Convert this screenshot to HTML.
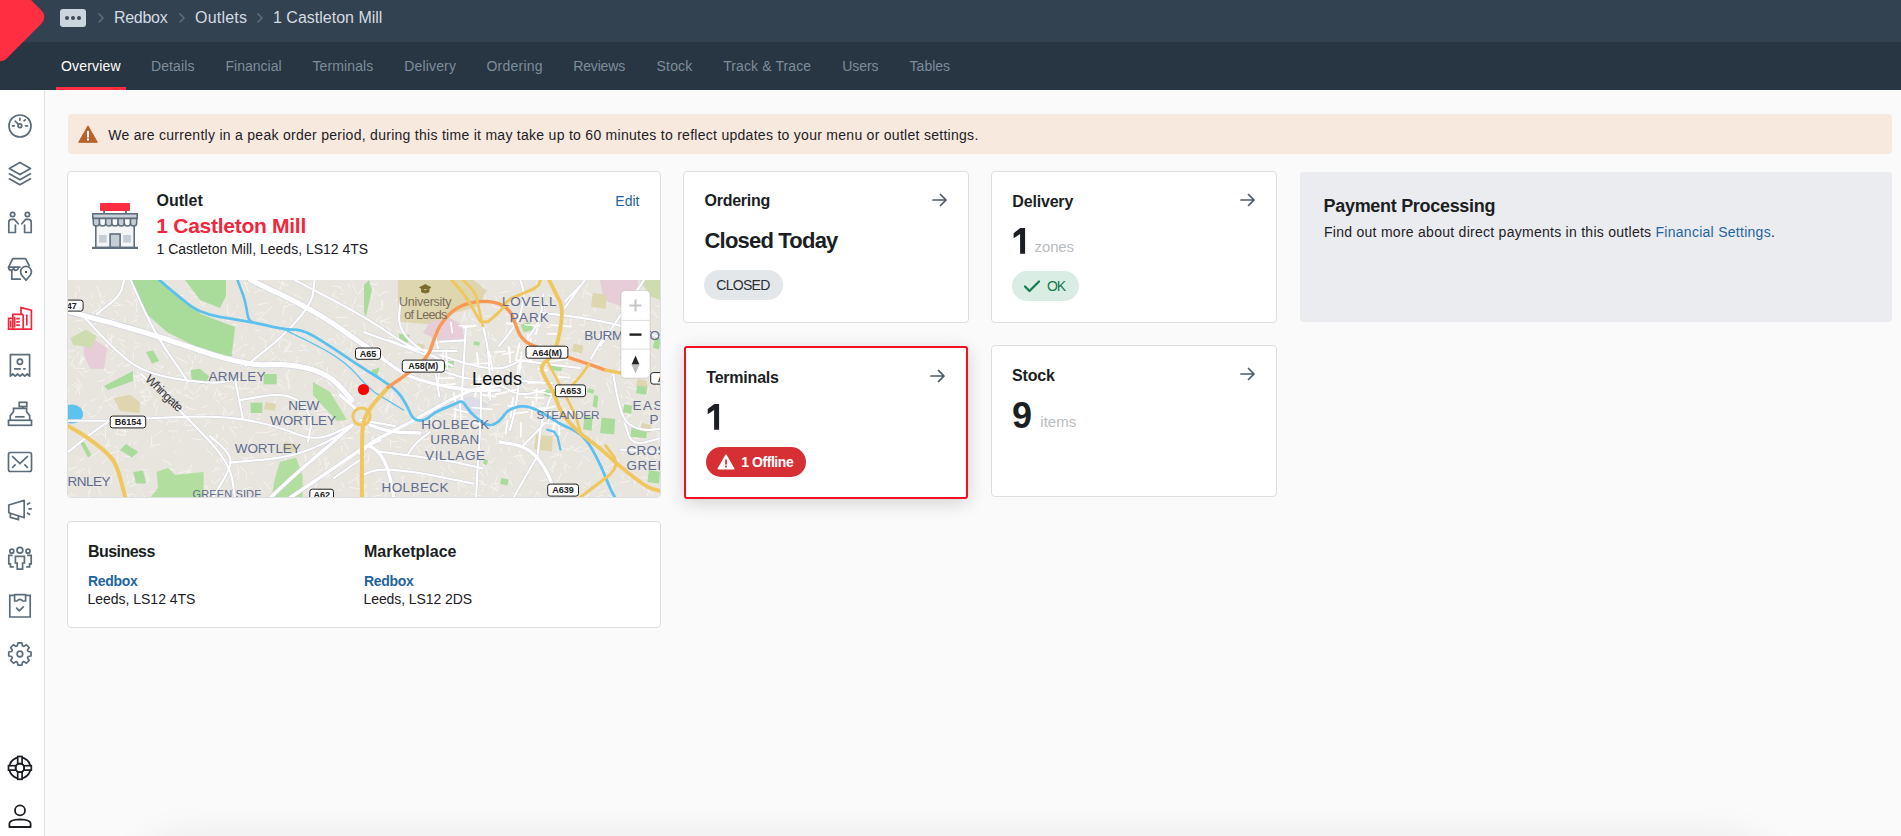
<!DOCTYPE html>
<html><head><meta charset="utf-8">
<style>
*{box-sizing:border-box;margin:0;padding:0}
html,body{width:1901px;height:836px;overflow:hidden;background:#fafafa;font-family:"Liberation Sans",sans-serif;color:#1b1f24}
.abs{position:absolute}
.t{position:absolute;white-space:nowrap}
.card{position:absolute;background:#fff;border:1px solid #dcdee1;border-radius:4px}
</style></head>
<body>
<div class="abs" style="left:0;top:0;width:1901px;height:42px;background:#334250"></div>
<div class="abs" style="left:0;top:42px;width:1901px;height:48px;background:#283542"></div>
<div class="abs" style="left:0;top:0;width:60px;height:90px;overflow:hidden"><div class="abs" style="left:-34px;top:-16.8px;width:68px;height:68px;background:#ff2e40;border-radius:9px;transform:rotate(45deg)"></div></div>

<!-- breadcrumb -->
<div class="abs" style="left:60px;top:9px;width:26px;height:18px;background:#cbd5dd;border-radius:3px"></div>
<div class="abs" style="left:65px;top:16px;width:4px;height:4px;border-radius:2px;background:#3d4a56"></div>
<div class="abs" style="left:71px;top:16px;width:4px;height:4px;border-radius:2px;background:#3d4a56"></div>
<div class="abs" style="left:77px;top:16px;width:4px;height:4px;border-radius:2px;background:#3d4a56"></div>
<svg class="abs" style="left:96px;top:12px" width="10" height="12"><path d="M2.5 1.5 L7 6 L2.5 10.5" stroke="#5d6c7a" stroke-width="1.5" fill="none"/></svg>
<svg class="abs" style="left:177px;top:12px" width="10" height="12"><path d="M2.5 1.5 L7 6 L2.5 10.5" stroke="#5d6c7a" stroke-width="1.5" fill="none"/></svg>
<svg class="abs" style="left:255px;top:12px" width="10" height="12"><path d="M2.5 1.5 L7 6 L2.5 10.5" stroke="#5d6c7a" stroke-width="1.5" fill="none"/></svg>
<div class="abs" style="left:56px;top:87px;width:70px;height:3px;background:#ff2e40"></div>

<!-- sidebar -->
<div class="abs" style="left:0;top:90px;width:45px;height:746px;background:#fff;border-right:1px solid #dfe1e4"></div>
<svg class="abs" style="left:0;top:0" width="45" height="836" viewBox="0 0 45 836">
<g fill="none" stroke="#5b6c7b" stroke-width="1.7" stroke-linecap="round" stroke-linejoin="round">
  <!-- gauge -->
  <circle cx="20" cy="126" r="11"/>
  <circle cx="19.9" cy="125.8" r="1.9"/>
  <path d="M18.6 124.5 L15.2 121.1"/>
  <path d="M19.9 118.3 V120.2 M24 120.8 L25.2 119.8 M12.5 125.8 H14.3 M25.5 125.8 H27.5"/>
  <!-- layers -->
  <path d="M19.9 162.6 L30.5 168.6 L19.9 174.6 L9.3 168.6 Z"/>
  <path d="M9.3 173.8 L19.9 179.8 L30.5 173.8"/>
  <path d="M9.3 178.8 L19.9 184.8 L30.5 178.8"/>
  <!-- people -->
  <circle cx="12.6" cy="214.5" r="2.2"/>
  <circle cx="27.4" cy="214.5" r="2.2"/>
  <path d="M15.4 225 V232.5 H8.8 V222.3 Q8.8 219.4 11.8 219.4 H14.4 L18.2 223.8"/>
  <path d="M24.6 225 V232.5 H31.2 V222.3 Q31.2 219.4 28.2 219.4 H25.6 L21.8 223.8"/>
  <!-- store pin -->
  <path d="M11.8 270.2 V279.2 H20.2"/>
  <path d="M20 267.2 H8.6 L12.8 258.6 H25.6 L29.2 265.5"/>
  <path d="M8.6 267.2 Q8.6 270.3 11.4 270.3 Q13.2 270.3 13.6 268.2 Q14.2 270.3 16 270.3 Q17.8 270.3 18.2 268.2"/>
  <path d="M26 280.3 L21.6 275 Q20.6 273.4 20.6 271.8 A5.4 5.4 0 0 1 31.4 271.8 Q31.4 273.4 30.4 275 Z"/>
</g>
<circle cx="26" cy="272" r="1.1" fill="#1b1f24"/>
<!-- building red -->
<g fill="none" stroke="#f0283c" stroke-width="1.7" stroke-linejoin="miter">
  <path d="M8.6 329.2 V318.4 H12.8 V314.4 H21 V307.6 L31.4 310.2 V329.2 Z"/>
  <path d="M12.8 318.4 V329.2 M23.2 314.4 V329.2 M21 314.4 H23.2"/>
  <path d="M10.6 320.5 V327.5 M14.6 316.8 V327.6 M16.2 318.6 H19.8 M16.2 321.9 H19.8 M16.2 325.1 H19.8 M26.8 314.6 V325.4"/>
</g>
<g fill="none" stroke="#5b6c7b" stroke-width="1.7" stroke-linecap="butt" stroke-linejoin="miter">
  <!-- receipt -->
  <path d="M10.4 376.2 V354.6 H29.6 V376.2 L27.2 374 L24.8 376.2 L22.4 374 L20 376.2 L17.6 374 L15.2 376.2 L12.8 374 Z" stroke-linejoin="round"/>
  <circle cx="19.9" cy="361.8" r="2.6"/>
  <path d="M14.1 368.8 H20.8 M23.2 368.8 H25.6"/>
  <!-- cash register -->
  <rect x="19.2" y="402.3" width="7.6" height="4.2"/>
  <path d="M22.8 406.5 V408.4"/>
  <path d="M10.3 420.3 V415.6 L13.5 411.7 V408.4 H26.6 V411.7 L29.7 415.6 V420.3"/>
  <path d="M15.1 416.8 H24.6"/>
  <rect x="8.5" y="420.3" width="23" height="5"/>
  <!-- mail -->
  <rect x="8.5" y="452.5" width="23" height="19" rx="2"/>
  <path d="M12.2 456.2 L19.9 463.6 L27.8 456.2 M12.2 467.8 L15.6 464.4 M24.4 464.4 L27.8 467.8"/>
  <!-- megaphone -->
  <path d="M8.8 505 L24.2 500.4 V517.7 L8.8 512.7 Z" stroke-linejoin="round"/>
  <path d="M10.4 513.5 V517.3 L18.4 519.6 V515.8"/>
  <path d="M27 504.6 L30.2 502.7 M28.4 508.9 H31.8 M27 512.8 L30.2 514.8"/>
  <!-- group -->
  <circle cx="19.9" cy="550.3" r="2.9"/>
  <circle cx="11.8" cy="551.2" r="2"/>
  <circle cx="28" cy="551.2" r="2"/>
  <path d="M15.4 556.4 H24.4 V563 H22.6 V569.2 H17.2 V563 H15.4 Z"/>
  <path d="M12.6 555.4 H8.8 V563.8 H10.4 V566.8 H13.8"/>
  <path d="M27.2 555.4 H31.2 V563.8 H29.6 V566.8 H26.2"/>
  <!-- clipboard -->
  <path d="M14.6 595.4 H9.8 V617 H30.2 V595.4 H25.6"/>
  <path d="M14.6 594.6 V601 H17 Q19.9 597.6 22.8 601 H25.6 V594.6 Z" stroke-linejoin="round"/>
  <path d="M16.6 608.2 L19.3 610.9 L23.3 606.8" stroke-linecap="round" stroke-linejoin="round"/>
</g>
<!-- gear -->
<g fill="none" stroke="#5b6c7b" stroke-width="1.7" stroke-linejoin="round">
  <path d="M17.36 645.78 L17.92 642.87 L21.88 642.87 L22.44 645.78 L23.91 646.39 L26.37 644.73 L29.17 647.53 L27.51 649.99 L28.12 651.46 L31.03 652.02 L31.03 655.98 L28.12 656.54 L27.51 658.01 L29.17 660.47 L26.37 663.27 L23.91 661.61 L22.44 662.22 L21.88 665.13 L17.92 665.13 L17.36 662.22 L15.89 661.61 L13.43 663.27 L10.63 660.47 L12.29 658.01 L11.68 656.54 L8.77 655.98 L8.77 652.02 L11.68 651.46 L12.29 649.99 L10.63 647.53 L13.43 644.73 L15.89 646.39 Z"/>
  <circle cx="19.9" cy="654" r="2.8"/>
</g>
<!-- lifebuoy -->
<g fill="none" stroke="#1b1f24" stroke-width="1.8">
  <circle cx="19.9" cy="767.9" r="10.6"/>
  <circle cx="19.9" cy="767.9" r="4.3"/>
</g>
<g fill="#fff" stroke="#1b1f24" stroke-width="1.7">
  <rect x="17.7" y="756.5" width="4.4" height="7.2"/>
  <rect x="17.7" y="772.1" width="4.4" height="7.2"/>
  <rect x="8.5" y="765.7" width="7.2" height="4.4"/>
  <rect x="24.1" y="765.7" width="7.2" height="4.4"/>
</g>
<circle cx="19.9" cy="767.9" r="3.4" fill="#fff"/>
<circle cx="19.9" cy="767.9" r="4.3" fill="none" stroke="#1b1f24" stroke-width="1.8"/>
<!-- user -->
<g fill="none" stroke="#1b1f24" stroke-width="1.8" stroke-linejoin="round">
  <circle cx="20" cy="810.4" r="5"/>
  <path d="M9.4 827 V823.6 Q9.4 819.6 20 819.4 Q30.6 819.6 30.6 823.6 V827 Z"/>
</g>
</svg>


<!-- alert -->
<div class="abs" style="left:68px;top:114px;width:1824px;height:40px;background:#f8e9df;border-radius:4px"></div>
<svg class="abs" style="left:78px;top:125px" width="20" height="18"><path d="M10 0.8 L19.3 17.3 L0.7 17.3 Z" fill="#b6622b" stroke="#b6622b" stroke-width="1" stroke-linejoin="round"/><rect x="9" y="6" width="2" height="6.5" fill="#fff"/><rect x="9" y="13.5" width="2" height="2" fill="#fff"/></svg>

<!-- outlet card -->
<div class="card" style="left:67px;top:171px;width:594px;height:327px;overflow:hidden"></div>
<svg class="abs" style="left:90px;top:201px" width="50" height="50" viewBox="90 201 50 50">
  <rect x="100" y="203" width="30" height="8" rx="1" fill="#ff2d40"/>
  <rect x="103.2" y="210.5" width="1.8" height="3.5" fill="#5f6f7d"/>
  <rect x="125" y="210.5" width="1.8" height="3.5" fill="#5f6f7d"/>
  <rect x="95.8" y="224" width="38.4" height="23.5" fill="#f4f5f6" stroke="#5f6f7d" stroke-width="1.6"/>
  <rect x="92.8" y="213.8" width="44.4" height="4.6" fill="#c9d2da" stroke="#5f6f7d" stroke-width="1.6"/>
  <path d="M93.3 218.4 V223 A3.10 3.10 0 0 0 99.5 223 V218.4 Z" fill="#c5ced6" stroke="#5f6f7d" stroke-width="1.5" stroke-linejoin="round"/><path d="M99.5 218.4 V223 A3.10 3.10 0 0 0 105.7 223 V218.4 Z" fill="#f6f7f8" stroke="#5f6f7d" stroke-width="1.5" stroke-linejoin="round"/><path d="M105.7 218.4 V223 A3.10 3.10 0 0 0 111.9 223 V218.4 Z" fill="#c5ced6" stroke="#5f6f7d" stroke-width="1.5" stroke-linejoin="round"/><path d="M111.9 218.4 V223 A3.10 3.10 0 0 0 118.1 223 V218.4 Z" fill="#f6f7f8" stroke="#5f6f7d" stroke-width="1.5" stroke-linejoin="round"/><path d="M118.1 218.4 V223 A3.10 3.10 0 0 0 124.3 223 V218.4 Z" fill="#c5ced6" stroke="#5f6f7d" stroke-width="1.5" stroke-linejoin="round"/><path d="M124.3 218.4 V223 A3.10 3.10 0 0 0 130.5 223 V218.4 Z" fill="#f6f7f8" stroke="#5f6f7d" stroke-width="1.5" stroke-linejoin="round"/><path d="M130.5 218.4 V223 A3.10 3.10 0 0 0 136.7 223 V218.4 Z" fill="#c5ced6" stroke="#5f6f7d" stroke-width="1.5" stroke-linejoin="round"/>
  <rect x="99" y="235" width="7.7" height="7.6" fill="#c5ced6"/>
  <rect x="123.2" y="235" width="7.8" height="7.6" fill="#c5ced6"/>
  <rect x="110.1" y="234" width="10" height="13.5" fill="#c5ced6" stroke="#5f6f7d" stroke-width="1.6"/>
  <rect x="92" y="246.8" width="46" height="2.2" fill="#5f6f7d"/>
</svg>
<div class="abs" style="left:68px;top:280px;width:592px;height:217px;overflow:hidden;background:#e8e4df">
<svg width="592" height="217" viewBox="68 280 592 217" style="position:absolute;left:0;top:0;display:block">
<rect x="68" y="280" width="592" height="217" fill="#e8e4de"/>
<line x1="335.8" y1="401.5" x2="337.0" y2="412.7" stroke="#f7f5f2" stroke-width="0.9"/>
<line x1="368.6" y1="407.5" x2="368.5" y2="412.1" stroke="#f7f5f2" stroke-width="0.9"/>
<line x1="440.9" y1="452.1" x2="443.1" y2="455.2" stroke="#f7f5f2" stroke-width="0.9"/>
<line x1="121.7" y1="455.7" x2="130.8" y2="456.9" stroke="#f7f5f2" stroke-width="0.9"/>
<line x1="649.5" y1="489.4" x2="646.3" y2="497.7" stroke="#f7f5f2" stroke-width="0.9"/>
<line x1="161.2" y1="283.3" x2="168.9" y2="284.7" stroke="#f7f5f2" stroke-width="0.9"/>
<line x1="180.6" y1="332.5" x2="181.0" y2="335.8" stroke="#f7f5f2" stroke-width="0.9"/>
<line x1="328.8" y1="462.8" x2="325.5" y2="469.7" stroke="#f7f5f2" stroke-width="0.9"/>
<line x1="363.9" y1="423.8" x2="368.4" y2="429.2" stroke="#f7f5f2" stroke-width="0.9"/>
<line x1="658.6" y1="496.1" x2="652.2" y2="504.5" stroke="#f7f5f2" stroke-width="0.9"/>
<line x1="254.6" y1="329.8" x2="260.1" y2="331.1" stroke="#f7f5f2" stroke-width="0.9"/>
<line x1="521.6" y1="366.9" x2="525.3" y2="376.8" stroke="#f7f5f2" stroke-width="0.9"/>
<line x1="635.2" y1="463.9" x2="637.5" y2="465.7" stroke="#f7f5f2" stroke-width="0.9"/>
<line x1="606.9" y1="382.0" x2="610.6" y2="393.2" stroke="#f7f5f2" stroke-width="0.9"/>
<line x1="111.2" y1="416.6" x2="117.9" y2="424.1" stroke="#f7f5f2" stroke-width="0.9"/>
<line x1="119.6" y1="352.2" x2="111.1" y2="360.2" stroke="#f7f5f2" stroke-width="0.9"/>
<line x1="137.9" y1="333.5" x2="141.7" y2="334.2" stroke="#f7f5f2" stroke-width="0.9"/>
<line x1="539.8" y1="318.6" x2="541.2" y2="326.5" stroke="#f7f5f2" stroke-width="0.9"/>
<line x1="180.9" y1="438.8" x2="179.1" y2="442.6" stroke="#f7f5f2" stroke-width="0.9"/>
<line x1="137.0" y1="371.3" x2="140.2" y2="375.0" stroke="#f7f5f2" stroke-width="0.9"/>
<line x1="642.8" y1="454.3" x2="637.4" y2="456.4" stroke="#f7f5f2" stroke-width="0.9"/>
<line x1="192.7" y1="365.6" x2="188.1" y2="375.2" stroke="#f7f5f2" stroke-width="0.9"/>
<line x1="127.4" y1="494.7" x2="130.8" y2="498.2" stroke="#f7f5f2" stroke-width="0.9"/>
<line x1="525.4" y1="351.4" x2="530.9" y2="352.7" stroke="#f7f5f2" stroke-width="0.9"/>
<line x1="121.3" y1="406.5" x2="119.7" y2="411.4" stroke="#f7f5f2" stroke-width="0.9"/>
<line x1="288.0" y1="378.3" x2="288.6" y2="390.0" stroke="#f7f5f2" stroke-width="0.9"/>
<line x1="408.1" y1="468.0" x2="412.3" y2="470.2" stroke="#f7f5f2" stroke-width="0.9"/>
<line x1="605.8" y1="457.5" x2="610.1" y2="460.4" stroke="#f7f5f2" stroke-width="0.9"/>
<line x1="505.7" y1="484.1" x2="501.0" y2="484.8" stroke="#f7f5f2" stroke-width="0.9"/>
<line x1="590.3" y1="411.0" x2="596.7" y2="413.1" stroke="#f7f5f2" stroke-width="0.9"/>
<line x1="90.9" y1="488.9" x2="87.8" y2="493.0" stroke="#f7f5f2" stroke-width="0.9"/>
<line x1="220.1" y1="458.7" x2="225.2" y2="465.4" stroke="#f7f5f2" stroke-width="0.9"/>
<line x1="171.9" y1="436.3" x2="174.6" y2="438.7" stroke="#f7f5f2" stroke-width="0.9"/>
<line x1="399.1" y1="465.0" x2="404.6" y2="471.5" stroke="#f7f5f2" stroke-width="0.9"/>
<line x1="611.1" y1="324.3" x2="613.2" y2="326.6" stroke="#f7f5f2" stroke-width="0.9"/>
<line x1="331.9" y1="293.1" x2="333.7" y2="297.3" stroke="#f7f5f2" stroke-width="0.9"/>
<line x1="406.7" y1="308.6" x2="400.8" y2="310.7" stroke="#f7f5f2" stroke-width="0.9"/>
<line x1="648.5" y1="422.6" x2="646.0" y2="431.5" stroke="#f7f5f2" stroke-width="0.9"/>
<line x1="151.1" y1="287.6" x2="148.0" y2="288.5" stroke="#f7f5f2" stroke-width="0.9"/>
<line x1="483.0" y1="488.9" x2="481.7" y2="491.8" stroke="#f7f5f2" stroke-width="0.9"/>
<line x1="353.5" y1="438.5" x2="347.6" y2="438.5" stroke="#f7f5f2" stroke-width="0.9"/>
<line x1="112.6" y1="398.5" x2="103.4" y2="401.5" stroke="#f7f5f2" stroke-width="0.9"/>
<line x1="504.4" y1="432.7" x2="494.6" y2="435.4" stroke="#f7f5f2" stroke-width="0.9"/>
<line x1="276.3" y1="428.7" x2="266.1" y2="433.1" stroke="#f7f5f2" stroke-width="0.9"/>
<line x1="315.0" y1="451.5" x2="312.5" y2="462.0" stroke="#f7f5f2" stroke-width="0.9"/>
<line x1="438.0" y1="363.0" x2="435.2" y2="370.7" stroke="#f7f5f2" stroke-width="0.9"/>
<line x1="115.5" y1="418.8" x2="104.4" y2="423.2" stroke="#f7f5f2" stroke-width="0.9"/>
<line x1="499.1" y1="364.3" x2="496.7" y2="373.6" stroke="#f7f5f2" stroke-width="0.9"/>
<line x1="328.8" y1="461.9" x2="326.1" y2="464.6" stroke="#f7f5f2" stroke-width="0.9"/>
<line x1="85.6" y1="410.5" x2="91.1" y2="415.3" stroke="#f7f5f2" stroke-width="0.9"/>
<line x1="481.4" y1="387.9" x2="473.1" y2="390.0" stroke="#f7f5f2" stroke-width="0.9"/>
<line x1="219.5" y1="282.5" x2="216.4" y2="287.3" stroke="#f7f5f2" stroke-width="0.9"/>
<line x1="187.9" y1="316.8" x2="182.6" y2="326.6" stroke="#f7f5f2" stroke-width="0.9"/>
<line x1="329.6" y1="473.5" x2="326.7" y2="478.7" stroke="#f7f5f2" stroke-width="0.9"/>
<line x1="185.5" y1="373.5" x2="175.6" y2="376.2" stroke="#f7f5f2" stroke-width="0.9"/>
<line x1="589.1" y1="363.4" x2="593.6" y2="370.3" stroke="#f7f5f2" stroke-width="0.9"/>
<line x1="148.6" y1="387.7" x2="139.2" y2="392.6" stroke="#f7f5f2" stroke-width="0.9"/>
<line x1="489.0" y1="486.2" x2="493.8" y2="488.9" stroke="#f7f5f2" stroke-width="0.9"/>
<line x1="334.8" y1="339.7" x2="336.1" y2="344.5" stroke="#f7f5f2" stroke-width="0.9"/>
<line x1="438.4" y1="387.2" x2="433.3" y2="390.0" stroke="#f7f5f2" stroke-width="0.9"/>
<line x1="649.4" y1="378.2" x2="653.0" y2="378.6" stroke="#f7f5f2" stroke-width="0.9"/>
<line x1="584.7" y1="289.0" x2="582.7" y2="298.2" stroke="#f7f5f2" stroke-width="0.9"/>
<line x1="250.9" y1="451.8" x2="253.8" y2="453.1" stroke="#f7f5f2" stroke-width="0.9"/>
<line x1="337.3" y1="285.4" x2="344.9" y2="292.5" stroke="#f7f5f2" stroke-width="0.9"/>
<line x1="151.4" y1="290.2" x2="152.8" y2="298.7" stroke="#f7f5f2" stroke-width="0.9"/>
<line x1="440.9" y1="422.1" x2="430.8" y2="423.5" stroke="#f7f5f2" stroke-width="0.9"/>
<line x1="473.2" y1="323.3" x2="479.4" y2="327.1" stroke="#f7f5f2" stroke-width="0.9"/>
<line x1="74.4" y1="382.5" x2="82.3" y2="387.5" stroke="#f7f5f2" stroke-width="0.9"/>
<line x1="229.2" y1="355.0" x2="228.6" y2="364.3" stroke="#f7f5f2" stroke-width="0.9"/>
<line x1="431.8" y1="444.1" x2="426.6" y2="448.1" stroke="#f7f5f2" stroke-width="0.9"/>
<line x1="604.5" y1="298.9" x2="597.2" y2="307.6" stroke="#f7f5f2" stroke-width="0.9"/>
<line x1="144.9" y1="378.4" x2="136.6" y2="380.8" stroke="#f7f5f2" stroke-width="0.9"/>
<line x1="291.1" y1="403.4" x2="282.3" y2="409.9" stroke="#f7f5f2" stroke-width="0.9"/>
<line x1="627.0" y1="380.6" x2="634.1" y2="385.9" stroke="#f7f5f2" stroke-width="0.9"/>
<line x1="495.4" y1="457.6" x2="489.8" y2="464.4" stroke="#f7f5f2" stroke-width="0.9"/>
<line x1="194.3" y1="475.3" x2="182.5" y2="476.1" stroke="#f7f5f2" stroke-width="0.9"/>
<line x1="385.9" y1="451.6" x2="380.2" y2="453.2" stroke="#f7f5f2" stroke-width="0.9"/>
<line x1="574.6" y1="355.6" x2="575.3" y2="359.3" stroke="#f7f5f2" stroke-width="0.9"/>
<line x1="393.8" y1="446.7" x2="401.1" y2="447.4" stroke="#f7f5f2" stroke-width="0.9"/>
<line x1="547.0" y1="293.9" x2="555.7" y2="299.2" stroke="#f7f5f2" stroke-width="0.9"/>
<line x1="266.3" y1="451.0" x2="270.1" y2="452.9" stroke="#f7f5f2" stroke-width="0.9"/>
<line x1="373.8" y1="437.0" x2="367.9" y2="445.8" stroke="#f7f5f2" stroke-width="0.9"/>
<line x1="627.9" y1="386.9" x2="639.0" y2="390.0" stroke="#f7f5f2" stroke-width="0.9"/>
<line x1="199.1" y1="394.3" x2="195.4" y2="398.5" stroke="#f7f5f2" stroke-width="0.9"/>
<line x1="446.2" y1="393.4" x2="444.2" y2="403.8" stroke="#f7f5f2" stroke-width="0.9"/>
<line x1="252.5" y1="362.7" x2="242.4" y2="366.0" stroke="#f7f5f2" stroke-width="0.9"/>
<line x1="191.3" y1="464.6" x2="190.4" y2="476.3" stroke="#f7f5f2" stroke-width="0.9"/>
<line x1="407.2" y1="323.6" x2="407.1" y2="331.4" stroke="#f7f5f2" stroke-width="0.9"/>
<line x1="426.3" y1="286.0" x2="425.7" y2="297.7" stroke="#f7f5f2" stroke-width="0.9"/>
<line x1="305.1" y1="453.8" x2="305.4" y2="461.9" stroke="#f7f5f2" stroke-width="0.9"/>
<line x1="477.1" y1="294.3" x2="479.2" y2="301.9" stroke="#f7f5f2" stroke-width="0.9"/>
<line x1="634.5" y1="480.4" x2="634.9" y2="485.8" stroke="#f7f5f2" stroke-width="0.9"/>
<line x1="143.2" y1="374.1" x2="133.3" y2="377.3" stroke="#f7f5f2" stroke-width="0.9"/>
<line x1="350.1" y1="348.8" x2="348.4" y2="353.2" stroke="#f7f5f2" stroke-width="0.9"/>
<line x1="615.8" y1="308.1" x2="625.7" y2="308.8" stroke="#f7f5f2" stroke-width="0.9"/>
<line x1="182.9" y1="329.3" x2="187.8" y2="337.1" stroke="#f7f5f2" stroke-width="0.9"/>
<line x1="278.4" y1="414.5" x2="275.7" y2="417.4" stroke="#f7f5f2" stroke-width="0.9"/>
<line x1="140.7" y1="390.8" x2="145.0" y2="393.8" stroke="#f7f5f2" stroke-width="0.9"/>
<line x1="382.0" y1="374.8" x2="383.7" y2="380.9" stroke="#f7f5f2" stroke-width="0.9"/>
<line x1="381.4" y1="314.7" x2="379.4" y2="319.1" stroke="#f7f5f2" stroke-width="0.9"/>
<line x1="446.0" y1="394.9" x2="442.3" y2="404.9" stroke="#f7f5f2" stroke-width="0.9"/>
<line x1="575.2" y1="330.5" x2="567.2" y2="335.9" stroke="#f7f5f2" stroke-width="0.9"/>
<line x1="602.4" y1="348.5" x2="596.7" y2="349.9" stroke="#f7f5f2" stroke-width="0.9"/>
<line x1="197.1" y1="496.6" x2="207.2" y2="501.1" stroke="#f7f5f2" stroke-width="0.9"/>
<line x1="209.7" y1="437.7" x2="214.8" y2="439.3" stroke="#f7f5f2" stroke-width="0.9"/>
<line x1="560.6" y1="371.5" x2="570.0" y2="375.4" stroke="#f7f5f2" stroke-width="0.9"/>
<line x1="306.4" y1="428.7" x2="309.0" y2="430.6" stroke="#f7f5f2" stroke-width="0.9"/>
<line x1="472.0" y1="477.8" x2="482.9" y2="481.9" stroke="#f7f5f2" stroke-width="0.9"/>
<line x1="367.4" y1="444.5" x2="363.2" y2="450.8" stroke="#f7f5f2" stroke-width="0.9"/>
<line x1="179.9" y1="295.3" x2="183.8" y2="295.8" stroke="#f7f5f2" stroke-width="0.9"/>
<line x1="394.6" y1="391.7" x2="401.9" y2="395.3" stroke="#f7f5f2" stroke-width="0.9"/>
<line x1="177.2" y1="324.2" x2="166.7" y2="324.6" stroke="#f7f5f2" stroke-width="0.9"/>
<line x1="616.7" y1="300.7" x2="613.2" y2="301.2" stroke="#f7f5f2" stroke-width="0.9"/>
<line x1="341.5" y1="445.9" x2="342.2" y2="451.9" stroke="#f7f5f2" stroke-width="0.9"/>
<line x1="373.0" y1="373.3" x2="381.5" y2="373.7" stroke="#f7f5f2" stroke-width="0.9"/>
<line x1="483.0" y1="463.2" x2="483.7" y2="467.8" stroke="#f7f5f2" stroke-width="0.9"/>
<line x1="505.7" y1="368.0" x2="509.8" y2="370.3" stroke="#f7f5f2" stroke-width="0.9"/>
<line x1="371.4" y1="283.3" x2="362.5" y2="289.8" stroke="#f7f5f2" stroke-width="0.9"/>
<line x1="485.2" y1="466.8" x2="487.7" y2="475.1" stroke="#f7f5f2" stroke-width="0.9"/>
<line x1="423.0" y1="389.4" x2="413.3" y2="396.2" stroke="#f7f5f2" stroke-width="0.9"/>
<line x1="220.9" y1="477.8" x2="213.5" y2="484.0" stroke="#f7f5f2" stroke-width="0.9"/>
<line x1="550.3" y1="368.0" x2="540.0" y2="372.1" stroke="#f7f5f2" stroke-width="0.9"/>
<line x1="479.3" y1="446.5" x2="482.2" y2="456.0" stroke="#f7f5f2" stroke-width="0.9"/>
<line x1="495.8" y1="295.3" x2="496.4" y2="301.4" stroke="#f7f5f2" stroke-width="0.9"/>
<line x1="74.3" y1="357.2" x2="70.9" y2="365.3" stroke="#f7f5f2" stroke-width="0.9"/>
<line x1="205.4" y1="485.0" x2="209.8" y2="492.8" stroke="#f7f5f2" stroke-width="0.9"/>
<line x1="458.6" y1="403.6" x2="461.2" y2="410.9" stroke="#f7f5f2" stroke-width="0.9"/>
<line x1="659.9" y1="419.4" x2="653.1" y2="425.7" stroke="#f7f5f2" stroke-width="0.9"/>
<line x1="648.2" y1="285.0" x2="642.4" y2="291.2" stroke="#f7f5f2" stroke-width="0.9"/>
<line x1="219.9" y1="367.1" x2="222.8" y2="369.1" stroke="#f7f5f2" stroke-width="0.9"/>
<line x1="290.4" y1="301.4" x2="285.4" y2="302.9" stroke="#f7f5f2" stroke-width="0.9"/>
<line x1="393.6" y1="390.2" x2="391.2" y2="401.6" stroke="#f7f5f2" stroke-width="0.9"/>
<line x1="657.1" y1="418.4" x2="667.1" y2="420.9" stroke="#f7f5f2" stroke-width="0.9"/>
<line x1="421.7" y1="444.8" x2="418.4" y2="445.5" stroke="#f7f5f2" stroke-width="0.9"/>
<line x1="162.7" y1="382.4" x2="162.7" y2="386.9" stroke="#f7f5f2" stroke-width="0.9"/>
<line x1="429.8" y1="292.7" x2="432.7" y2="303.9" stroke="#f7f5f2" stroke-width="0.9"/>
<line x1="379.8" y1="409.7" x2="383.8" y2="414.6" stroke="#f7f5f2" stroke-width="0.9"/>
<line x1="455.8" y1="401.7" x2="452.3" y2="406.0" stroke="#f7f5f2" stroke-width="0.9"/>
<line x1="243.3" y1="283.0" x2="248.4" y2="283.7" stroke="#f7f5f2" stroke-width="0.9"/>
<line x1="160.7" y1="443.8" x2="154.5" y2="445.8" stroke="#f7f5f2" stroke-width="0.9"/>
<line x1="511.0" y1="290.9" x2="499.3" y2="293.0" stroke="#f7f5f2" stroke-width="0.9"/>
<line x1="111.5" y1="476.5" x2="112.0" y2="483.4" stroke="#f7f5f2" stroke-width="0.9"/>
<line x1="644.1" y1="332.9" x2="636.6" y2="334.4" stroke="#f7f5f2" stroke-width="0.9"/>
<line x1="495.9" y1="381.6" x2="486.0" y2="388.1" stroke="#f7f5f2" stroke-width="0.9"/>
<line x1="425.3" y1="305.0" x2="426.5" y2="313.5" stroke="#f7f5f2" stroke-width="0.9"/>
<line x1="188.6" y1="291.3" x2="195.7" y2="294.2" stroke="#f7f5f2" stroke-width="0.9"/>
<line x1="330.2" y1="424.9" x2="335.0" y2="430.1" stroke="#f7f5f2" stroke-width="0.9"/>
<line x1="412.7" y1="371.0" x2="411.7" y2="381.0" stroke="#f7f5f2" stroke-width="0.9"/>
<line x1="658.6" y1="486.7" x2="665.6" y2="493.3" stroke="#f7f5f2" stroke-width="0.9"/>
<line x1="135.4" y1="473.7" x2="131.6" y2="483.0" stroke="#f7f5f2" stroke-width="0.9"/>
<line x1="280.6" y1="338.9" x2="278.8" y2="347.9" stroke="#f7f5f2" stroke-width="0.9"/>
<line x1="418.3" y1="417.4" x2="426.4" y2="422.9" stroke="#f7f5f2" stroke-width="0.9"/>
<line x1="215.4" y1="492.6" x2="204.9" y2="496.8" stroke="#f7f5f2" stroke-width="0.9"/>
<line x1="91.4" y1="293.2" x2="92.7" y2="298.5" stroke="#f7f5f2" stroke-width="0.9"/>
<line x1="437.0" y1="302.2" x2="444.7" y2="304.0" stroke="#f7f5f2" stroke-width="0.9"/>
<line x1="119.2" y1="426.8" x2="116.0" y2="434.0" stroke="#f7f5f2" stroke-width="0.9"/>
<line x1="288.9" y1="383.8" x2="291.2" y2="388.2" stroke="#f7f5f2" stroke-width="0.9"/>
<line x1="508.9" y1="462.0" x2="512.3" y2="463.3" stroke="#f7f5f2" stroke-width="0.9"/>
<line x1="547.0" y1="415.3" x2="554.8" y2="421.5" stroke="#f7f5f2" stroke-width="0.9"/>
<line x1="319.2" y1="336.0" x2="323.3" y2="345.4" stroke="#f7f5f2" stroke-width="0.9"/>
<line x1="455.0" y1="494.7" x2="454.1" y2="500.5" stroke="#f7f5f2" stroke-width="0.9"/>
<line x1="509.7" y1="479.8" x2="512.4" y2="486.1" stroke="#f7f5f2" stroke-width="0.9"/>
<line x1="125.4" y1="469.9" x2="129.0" y2="470.9" stroke="#f7f5f2" stroke-width="0.9"/>
<line x1="402.0" y1="385.2" x2="407.4" y2="392.6" stroke="#f7f5f2" stroke-width="0.9"/>
<line x1="527.1" y1="296.5" x2="524.7" y2="300.8" stroke="#f7f5f2" stroke-width="0.9"/>
<line x1="116.4" y1="345.9" x2="110.9" y2="353.7" stroke="#f7f5f2" stroke-width="0.9"/>
<line x1="235.5" y1="311.0" x2="231.4" y2="315.7" stroke="#f7f5f2" stroke-width="0.9"/>
<line x1="284.9" y1="305.5" x2="282.9" y2="314.6" stroke="#f7f5f2" stroke-width="0.9"/>
<line x1="611.8" y1="484.0" x2="614.0" y2="495.0" stroke="#f7f5f2" stroke-width="0.9"/>
<line x1="543.4" y1="346.1" x2="545.2" y2="351.7" stroke="#f7f5f2" stroke-width="0.9"/>
<line x1="621.3" y1="474.2" x2="623.5" y2="478.9" stroke="#f7f5f2" stroke-width="0.9"/>
<line x1="284.4" y1="358.8" x2="286.7" y2="365.0" stroke="#f7f5f2" stroke-width="0.9"/>
<line x1="183.4" y1="402.3" x2="182.1" y2="412.4" stroke="#f7f5f2" stroke-width="0.9"/>
<line x1="563.1" y1="402.1" x2="559.8" y2="405.3" stroke="#f7f5f2" stroke-width="0.9"/>
<line x1="589.5" y1="341.1" x2="589.3" y2="344.3" stroke="#f7f5f2" stroke-width="0.9"/>
<line x1="390.1" y1="403.1" x2="384.8" y2="413.5" stroke="#f7f5f2" stroke-width="0.9"/>
<line x1="544.2" y1="293.9" x2="537.9" y2="298.8" stroke="#f7f5f2" stroke-width="0.9"/>
<line x1="117.8" y1="297.7" x2="108.6" y2="300.7" stroke="#f7f5f2" stroke-width="0.9"/>
<line x1="118.1" y1="417.6" x2="115.1" y2="420.7" stroke="#f7f5f2" stroke-width="0.9"/>
<line x1="452.2" y1="333.3" x2="448.5" y2="336.6" stroke="#f7f5f2" stroke-width="0.9"/>
<line x1="376.8" y1="445.9" x2="380.0" y2="451.7" stroke="#f7f5f2" stroke-width="0.9"/>
<line x1="641.2" y1="425.9" x2="640.3" y2="433.3" stroke="#f7f5f2" stroke-width="0.9"/>
<line x1="494.8" y1="433.7" x2="497.9" y2="444.5" stroke="#f7f5f2" stroke-width="0.9"/>
<line x1="557.1" y1="424.7" x2="548.4" y2="430.8" stroke="#f7f5f2" stroke-width="0.9"/>
<line x1="561.6" y1="472.8" x2="556.7" y2="483.3" stroke="#f7f5f2" stroke-width="0.9"/>
<line x1="378.1" y1="434.1" x2="380.6" y2="444.0" stroke="#f7f5f2" stroke-width="0.9"/>
<line x1="316.9" y1="311.7" x2="307.2" y2="312.0" stroke="#f7f5f2" stroke-width="0.9"/>
<line x1="290.3" y1="316.4" x2="291.4" y2="321.1" stroke="#f7f5f2" stroke-width="0.9"/>
<line x1="240.9" y1="490.4" x2="242.9" y2="493.4" stroke="#f7f5f2" stroke-width="0.9"/>
<line x1="136.0" y1="420.6" x2="144.4" y2="425.9" stroke="#f7f5f2" stroke-width="0.9"/>
<line x1="104.9" y1="379.6" x2="97.0" y2="381.9" stroke="#f7f5f2" stroke-width="0.9"/>
<line x1="89.5" y1="303.6" x2="93.1" y2="306.5" stroke="#f7f5f2" stroke-width="0.9"/>
<line x1="207.4" y1="435.6" x2="213.7" y2="441.0" stroke="#f7f5f2" stroke-width="0.9"/>
<line x1="177.5" y1="341.0" x2="174.2" y2="344.1" stroke="#f7f5f2" stroke-width="0.9"/>
<line x1="252.5" y1="399.0" x2="253.2" y2="409.3" stroke="#f7f5f2" stroke-width="0.9"/>
<line x1="222.2" y1="472.6" x2="227.5" y2="482.4" stroke="#f7f5f2" stroke-width="0.9"/>
<line x1="392.0" y1="487.7" x2="397.7" y2="492.4" stroke="#f7f5f2" stroke-width="0.9"/>
<line x1="97.4" y1="485.6" x2="101.0" y2="495.2" stroke="#f7f5f2" stroke-width="0.9"/>
<line x1="380.3" y1="391.9" x2="374.9" y2="392.1" stroke="#f7f5f2" stroke-width="0.9"/>
<line x1="457.3" y1="331.6" x2="457.5" y2="334.6" stroke="#f7f5f2" stroke-width="0.9"/>
<line x1="288.0" y1="452.9" x2="284.9" y2="461.8" stroke="#f7f5f2" stroke-width="0.9"/>
<line x1="161.1" y1="314.0" x2="165.2" y2="318.3" stroke="#f7f5f2" stroke-width="0.9"/>
<line x1="582.6" y1="392.0" x2="573.9" y2="392.2" stroke="#f7f5f2" stroke-width="0.9"/>
<line x1="225.8" y1="396.0" x2="222.5" y2="398.9" stroke="#f7f5f2" stroke-width="0.9"/>
<line x1="68.8" y1="458.2" x2="59.8" y2="463.9" stroke="#f7f5f2" stroke-width="0.9"/>
<line x1="116.8" y1="338.6" x2="125.8" y2="341.4" stroke="#f7f5f2" stroke-width="0.9"/>
<line x1="352.2" y1="381.7" x2="349.1" y2="392.9" stroke="#f7f5f2" stroke-width="0.9"/>
<line x1="575.5" y1="345.9" x2="578.2" y2="355.6" stroke="#f7f5f2" stroke-width="0.9"/>
<line x1="610.7" y1="299.7" x2="619.0" y2="306.1" stroke="#f7f5f2" stroke-width="0.9"/>
<line x1="389.7" y1="394.1" x2="385.9" y2="396.3" stroke="#f7f5f2" stroke-width="0.9"/>
<line x1="252.4" y1="347.4" x2="254.5" y2="350.5" stroke="#f7f5f2" stroke-width="0.9"/>
<line x1="344.6" y1="435.2" x2="341.1" y2="440.4" stroke="#f7f5f2" stroke-width="0.9"/>
<line x1="130.6" y1="365.5" x2="123.5" y2="366.3" stroke="#f7f5f2" stroke-width="0.9"/>
<line x1="559.2" y1="421.9" x2="560.4" y2="424.8" stroke="#f7f5f2" stroke-width="0.9"/>
<line x1="488.3" y1="331.5" x2="489.4" y2="339.5" stroke="#f7f5f2" stroke-width="0.9"/>
<line x1="74.2" y1="495.2" x2="82.3" y2="501.3" stroke="#f7f5f2" stroke-width="0.9"/>
<line x1="432.7" y1="343.0" x2="431.9" y2="349.3" stroke="#f7f5f2" stroke-width="0.9"/>
<line x1="244.5" y1="353.2" x2="241.3" y2="358.9" stroke="#f7f5f2" stroke-width="0.9"/>
<line x1="219.8" y1="323.4" x2="224.7" y2="331.6" stroke="#f7f5f2" stroke-width="0.9"/>
<line x1="627.5" y1="402.1" x2="632.3" y2="410.3" stroke="#f7f5f2" stroke-width="0.9"/>
<line x1="557.5" y1="300.0" x2="561.6" y2="301.3" stroke="#f7f5f2" stroke-width="0.9"/>
<line x1="469.2" y1="433.7" x2="470.6" y2="438.1" stroke="#f7f5f2" stroke-width="0.9"/>
<line x1="563.5" y1="408.6" x2="566.3" y2="411.1" stroke="#f7f5f2" stroke-width="0.9"/>
<line x1="161.0" y1="306.9" x2="167.5" y2="308.4" stroke="#f7f5f2" stroke-width="0.9"/>
<line x1="613.0" y1="372.7" x2="609.6" y2="379.5" stroke="#f7f5f2" stroke-width="0.9"/>
<line x1="522.0" y1="458.2" x2="525.3" y2="463.8" stroke="#f7f5f2" stroke-width="0.9"/>
<line x1="312.0" y1="283.3" x2="308.1" y2="288.7" stroke="#f7f5f2" stroke-width="0.9"/>
<line x1="649.3" y1="451.4" x2="646.3" y2="459.8" stroke="#f7f5f2" stroke-width="0.9"/>
<line x1="79.0" y1="351.8" x2="76.2" y2="357.2" stroke="#f7f5f2" stroke-width="0.9"/>
<line x1="130.9" y1="361.9" x2="124.9" y2="366.6" stroke="#f7f5f2" stroke-width="0.9"/>
<line x1="556.5" y1="412.7" x2="553.2" y2="415.6" stroke="#f7f5f2" stroke-width="0.9"/>
<line x1="602.6" y1="399.0" x2="602.6" y2="405.1" stroke="#f7f5f2" stroke-width="0.9"/>
<line x1="151.9" y1="434.8" x2="151.3" y2="446.7" stroke="#f7f5f2" stroke-width="0.9"/>
<line x1="491.5" y1="461.3" x2="486.8" y2="462.1" stroke="#f7f5f2" stroke-width="0.9"/>
<line x1="439.3" y1="322.9" x2="441.9" y2="325.5" stroke="#f7f5f2" stroke-width="0.9"/>
<line x1="409.3" y1="431.3" x2="403.5" y2="432.6" stroke="#f7f5f2" stroke-width="0.9"/>
<line x1="281.8" y1="380.5" x2="277.7" y2="380.8" stroke="#f7f5f2" stroke-width="0.9"/>
<line x1="148.3" y1="476.2" x2="146.8" y2="483.9" stroke="#f7f5f2" stroke-width="0.9"/>
<line x1="399.7" y1="337.4" x2="388.5" y2="337.6" stroke="#f7f5f2" stroke-width="0.9"/>
<line x1="552.0" y1="410.5" x2="548.5" y2="412.7" stroke="#f7f5f2" stroke-width="0.9"/>
<line x1="238.8" y1="474.7" x2="237.7" y2="479.7" stroke="#f7f5f2" stroke-width="0.9"/>
<line x1="559.8" y1="320.3" x2="567.5" y2="322.2" stroke="#f7f5f2" stroke-width="0.9"/>
<line x1="87.0" y1="319.1" x2="75.3" y2="321.3" stroke="#f7f5f2" stroke-width="0.9"/>
<line x1="457.8" y1="346.8" x2="451.6" y2="353.4" stroke="#f7f5f2" stroke-width="0.9"/>
<line x1="293.9" y1="408.4" x2="304.2" y2="409.0" stroke="#f7f5f2" stroke-width="0.9"/>
<line x1="186.1" y1="381.6" x2="187.6" y2="385.6" stroke="#f7f5f2" stroke-width="0.9"/>
<line x1="405.2" y1="317.7" x2="410.3" y2="323.3" stroke="#f7f5f2" stroke-width="0.9"/>
<line x1="404.3" y1="352.1" x2="413.0" y2="353.1" stroke="#f7f5f2" stroke-width="0.9"/>
<line x1="465.2" y1="311.4" x2="461.6" y2="322.5" stroke="#f7f5f2" stroke-width="0.9"/>
<line x1="346.2" y1="369.3" x2="341.4" y2="376.4" stroke="#f7f5f2" stroke-width="0.9"/>
<line x1="516.8" y1="443.1" x2="509.4" y2="443.2" stroke="#f7f5f2" stroke-width="0.9"/>
<line x1="564.2" y1="465.5" x2="565.6" y2="472.1" stroke="#f7f5f2" stroke-width="0.9"/>
<line x1="403.1" y1="476.4" x2="402.4" y2="484.1" stroke="#f7f5f2" stroke-width="0.9"/>
<line x1="323.9" y1="476.2" x2="329.7" y2="477.2" stroke="#f7f5f2" stroke-width="0.9"/>
<line x1="497.5" y1="475.3" x2="494.7" y2="484.5" stroke="#f7f5f2" stroke-width="0.9"/>
<line x1="513.1" y1="346.1" x2="521.3" y2="347.9" stroke="#f7f5f2" stroke-width="0.9"/>
<line x1="141.7" y1="377.0" x2="144.1" y2="384.1" stroke="#f7f5f2" stroke-width="0.9"/>
<line x1="98.8" y1="430.8" x2="104.4" y2="436.1" stroke="#f7f5f2" stroke-width="0.9"/>
<line x1="249.3" y1="365.8" x2="254.3" y2="366.9" stroke="#f7f5f2" stroke-width="0.9"/>
<line x1="607.5" y1="489.7" x2="599.3" y2="493.4" stroke="#f7f5f2" stroke-width="0.9"/>
<line x1="317.5" y1="454.7" x2="314.0" y2="458.3" stroke="#f7f5f2" stroke-width="0.9"/>
<line x1="403.5" y1="476.0" x2="400.5" y2="478.4" stroke="#f7f5f2" stroke-width="0.9"/>
<line x1="141.3" y1="396.7" x2="152.8" y2="396.7" stroke="#f7f5f2" stroke-width="0.9"/>
<line x1="212.4" y1="344.9" x2="218.2" y2="346.1" stroke="#f7f5f2" stroke-width="0.9"/>
<line x1="597.9" y1="457.0" x2="600.8" y2="462.9" stroke="#f7f5f2" stroke-width="0.9"/>
<line x1="414.6" y1="290.0" x2="411.5" y2="291.0" stroke="#f7f5f2" stroke-width="0.9"/>
<line x1="250.2" y1="388.2" x2="238.9" y2="389.0" stroke="#f7f5f2" stroke-width="0.9"/>
<line x1="347.8" y1="324.8" x2="342.3" y2="326.2" stroke="#f7f5f2" stroke-width="0.9"/>
<line x1="598.9" y1="322.4" x2="603.6" y2="331.9" stroke="#f7f5f2" stroke-width="0.9"/>
<line x1="347.7" y1="317.3" x2="336.8" y2="317.5" stroke="#f7f5f2" stroke-width="0.9"/>
<line x1="187.6" y1="417.2" x2="183.2" y2="419.0" stroke="#f7f5f2" stroke-width="0.9"/>
<line x1="97.6" y1="303.0" x2="102.9" y2="311.0" stroke="#f7f5f2" stroke-width="0.9"/>
<line x1="601.0" y1="468.7" x2="609.6" y2="472.6" stroke="#f7f5f2" stroke-width="0.9"/>
<line x1="480.0" y1="483.5" x2="486.8" y2="485.2" stroke="#f7f5f2" stroke-width="0.9"/>
<line x1="200.2" y1="346.7" x2="207.8" y2="352.1" stroke="#f7f5f2" stroke-width="0.9"/>
<line x1="175.2" y1="331.1" x2="168.1" y2="336.6" stroke="#f7f5f2" stroke-width="0.9"/>
<line x1="288.5" y1="423.7" x2="285.5" y2="434.2" stroke="#f7f5f2" stroke-width="0.9"/>
<line x1="203.6" y1="345.3" x2="197.9" y2="355.1" stroke="#f7f5f2" stroke-width="0.9"/>
<line x1="231.9" y1="418.9" x2="228.1" y2="419.1" stroke="#f7f5f2" stroke-width="0.9"/>
<line x1="328.7" y1="394.6" x2="336.4" y2="395.7" stroke="#f7f5f2" stroke-width="0.9"/>
<line x1="423.0" y1="341.7" x2="418.7" y2="344.8" stroke="#f7f5f2" stroke-width="0.9"/>
<line x1="119.6" y1="341.9" x2="126.6" y2="348.7" stroke="#f7f5f2" stroke-width="0.9"/>
<line x1="233.2" y1="398.9" x2="228.8" y2="400.4" stroke="#f7f5f2" stroke-width="0.9"/>
<line x1="652.7" y1="287.3" x2="647.7" y2="292.3" stroke="#f7f5f2" stroke-width="0.9"/>
<line x1="295.7" y1="481.7" x2="302.1" y2="485.7" stroke="#f7f5f2" stroke-width="0.9"/>
<line x1="397.2" y1="420.0" x2="394.2" y2="425.4" stroke="#f7f5f2" stroke-width="0.9"/>
<line x1="531.5" y1="392.1" x2="524.9" y2="395.7" stroke="#f7f5f2" stroke-width="0.9"/>
<line x1="473.1" y1="393.0" x2="483.0" y2="399.0" stroke="#f7f5f2" stroke-width="0.9"/>
<line x1="529.6" y1="315.8" x2="535.8" y2="321.6" stroke="#f7f5f2" stroke-width="0.9"/>
<line x1="328.7" y1="447.7" x2="320.8" y2="453.9" stroke="#f7f5f2" stroke-width="0.9"/>
<line x1="207.7" y1="386.1" x2="206.4" y2="391.0" stroke="#f7f5f2" stroke-width="0.9"/>
<line x1="363.4" y1="287.7" x2="358.2" y2="294.2" stroke="#f7f5f2" stroke-width="0.9"/>
<line x1="407.0" y1="469.4" x2="411.1" y2="471.5" stroke="#f7f5f2" stroke-width="0.9"/>
<line x1="78.5" y1="387.7" x2="79.8" y2="394.5" stroke="#f7f5f2" stroke-width="0.9"/>
<line x1="223.7" y1="453.3" x2="220.2" y2="454.3" stroke="#f7f5f2" stroke-width="0.9"/>
<line x1="404.8" y1="397.9" x2="412.2" y2="404.8" stroke="#f7f5f2" stroke-width="0.9"/>
<line x1="154.6" y1="347.5" x2="156.4" y2="350.3" stroke="#f7f5f2" stroke-width="0.9"/>
<line x1="435.7" y1="394.0" x2="434.3" y2="399.2" stroke="#f7f5f2" stroke-width="0.9"/>
<line x1="120.4" y1="458.1" x2="123.5" y2="461.3" stroke="#f7f5f2" stroke-width="0.9"/>
<line x1="162.6" y1="429.9" x2="154.4" y2="436.4" stroke="#f7f5f2" stroke-width="0.9"/>
<line x1="104.2" y1="369.1" x2="109.1" y2="373.1" stroke="#f7f5f2" stroke-width="0.9"/>
<line x1="642.6" y1="289.1" x2="637.1" y2="294.2" stroke="#f7f5f2" stroke-width="0.9"/>
<line x1="651.8" y1="311.4" x2="646.9" y2="316.5" stroke="#f7f5f2" stroke-width="0.9"/>
<line x1="91.2" y1="332.2" x2="101.2" y2="337.0" stroke="#f7f5f2" stroke-width="0.9"/>
<line x1="300.6" y1="344.7" x2="307.2" y2="346.3" stroke="#f7f5f2" stroke-width="0.9"/>
<line x1="88.3" y1="496.2" x2="81.7" y2="503.5" stroke="#f7f5f2" stroke-width="0.9"/>
<line x1="204.1" y1="334.9" x2="209.9" y2="340.4" stroke="#f7f5f2" stroke-width="0.9"/>
<line x1="341.2" y1="482.3" x2="344.3" y2="487.8" stroke="#f7f5f2" stroke-width="0.9"/>
<line x1="648.9" y1="412.6" x2="649.9" y2="415.8" stroke="#f7f5f2" stroke-width="0.9"/>
<line x1="452.7" y1="292.7" x2="449.2" y2="297.7" stroke="#f7f5f2" stroke-width="0.9"/>
<line x1="579.7" y1="408.2" x2="581.0" y2="419.1" stroke="#f7f5f2" stroke-width="0.9"/>
<line x1="300.6" y1="462.9" x2="295.6" y2="467.0" stroke="#f7f5f2" stroke-width="0.9"/>
<line x1="195.5" y1="355.4" x2="194.8" y2="360.0" stroke="#f7f5f2" stroke-width="0.9"/>
<line x1="165.0" y1="324.2" x2="165.5" y2="329.1" stroke="#f7f5f2" stroke-width="0.9"/>
<line x1="250.7" y1="377.0" x2="244.3" y2="387.1" stroke="#f7f5f2" stroke-width="0.9"/>
<line x1="578.7" y1="324.4" x2="585.0" y2="325.9" stroke="#f7f5f2" stroke-width="0.9"/>
<line x1="477.3" y1="358.7" x2="482.7" y2="359.1" stroke="#f7f5f2" stroke-width="0.9"/>
<line x1="175.8" y1="336.9" x2="169.4" y2="338.5" stroke="#f7f5f2" stroke-width="0.9"/>
<line x1="491.4" y1="338.3" x2="496.9" y2="341.2" stroke="#f7f5f2" stroke-width="0.9"/>
<line x1="622.5" y1="358.1" x2="616.1" y2="365.6" stroke="#f7f5f2" stroke-width="0.9"/>
<line x1="605.0" y1="284.4" x2="607.1" y2="289.9" stroke="#f7f5f2" stroke-width="0.9"/>
<line x1="117.2" y1="471.5" x2="112.8" y2="475.4" stroke="#f7f5f2" stroke-width="0.9"/>
<line x1="375.4" y1="291.9" x2="380.2" y2="296.4" stroke="#f7f5f2" stroke-width="0.9"/>
<line x1="92.2" y1="312.7" x2="100.5" y2="313.6" stroke="#f7f5f2" stroke-width="0.9"/>
<line x1="252.9" y1="372.0" x2="260.1" y2="375.3" stroke="#f7f5f2" stroke-width="0.9"/>
<line x1="486.3" y1="336.5" x2="481.6" y2="344.8" stroke="#f7f5f2" stroke-width="0.9"/>
<line x1="155.1" y1="324.4" x2="151.7" y2="328.8" stroke="#f7f5f2" stroke-width="0.9"/>
<line x1="307.9" y1="363.9" x2="316.1" y2="370.9" stroke="#f7f5f2" stroke-width="0.9"/>
<line x1="240.9" y1="354.9" x2="245.8" y2="355.5" stroke="#f7f5f2" stroke-width="0.9"/>
<line x1="82.5" y1="416.8" x2="75.8" y2="421.4" stroke="#f7f5f2" stroke-width="0.9"/>
<line x1="645.6" y1="344.7" x2="636.8" y2="347.0" stroke="#f7f5f2" stroke-width="0.9"/>
<line x1="196.0" y1="429.6" x2="187.1" y2="430.8" stroke="#f7f5f2" stroke-width="0.9"/>
<line x1="582.1" y1="330.9" x2="590.4" y2="333.3" stroke="#f7f5f2" stroke-width="0.9"/>
<line x1="321.2" y1="365.2" x2="322.5" y2="368.5" stroke="#f7f5f2" stroke-width="0.9"/>
<line x1="262.3" y1="387.9" x2="267.1" y2="390.5" stroke="#f7f5f2" stroke-width="0.9"/>
<line x1="306.3" y1="383.1" x2="304.0" y2="387.0" stroke="#f7f5f2" stroke-width="0.9"/>
<line x1="210.0" y1="300.2" x2="211.4" y2="306.1" stroke="#f7f5f2" stroke-width="0.9"/>
<line x1="157.3" y1="406.4" x2="155.7" y2="415.6" stroke="#f7f5f2" stroke-width="0.9"/>
<line x1="482.5" y1="285.0" x2="485.2" y2="290.9" stroke="#f7f5f2" stroke-width="0.9"/>
<line x1="105.3" y1="367.7" x2="105.3" y2="371.2" stroke="#f7f5f2" stroke-width="0.9"/>
<line x1="414.8" y1="381.8" x2="419.0" y2="386.0" stroke="#f7f5f2" stroke-width="0.9"/>
<line x1="81.9" y1="355.3" x2="79.7" y2="366.1" stroke="#f7f5f2" stroke-width="0.9"/>
<line x1="223.0" y1="425.0" x2="223.5" y2="429.6" stroke="#f7f5f2" stroke-width="0.9"/>
<line x1="432.2" y1="487.2" x2="430.7" y2="493.2" stroke="#f7f5f2" stroke-width="0.9"/>
<line x1="625.9" y1="447.4" x2="622.7" y2="455.4" stroke="#f7f5f2" stroke-width="0.9"/>
<line x1="311.3" y1="370.2" x2="306.6" y2="373.0" stroke="#f7f5f2" stroke-width="0.9"/>
<line x1="588.8" y1="362.9" x2="599.9" y2="364.2" stroke="#f7f5f2" stroke-width="0.9"/>
<line x1="148.4" y1="390.0" x2="150.9" y2="395.3" stroke="#f7f5f2" stroke-width="0.9"/>
<line x1="646.4" y1="312.5" x2="649.9" y2="315.6" stroke="#f7f5f2" stroke-width="0.9"/>
<line x1="470.7" y1="330.9" x2="470.3" y2="333.9" stroke="#f7f5f2" stroke-width="0.9"/>
<line x1="301.2" y1="331.9" x2="297.8" y2="338.6" stroke="#f7f5f2" stroke-width="0.9"/>
<line x1="392.5" y1="415.5" x2="385.6" y2="419.6" stroke="#f7f5f2" stroke-width="0.9"/>
<line x1="641.5" y1="352.4" x2="635.8" y2="354.5" stroke="#f7f5f2" stroke-width="0.9"/>
<line x1="253.5" y1="435.4" x2="248.4" y2="443.1" stroke="#f7f5f2" stroke-width="0.9"/>
<line x1="638.6" y1="458.9" x2="637.0" y2="463.0" stroke="#f7f5f2" stroke-width="0.9"/>
<line x1="358.5" y1="402.3" x2="362.4" y2="407.3" stroke="#f7f5f2" stroke-width="0.9"/>
<line x1="511.4" y1="395.9" x2="515.0" y2="399.5" stroke="#f7f5f2" stroke-width="0.9"/>
<line x1="260.4" y1="318.6" x2="267.4" y2="321.5" stroke="#f7f5f2" stroke-width="0.9"/>
<line x1="105.4" y1="294.9" x2="103.1" y2="298.0" stroke="#f7f5f2" stroke-width="0.9"/>
<line x1="134.8" y1="378.0" x2="135.4" y2="387.9" stroke="#f7f5f2" stroke-width="0.9"/>
<line x1="164.2" y1="468.0" x2="174.9" y2="469.8" stroke="#f7f5f2" stroke-width="0.9"/>
<line x1="218.3" y1="390.1" x2="221.7" y2="399.7" stroke="#f7f5f2" stroke-width="0.9"/>
<line x1="491.8" y1="334.6" x2="496.7" y2="342.7" stroke="#f7f5f2" stroke-width="0.9"/>
<line x1="265.6" y1="444.8" x2="256.5" y2="450.2" stroke="#f7f5f2" stroke-width="0.9"/>
<line x1="403.9" y1="371.3" x2="400.4" y2="379.9" stroke="#f7f5f2" stroke-width="0.9"/>
<line x1="560.0" y1="453.9" x2="561.5" y2="457.7" stroke="#f7f5f2" stroke-width="0.9"/>
<line x1="464.3" y1="330.1" x2="468.9" y2="330.3" stroke="#f7f5f2" stroke-width="0.9"/>
<line x1="414.6" y1="484.2" x2="425.3" y2="489.0" stroke="#f7f5f2" stroke-width="0.9"/>
<line x1="475.1" y1="371.0" x2="477.8" y2="379.2" stroke="#f7f5f2" stroke-width="0.9"/>
<line x1="620.6" y1="494.6" x2="618.4" y2="497.3" stroke="#f7f5f2" stroke-width="0.9"/>
<line x1="138.1" y1="289.2" x2="134.4" y2="293.4" stroke="#f7f5f2" stroke-width="0.9"/>
<line x1="656.2" y1="306.1" x2="662.2" y2="306.6" stroke="#f7f5f2" stroke-width="0.9"/>
<line x1="389.2" y1="384.8" x2="392.8" y2="390.1" stroke="#f7f5f2" stroke-width="0.9"/>
<line x1="541.9" y1="462.0" x2="543.7" y2="467.2" stroke="#f7f5f2" stroke-width="0.9"/>
<line x1="433.7" y1="446.1" x2="437.7" y2="457.2" stroke="#f7f5f2" stroke-width="0.9"/>
<line x1="478.9" y1="398.5" x2="488.0" y2="403.0" stroke="#f7f5f2" stroke-width="0.9"/>
<line x1="171.6" y1="303.2" x2="179.7" y2="311.3" stroke="#f7f5f2" stroke-width="0.9"/>
<line x1="357.1" y1="306.1" x2="363.0" y2="306.5" stroke="#f7f5f2" stroke-width="0.9"/>
<line x1="403.0" y1="311.2" x2="408.6" y2="317.7" stroke="#f7f5f2" stroke-width="0.9"/>
<line x1="202.7" y1="384.6" x2="207.0" y2="389.2" stroke="#f7f5f2" stroke-width="0.9"/>
<line x1="98.3" y1="294.0" x2="104.5" y2="303.1" stroke="#f7f5f2" stroke-width="0.9"/>
<line x1="114.4" y1="319.6" x2="107.1" y2="319.7" stroke="#f7f5f2" stroke-width="0.9"/>
<line x1="187.7" y1="468.2" x2="189.7" y2="475.3" stroke="#f7f5f2" stroke-width="0.9"/>
<line x1="545.7" y1="365.9" x2="545.2" y2="369.4" stroke="#f7f5f2" stroke-width="0.9"/>
<line x1="456.9" y1="415.2" x2="451.5" y2="416.2" stroke="#f7f5f2" stroke-width="0.9"/>
<line x1="579.8" y1="495.8" x2="573.8" y2="499.2" stroke="#f7f5f2" stroke-width="0.9"/>
<line x1="497.2" y1="318.2" x2="500.0" y2="319.8" stroke="#f7f5f2" stroke-width="0.9"/>
<line x1="138.3" y1="296.2" x2="133.9" y2="300.6" stroke="#f7f5f2" stroke-width="0.9"/>
<line x1="251.5" y1="391.6" x2="254.0" y2="393.5" stroke="#f7f5f2" stroke-width="0.9"/>
<line x1="635.9" y1="282.4" x2="629.5" y2="286.7" stroke="#f7f5f2" stroke-width="0.9"/>
<line x1="537.0" y1="439.6" x2="531.7" y2="443.4" stroke="#f7f5f2" stroke-width="0.9"/>
<line x1="558.0" y1="446.6" x2="569.3" y2="450.3" stroke="#f7f5f2" stroke-width="0.9"/>
<line x1="630.6" y1="367.3" x2="637.2" y2="373.9" stroke="#f7f5f2" stroke-width="0.9"/>
<line x1="606.5" y1="285.1" x2="612.7" y2="290.5" stroke="#f7f5f2" stroke-width="0.9"/>
<line x1="297.9" y1="360.1" x2="290.5" y2="365.1" stroke="#f7f5f2" stroke-width="0.9"/>
<line x1="283.9" y1="418.5" x2="287.8" y2="423.2" stroke="#f7f5f2" stroke-width="0.9"/>
<line x1="603.8" y1="349.8" x2="605.8" y2="353.1" stroke="#f7f5f2" stroke-width="0.9"/>
<line x1="507.0" y1="325.9" x2="505.6" y2="335.4" stroke="#f7f5f2" stroke-width="0.9"/>
<line x1="470.7" y1="318.5" x2="474.3" y2="320.2" stroke="#f7f5f2" stroke-width="0.9"/>
<line x1="275.4" y1="373.5" x2="275.4" y2="376.6" stroke="#f7f5f2" stroke-width="0.9"/>
<line x1="306.8" y1="349.8" x2="299.0" y2="350.9" stroke="#f7f5f2" stroke-width="0.9"/>
<line x1="189.2" y1="471.1" x2="185.0" y2="475.2" stroke="#f7f5f2" stroke-width="0.9"/>
<line x1="132.1" y1="494.3" x2="125.3" y2="495.1" stroke="#f7f5f2" stroke-width="0.9"/>
<line x1="198.0" y1="368.6" x2="206.0" y2="373.5" stroke="#f7f5f2" stroke-width="0.9"/>
<line x1="229.8" y1="427.0" x2="235.9" y2="436.7" stroke="#f7f5f2" stroke-width="0.9"/>
<line x1="176.6" y1="357.5" x2="187.2" y2="362.9" stroke="#f7f5f2" stroke-width="0.9"/>
<line x1="443.8" y1="362.1" x2="450.7" y2="367.5" stroke="#f7f5f2" stroke-width="0.9"/>
<line x1="432.8" y1="472.6" x2="428.6" y2="482.5" stroke="#f7f5f2" stroke-width="0.9"/>
<line x1="366.9" y1="403.2" x2="363.4" y2="405.2" stroke="#f7f5f2" stroke-width="0.9"/>
<line x1="476.4" y1="378.3" x2="478.6" y2="387.1" stroke="#f7f5f2" stroke-width="0.9"/>
<line x1="295.7" y1="329.9" x2="293.8" y2="338.1" stroke="#f7f5f2" stroke-width="0.9"/>
<line x1="373.0" y1="287.0" x2="374.5" y2="295.5" stroke="#f7f5f2" stroke-width="0.9"/>
<line x1="419.3" y1="409.0" x2="429.4" y2="414.3" stroke="#f7f5f2" stroke-width="0.9"/>
<line x1="345.5" y1="495.5" x2="350.8" y2="503.5" stroke="#f7f5f2" stroke-width="0.9"/>
<line x1="504.2" y1="494.7" x2="498.1" y2="497.4" stroke="#f7f5f2" stroke-width="0.9"/>
<line x1="143.0" y1="494.8" x2="148.5" y2="499.8" stroke="#f7f5f2" stroke-width="0.9"/>
<line x1="565.4" y1="420.9" x2="555.6" y2="426.7" stroke="#f7f5f2" stroke-width="0.9"/>
<line x1="540.2" y1="391.0" x2="551.9" y2="393.4" stroke="#f7f5f2" stroke-width="0.9"/>
<line x1="583.1" y1="434.4" x2="578.8" y2="437.4" stroke="#f7f5f2" stroke-width="0.9"/>
<line x1="336.8" y1="396.4" x2="345.6" y2="402.6" stroke="#f7f5f2" stroke-width="0.9"/>
<line x1="233.5" y1="419.7" x2="232.9" y2="423.3" stroke="#f7f5f2" stroke-width="0.9"/>
<line x1="534.0" y1="386.5" x2="529.8" y2="389.5" stroke="#f7f5f2" stroke-width="0.9"/>
<line x1="574.2" y1="447.3" x2="566.6" y2="449.6" stroke="#f7f5f2" stroke-width="0.9"/>
<line x1="539.7" y1="312.9" x2="545.7" y2="314.9" stroke="#f7f5f2" stroke-width="0.9"/>
<line x1="89.8" y1="355.0" x2="80.4" y2="360.4" stroke="#f7f5f2" stroke-width="0.9"/>
<line x1="137.5" y1="319.4" x2="131.7" y2="322.4" stroke="#f7f5f2" stroke-width="0.9"/>
<line x1="433.3" y1="475.7" x2="429.7" y2="475.8" stroke="#f7f5f2" stroke-width="0.9"/>
<line x1="190.4" y1="416.5" x2="183.2" y2="424.8" stroke="#f7f5f2" stroke-width="0.9"/>
<line x1="184.7" y1="425.0" x2="191.5" y2="425.4" stroke="#f7f5f2" stroke-width="0.9"/>
<line x1="269.0" y1="348.4" x2="274.6" y2="355.1" stroke="#f7f5f2" stroke-width="0.9"/>
<line x1="425.0" y1="430.8" x2="429.3" y2="432.6" stroke="#f7f5f2" stroke-width="0.9"/>
<line x1="478.7" y1="381.2" x2="482.6" y2="382.7" stroke="#f7f5f2" stroke-width="0.9"/>
<line x1="625.1" y1="412.4" x2="630.2" y2="416.0" stroke="#f7f5f2" stroke-width="0.9"/>
<line x1="656.9" y1="430.1" x2="661.0" y2="438.8" stroke="#f7f5f2" stroke-width="0.9"/>
<line x1="251.7" y1="368.6" x2="249.9" y2="372.5" stroke="#f7f5f2" stroke-width="0.9"/>
<line x1="319.4" y1="458.0" x2="320.3" y2="464.6" stroke="#f7f5f2" stroke-width="0.9"/>
<line x1="367.8" y1="484.3" x2="364.2" y2="489.2" stroke="#f7f5f2" stroke-width="0.9"/>
<line x1="207.2" y1="405.7" x2="202.0" y2="407.9" stroke="#f7f5f2" stroke-width="0.9"/>
<line x1="237.6" y1="465.4" x2="238.9" y2="474.4" stroke="#f7f5f2" stroke-width="0.9"/>
<line x1="620.7" y1="364.1" x2="617.7" y2="373.3" stroke="#f7f5f2" stroke-width="0.9"/>
<line x1="333.5" y1="293.9" x2="337.8" y2="299.2" stroke="#f7f5f2" stroke-width="0.9"/>
<line x1="329.0" y1="487.1" x2="325.8" y2="491.7" stroke="#f7f5f2" stroke-width="0.9"/>
<line x1="465.9" y1="333.1" x2="472.0" y2="335.8" stroke="#f7f5f2" stroke-width="0.9"/>
<line x1="598.1" y1="334.6" x2="601.3" y2="340.6" stroke="#f7f5f2" stroke-width="0.9"/>
<line x1="553.7" y1="464.5" x2="552.6" y2="472.7" stroke="#f7f5f2" stroke-width="0.9"/>
<line x1="126.9" y1="474.5" x2="128.4" y2="478.0" stroke="#f7f5f2" stroke-width="0.9"/>
<line x1="289.7" y1="436.9" x2="293.9" y2="444.9" stroke="#f7f5f2" stroke-width="0.9"/>
<line x1="599.6" y1="486.1" x2="598.3" y2="489.0" stroke="#f7f5f2" stroke-width="0.9"/>
<line x1="345.8" y1="358.5" x2="349.7" y2="364.5" stroke="#f7f5f2" stroke-width="0.9"/>
<line x1="465.2" y1="411.4" x2="453.5" y2="412.3" stroke="#f7f5f2" stroke-width="0.9"/>
<line x1="655.6" y1="365.7" x2="650.9" y2="375.1" stroke="#f7f5f2" stroke-width="0.9"/>
<line x1="483.0" y1="496.5" x2="483.4" y2="500.1" stroke="#f7f5f2" stroke-width="0.9"/>
<line x1="305.6" y1="422.4" x2="300.6" y2="422.5" stroke="#f7f5f2" stroke-width="0.9"/>
<line x1="192.0" y1="360.3" x2="193.4" y2="364.3" stroke="#f7f5f2" stroke-width="0.9"/>
<line x1="507.1" y1="298.1" x2="505.1" y2="302.1" stroke="#f7f5f2" stroke-width="0.9"/>
<line x1="436.8" y1="441.0" x2="432.4" y2="444.0" stroke="#f7f5f2" stroke-width="0.9"/>
<line x1="500.7" y1="448.4" x2="501.1" y2="452.5" stroke="#f7f5f2" stroke-width="0.9"/>
<line x1="77.4" y1="466.6" x2="66.5" y2="470.2" stroke="#f7f5f2" stroke-width="0.9"/>
<line x1="82.3" y1="356.2" x2="81.5" y2="364.0" stroke="#f7f5f2" stroke-width="0.9"/>
<line x1="133.8" y1="451.3" x2="133.7" y2="457.0" stroke="#f7f5f2" stroke-width="0.9"/>
<line x1="141.8" y1="403.2" x2="145.8" y2="404.4" stroke="#f7f5f2" stroke-width="0.9"/>
<line x1="371.2" y1="343.8" x2="378.4" y2="350.8" stroke="#f7f5f2" stroke-width="0.9"/>
<line x1="313.0" y1="291.8" x2="313.8" y2="296.7" stroke="#f7f5f2" stroke-width="0.9"/>
<line x1="398.4" y1="379.7" x2="408.5" y2="383.1" stroke="#f7f5f2" stroke-width="0.9"/>
<line x1="571.3" y1="313.6" x2="570.3" y2="325.3" stroke="#f7f5f2" stroke-width="0.9"/>
<line x1="308.6" y1="412.8" x2="297.9" y2="414.1" stroke="#f7f5f2" stroke-width="0.9"/>
<line x1="312.7" y1="282.3" x2="309.0" y2="284.7" stroke="#f7f5f2" stroke-width="0.9"/>
<line x1="502.8" y1="434.6" x2="502.4" y2="439.0" stroke="#f7f5f2" stroke-width="0.9"/>
<line x1="84.9" y1="303.9" x2="79.2" y2="304.5" stroke="#f7f5f2" stroke-width="0.9"/>
<line x1="448.7" y1="463.9" x2="449.6" y2="467.2" stroke="#f7f5f2" stroke-width="0.9"/>
<line x1="114.4" y1="336.6" x2="110.5" y2="337.6" stroke="#f7f5f2" stroke-width="0.9"/>
<line x1="262.6" y1="386.1" x2="254.3" y2="389.2" stroke="#f7f5f2" stroke-width="0.9"/>
<line x1="628.3" y1="403.2" x2="621.1" y2="405.5" stroke="#f7f5f2" stroke-width="0.9"/>
<line x1="301.5" y1="345.0" x2="308.2" y2="352.0" stroke="#f7f5f2" stroke-width="0.9"/>
<line x1="285.8" y1="373.1" x2="288.9" y2="379.7" stroke="#f7f5f2" stroke-width="0.9"/>
<line x1="322.9" y1="377.8" x2="319.9" y2="379.5" stroke="#f7f5f2" stroke-width="0.9"/>
<line x1="104.5" y1="394.5" x2="107.0" y2="402.1" stroke="#f7f5f2" stroke-width="0.9"/>
<line x1="199.8" y1="301.5" x2="203.3" y2="306.8" stroke="#f7f5f2" stroke-width="0.9"/>
<line x1="354.5" y1="330.0" x2="354.9" y2="339.7" stroke="#f7f5f2" stroke-width="0.9"/>
<line x1="73.3" y1="368.2" x2="85.0" y2="368.5" stroke="#f7f5f2" stroke-width="0.9"/>
<line x1="419.3" y1="488.5" x2="417.4" y2="494.5" stroke="#f7f5f2" stroke-width="0.9"/>
<line x1="286.4" y1="345.4" x2="284.0" y2="353.5" stroke="#f7f5f2" stroke-width="0.9"/>
<line x1="254.6" y1="388.0" x2="249.1" y2="393.3" stroke="#f7f5f2" stroke-width="0.9"/>
<line x1="99.4" y1="300.1" x2="102.9" y2="304.1" stroke="#f7f5f2" stroke-width="0.9"/>
<line x1="539.0" y1="372.3" x2="542.3" y2="382.6" stroke="#f7f5f2" stroke-width="0.9"/>
<line x1="237.2" y1="427.5" x2="233.4" y2="427.7" stroke="#f7f5f2" stroke-width="0.9"/>
<line x1="560.3" y1="351.2" x2="555.3" y2="354.4" stroke="#f7f5f2" stroke-width="0.9"/>
<line x1="534.7" y1="419.4" x2="532.1" y2="421.7" stroke="#f7f5f2" stroke-width="0.9"/>
<line x1="96.4" y1="415.6" x2="88.6" y2="417.4" stroke="#f7f5f2" stroke-width="0.9"/>
<line x1="446.1" y1="284.8" x2="438.0" y2="292.8" stroke="#f7f5f2" stroke-width="0.9"/>
<line x1="411.3" y1="281.2" x2="413.7" y2="290.5" stroke="#f7f5f2" stroke-width="0.9"/>
<line x1="470.3" y1="493.5" x2="481.3" y2="496.1" stroke="#f7f5f2" stroke-width="0.9"/>
<line x1="530.6" y1="375.6" x2="534.2" y2="384.6" stroke="#f7f5f2" stroke-width="0.9"/>
<line x1="333.0" y1="374.8" x2="335.2" y2="378.2" stroke="#f7f5f2" stroke-width="0.9"/>
<line x1="502.9" y1="295.5" x2="499.4" y2="297.5" stroke="#f7f5f2" stroke-width="0.9"/>
<line x1="462.4" y1="398.9" x2="466.2" y2="400.4" stroke="#f7f5f2" stroke-width="0.9"/>
<line x1="251.6" y1="487.0" x2="243.8" y2="488.9" stroke="#f7f5f2" stroke-width="0.9"/>
<line x1="193.0" y1="370.0" x2="186.2" y2="373.8" stroke="#f7f5f2" stroke-width="0.9"/>
<line x1="141.0" y1="469.6" x2="148.2" y2="470.3" stroke="#f7f5f2" stroke-width="0.9"/>
<line x1="323.7" y1="361.9" x2="314.9" y2="364.0" stroke="#f7f5f2" stroke-width="0.9"/>
<line x1="360.2" y1="429.6" x2="355.2" y2="433.8" stroke="#f7f5f2" stroke-width="0.9"/>
<line x1="130.3" y1="441.1" x2="129.1" y2="445.4" stroke="#f7f5f2" stroke-width="0.9"/>
<line x1="187.7" y1="355.1" x2="189.7" y2="359.1" stroke="#f7f5f2" stroke-width="0.9"/>
<line x1="418.1" y1="392.8" x2="416.6" y2="399.2" stroke="#f7f5f2" stroke-width="0.9"/>
<line x1="566.6" y1="357.7" x2="567.1" y2="366.0" stroke="#f7f5f2" stroke-width="0.9"/>
<line x1="648.5" y1="351.2" x2="655.4" y2="357.4" stroke="#f7f5f2" stroke-width="0.9"/>
<line x1="222.7" y1="438.5" x2="228.3" y2="444.4" stroke="#f7f5f2" stroke-width="0.9"/>
<line x1="106.0" y1="459.0" x2="102.0" y2="464.0" stroke="#f7f5f2" stroke-width="0.9"/>
<line x1="324.2" y1="414.0" x2="316.2" y2="414.6" stroke="#f7f5f2" stroke-width="0.9"/>
<line x1="606.5" y1="378.9" x2="612.0" y2="383.8" stroke="#f7f5f2" stroke-width="0.9"/>
<line x1="513.9" y1="302.2" x2="508.7" y2="304.9" stroke="#f7f5f2" stroke-width="0.9"/>
<line x1="88.8" y1="431.6" x2="87.5" y2="439.6" stroke="#f7f5f2" stroke-width="0.9"/>
<line x1="265.2" y1="312.9" x2="256.6" y2="320.7" stroke="#f7f5f2" stroke-width="0.9"/>
<line x1="545.0" y1="301.2" x2="552.8" y2="307.6" stroke="#f7f5f2" stroke-width="0.9"/>
<line x1="186.0" y1="396.1" x2="193.8" y2="399.2" stroke="#f7f5f2" stroke-width="0.9"/>
<line x1="520.8" y1="406.4" x2="510.0" y2="409.0" stroke="#f7f5f2" stroke-width="0.9"/>
<line x1="476.1" y1="359.0" x2="468.7" y2="367.9" stroke="#f7f5f2" stroke-width="0.9"/>
<line x1="240.2" y1="466.1" x2="246.6" y2="473.2" stroke="#f7f5f2" stroke-width="0.9"/>
<line x1="215.5" y1="284.4" x2="221.0" y2="290.0" stroke="#f7f5f2" stroke-width="0.9"/>
<line x1="241.5" y1="334.9" x2="241.7" y2="339.1" stroke="#f7f5f2" stroke-width="0.9"/>
<line x1="229.4" y1="341.9" x2="229.2" y2="347.4" stroke="#f7f5f2" stroke-width="0.9"/>
<line x1="585.3" y1="314.7" x2="575.7" y2="319.5" stroke="#f7f5f2" stroke-width="0.9"/>
<line x1="428.8" y1="398.0" x2="427.7" y2="407.6" stroke="#f7f5f2" stroke-width="0.9"/>
<line x1="458.7" y1="479.5" x2="465.5" y2="486.8" stroke="#f7f5f2" stroke-width="0.9"/>
<line x1="100.2" y1="483.3" x2="95.2" y2="487.1" stroke="#f7f5f2" stroke-width="0.9"/>
<line x1="206.2" y1="378.3" x2="202.0" y2="383.0" stroke="#f7f5f2" stroke-width="0.9"/>
<line x1="626.6" y1="389.7" x2="630.3" y2="396.9" stroke="#f7f5f2" stroke-width="0.9"/>
<line x1="205.5" y1="486.1" x2="201.5" y2="486.9" stroke="#f7f5f2" stroke-width="0.9"/>
<line x1="457.0" y1="295.6" x2="467.6" y2="299.1" stroke="#f7f5f2" stroke-width="0.9"/>
<line x1="402.7" y1="306.0" x2="409.4" y2="315.8" stroke="#f7f5f2" stroke-width="0.9"/>
<line x1="584.3" y1="293.3" x2="593.1" y2="295.2" stroke="#f7f5f2" stroke-width="0.9"/>
<line x1="85.6" y1="403.9" x2="79.1" y2="413.8" stroke="#f7f5f2" stroke-width="0.9"/>
<line x1="574.3" y1="450.3" x2="581.8" y2="452.2" stroke="#f7f5f2" stroke-width="0.9"/>
<line x1="380.0" y1="320.1" x2="383.4" y2="327.0" stroke="#f7f5f2" stroke-width="0.9"/>
<line x1="363.4" y1="322.9" x2="365.8" y2="331.9" stroke="#f7f5f2" stroke-width="0.9"/>
<line x1="355.7" y1="297.1" x2="354.3" y2="304.3" stroke="#f7f5f2" stroke-width="0.9"/>
<line x1="643.7" y1="401.8" x2="646.2" y2="405.2" stroke="#f7f5f2" stroke-width="0.9"/>
<line x1="266.7" y1="432.4" x2="255.3" y2="433.2" stroke="#f7f5f2" stroke-width="0.9"/>
<line x1="630.4" y1="480.8" x2="619.9" y2="483.0" stroke="#f7f5f2" stroke-width="0.9"/>
<line x1="79.9" y1="386.3" x2="75.4" y2="393.2" stroke="#f7f5f2" stroke-width="0.9"/>
<line x1="430.7" y1="413.1" x2="441.7" y2="416.1" stroke="#f7f5f2" stroke-width="0.9"/>
<line x1="375.4" y1="488.2" x2="378.5" y2="489.3" stroke="#f7f5f2" stroke-width="0.9"/>
<line x1="582.5" y1="487.7" x2="585.7" y2="488.0" stroke="#f7f5f2" stroke-width="0.9"/>
<line x1="559.2" y1="429.4" x2="557.3" y2="436.8" stroke="#f7f5f2" stroke-width="0.9"/>
<line x1="516.4" y1="455.3" x2="519.3" y2="455.9" stroke="#f7f5f2" stroke-width="0.9"/>
<line x1="538.1" y1="491.7" x2="541.2" y2="501.7" stroke="#f7f5f2" stroke-width="0.9"/>
<line x1="266.6" y1="355.2" x2="264.3" y2="357.3" stroke="#f7f5f2" stroke-width="0.9"/>
<line x1="223.3" y1="407.1" x2="227.1" y2="413.8" stroke="#f7f5f2" stroke-width="0.9"/>
<line x1="467.5" y1="378.7" x2="462.8" y2="380.6" stroke="#f7f5f2" stroke-width="0.9"/>
<line x1="172.0" y1="312.5" x2="172.4" y2="317.8" stroke="#f7f5f2" stroke-width="0.9"/>
<line x1="531.9" y1="352.2" x2="529.5" y2="356.8" stroke="#f7f5f2" stroke-width="0.9"/>
<line x1="222.1" y1="393.4" x2="217.2" y2="395.4" stroke="#f7f5f2" stroke-width="0.9"/>
<line x1="177.2" y1="330.4" x2="180.2" y2="335.3" stroke="#f7f5f2" stroke-width="0.9"/>
<line x1="498.1" y1="426.3" x2="496.8" y2="436.3" stroke="#f7f5f2" stroke-width="0.9"/>
<line x1="114.5" y1="445.7" x2="118.5" y2="449.0" stroke="#f7f5f2" stroke-width="0.9"/>
<line x1="313.3" y1="494.8" x2="316.1" y2="500.5" stroke="#f7f5f2" stroke-width="0.9"/>
<line x1="607.3" y1="494.9" x2="613.2" y2="497.6" stroke="#f7f5f2" stroke-width="0.9"/>
<line x1="535.5" y1="449.8" x2="530.7" y2="453.5" stroke="#f7f5f2" stroke-width="0.9"/>
<line x1="292.6" y1="342.3" x2="286.9" y2="348.3" stroke="#f7f5f2" stroke-width="0.9"/>
<line x1="349.7" y1="457.6" x2="349.7" y2="460.7" stroke="#f7f5f2" stroke-width="0.9"/>
<line x1="293.2" y1="294.1" x2="303.3" y2="299.0" stroke="#f7f5f2" stroke-width="0.9"/>
<line x1="189.7" y1="470.6" x2="178.3" y2="473.0" stroke="#f7f5f2" stroke-width="0.9"/>
<line x1="270.4" y1="482.0" x2="267.7" y2="485.3" stroke="#f7f5f2" stroke-width="0.9"/>
<line x1="627.8" y1="321.8" x2="625.6" y2="325.4" stroke="#f7f5f2" stroke-width="0.9"/>
<line x1="590.5" y1="437.6" x2="592.1" y2="449.1" stroke="#f7f5f2" stroke-width="0.9"/>
<line x1="288.4" y1="306.1" x2="283.1" y2="307.1" stroke="#f7f5f2" stroke-width="0.9"/>
<line x1="110.4" y1="320.1" x2="116.5" y2="321.1" stroke="#f7f5f2" stroke-width="0.9"/>
<line x1="249.7" y1="319.7" x2="249.4" y2="323.8" stroke="#f7f5f2" stroke-width="0.9"/>
<line x1="387.9" y1="403.2" x2="387.0" y2="413.0" stroke="#f7f5f2" stroke-width="0.9"/>
<line x1="628.7" y1="297.7" x2="633.6" y2="298.9" stroke="#f7f5f2" stroke-width="0.9"/>
<line x1="251.2" y1="445.1" x2="251.0" y2="456.4" stroke="#f7f5f2" stroke-width="0.9"/>
<line x1="162.9" y1="351.7" x2="167.8" y2="358.2" stroke="#f7f5f2" stroke-width="0.9"/>
<line x1="537.3" y1="491.0" x2="535.1" y2="497.8" stroke="#f7f5f2" stroke-width="0.9"/>
<line x1="568.8" y1="380.9" x2="564.2" y2="381.7" stroke="#f7f5f2" stroke-width="0.9"/>
<line x1="646.9" y1="285.3" x2="650.0" y2="294.7" stroke="#f7f5f2" stroke-width="0.9"/>
<line x1="98.7" y1="315.3" x2="95.6" y2="318.7" stroke="#f7f5f2" stroke-width="0.9"/>
<line x1="193.3" y1="284.3" x2="189.2" y2="287.2" stroke="#f7f5f2" stroke-width="0.9"/>
<line x1="363.5" y1="421.7" x2="369.5" y2="425.6" stroke="#f7f5f2" stroke-width="0.9"/>
<line x1="77.0" y1="346.0" x2="79.3" y2="348.5" stroke="#f7f5f2" stroke-width="0.9"/>
<line x1="434.3" y1="360.2" x2="431.6" y2="366.9" stroke="#f7f5f2" stroke-width="0.9"/>
<line x1="255.7" y1="357.4" x2="253.0" y2="368.0" stroke="#f7f5f2" stroke-width="0.9"/>
<line x1="314.8" y1="397.2" x2="318.4" y2="403.4" stroke="#f7f5f2" stroke-width="0.9"/>
<line x1="608.9" y1="330.6" x2="598.7" y2="335.7" stroke="#f7f5f2" stroke-width="0.9"/>
<line x1="590.1" y1="315.3" x2="582.6" y2="315.7" stroke="#f7f5f2" stroke-width="0.9"/>
<line x1="238.9" y1="317.1" x2="245.9" y2="323.5" stroke="#f7f5f2" stroke-width="0.9"/>
<line x1="413.5" y1="314.2" x2="420.7" y2="323.2" stroke="#f7f5f2" stroke-width="0.9"/>
<line x1="125.4" y1="429.1" x2="124.3" y2="435.2" stroke="#f7f5f2" stroke-width="0.9"/>
<line x1="362.4" y1="480.2" x2="365.2" y2="487.3" stroke="#f7f5f2" stroke-width="0.9"/>
<line x1="69.0" y1="387.7" x2="67.7" y2="393.0" stroke="#f7f5f2" stroke-width="0.9"/>
<line x1="442.1" y1="380.3" x2="442.1" y2="384.1" stroke="#f7f5f2" stroke-width="0.9"/>
<line x1="353.2" y1="419.2" x2="360.7" y2="428.2" stroke="#f7f5f2" stroke-width="0.9"/>
<line x1="330.1" y1="298.4" x2="337.7" y2="305.2" stroke="#f7f5f2" stroke-width="0.9"/>
<line x1="558.8" y1="453.2" x2="553.8" y2="454.7" stroke="#f7f5f2" stroke-width="0.9"/>
<line x1="366.3" y1="372.5" x2="358.5" y2="373.8" stroke="#f7f5f2" stroke-width="0.9"/>
<line x1="358.0" y1="384.6" x2="353.1" y2="387.3" stroke="#f7f5f2" stroke-width="0.9"/>
<line x1="365.8" y1="354.3" x2="369.5" y2="357.3" stroke="#f7f5f2" stroke-width="0.9"/>
<line x1="561.8" y1="454.4" x2="550.4" y2="457.4" stroke="#f7f5f2" stroke-width="0.9"/>
<line x1="473.6" y1="453.0" x2="465.8" y2="458.3" stroke="#f7f5f2" stroke-width="0.9"/>
<line x1="542.4" y1="318.2" x2="548.3" y2="326.7" stroke="#f7f5f2" stroke-width="0.9"/>
<line x1="212.5" y1="479.5" x2="212.4" y2="482.7" stroke="#f7f5f2" stroke-width="0.9"/>
<line x1="271.1" y1="451.8" x2="263.0" y2="454.2" stroke="#f7f5f2" stroke-width="0.9"/>
<line x1="620.0" y1="419.8" x2="618.2" y2="422.9" stroke="#f7f5f2" stroke-width="0.9"/>
<line x1="132.8" y1="493.1" x2="138.8" y2="502.1" stroke="#f7f5f2" stroke-width="0.9"/>
<line x1="178.1" y1="430.7" x2="168.3" y2="431.1" stroke="#f7f5f2" stroke-width="0.9"/>
<line x1="436.7" y1="307.2" x2="446.1" y2="308.9" stroke="#f7f5f2" stroke-width="0.9"/>
<line x1="581.7" y1="446.8" x2="572.4" y2="450.7" stroke="#f7f5f2" stroke-width="0.9"/>
<line x1="404.9" y1="484.7" x2="405.2" y2="493.5" stroke="#f7f5f2" stroke-width="0.9"/>
<line x1="295.6" y1="356.7" x2="298.4" y2="358.2" stroke="#f7f5f2" stroke-width="0.9"/>
<line x1="539.0" y1="329.6" x2="532.3" y2="335.4" stroke="#f7f5f2" stroke-width="0.9"/>
<line x1="479.1" y1="391.9" x2="482.9" y2="396.4" stroke="#f7f5f2" stroke-width="0.9"/>
<line x1="178.9" y1="420.6" x2="169.9" y2="422.2" stroke="#f7f5f2" stroke-width="0.9"/>
<line x1="263.7" y1="481.2" x2="270.6" y2="490.0" stroke="#f7f5f2" stroke-width="0.9"/>
<line x1="631.6" y1="414.4" x2="622.8" y2="422.0" stroke="#f7f5f2" stroke-width="0.9"/>
<line x1="265.3" y1="340.6" x2="265.6" y2="348.3" stroke="#f7f5f2" stroke-width="0.9"/>
<line x1="89.0" y1="467.2" x2="89.6" y2="475.0" stroke="#f7f5f2" stroke-width="0.9"/>
<line x1="508.8" y1="334.2" x2="507.6" y2="338.8" stroke="#f7f5f2" stroke-width="0.9"/>
<line x1="210.9" y1="351.1" x2="214.4" y2="351.7" stroke="#f7f5f2" stroke-width="0.9"/>
<line x1="278.3" y1="394.3" x2="273.4" y2="404.8" stroke="#f7f5f2" stroke-width="0.9"/>
<line x1="313.3" y1="368.3" x2="313.7" y2="373.4" stroke="#f7f5f2" stroke-width="0.9"/>
<line x1="635.8" y1="306.5" x2="632.0" y2="312.2" stroke="#f7f5f2" stroke-width="0.9"/>
<line x1="519.4" y1="400.5" x2="510.7" y2="402.1" stroke="#f7f5f2" stroke-width="0.9"/>
<line x1="602.3" y1="334.5" x2="594.4" y2="334.6" stroke="#f7f5f2" stroke-width="0.9"/>
<line x1="380.4" y1="321.1" x2="390.1" y2="322.9" stroke="#f7f5f2" stroke-width="0.9"/>
<line x1="157.0" y1="399.6" x2="153.5" y2="403.8" stroke="#f7f5f2" stroke-width="0.9"/>
<line x1="498.3" y1="349.3" x2="493.8" y2="358.1" stroke="#f7f5f2" stroke-width="0.9"/>
<line x1="485.9" y1="379.1" x2="492.4" y2="381.4" stroke="#f7f5f2" stroke-width="0.9"/>
<line x1="349.1" y1="487.2" x2="359.9" y2="489.1" stroke="#f7f5f2" stroke-width="0.9"/>
<line x1="110.1" y1="338.5" x2="111.9" y2="347.5" stroke="#f7f5f2" stroke-width="0.9"/>
<line x1="143.7" y1="372.4" x2="138.0" y2="378.2" stroke="#f7f5f2" stroke-width="0.9"/>
<line x1="306.6" y1="421.0" x2="303.3" y2="429.5" stroke="#f7f5f2" stroke-width="0.9"/>
<line x1="95.5" y1="434.2" x2="99.6" y2="434.9" stroke="#f7f5f2" stroke-width="0.9"/>
<line x1="348.4" y1="283.7" x2="349.6" y2="287.1" stroke="#f7f5f2" stroke-width="0.9"/>
<line x1="345.4" y1="302.9" x2="335.0" y2="308.1" stroke="#f7f5f2" stroke-width="0.9"/>
<line x1="356.1" y1="407.5" x2="350.3" y2="407.8" stroke="#f7f5f2" stroke-width="0.9"/>
<line x1="139.0" y1="346.0" x2="134.4" y2="348.0" stroke="#f7f5f2" stroke-width="0.9"/>
<line x1="369.2" y1="369.1" x2="363.0" y2="371.4" stroke="#f7f5f2" stroke-width="0.9"/>
<line x1="220.4" y1="451.7" x2="221.9" y2="461.0" stroke="#f7f5f2" stroke-width="0.9"/>
<line x1="284.5" y1="374.8" x2="288.4" y2="380.7" stroke="#f7f5f2" stroke-width="0.9"/>
<line x1="437.3" y1="369.2" x2="433.0" y2="373.0" stroke="#f7f5f2" stroke-width="0.9"/>
<line x1="337.4" y1="382.8" x2="339.0" y2="393.6" stroke="#f7f5f2" stroke-width="0.9"/>
<line x1="290.6" y1="474.9" x2="281.4" y2="482.2" stroke="#f7f5f2" stroke-width="0.9"/>
<line x1="305.7" y1="425.6" x2="311.4" y2="433.4" stroke="#f7f5f2" stroke-width="0.9"/>
<line x1="496.6" y1="486.1" x2="492.1" y2="493.8" stroke="#f7f5f2" stroke-width="0.9"/>
<line x1="325.6" y1="421.8" x2="321.8" y2="425.1" stroke="#f7f5f2" stroke-width="0.9"/>
<line x1="387.2" y1="492.7" x2="383.4" y2="497.4" stroke="#f7f5f2" stroke-width="0.9"/>
<line x1="77.9" y1="370.3" x2="84.7" y2="377.5" stroke="#f7f5f2" stroke-width="0.9"/>
<line x1="431.2" y1="327.9" x2="424.6" y2="328.1" stroke="#f7f5f2" stroke-width="0.9"/>
<line x1="184.4" y1="478.1" x2="183.5" y2="481.5" stroke="#f7f5f2" stroke-width="0.9"/>
<line x1="554.2" y1="461.7" x2="552.4" y2="468.0" stroke="#f7f5f2" stroke-width="0.9"/>
<line x1="489.6" y1="445.3" x2="487.2" y2="454.7" stroke="#f7f5f2" stroke-width="0.9"/>
<line x1="216.9" y1="433.0" x2="215.8" y2="441.0" stroke="#f7f5f2" stroke-width="0.9"/>
<line x1="652.3" y1="309.6" x2="657.6" y2="318.2" stroke="#f7f5f2" stroke-width="0.9"/>
<line x1="498.1" y1="486.2" x2="497.0" y2="491.6" stroke="#f7f5f2" stroke-width="0.9"/>
<line x1="380.8" y1="387.5" x2="379.0" y2="391.6" stroke="#f7f5f2" stroke-width="0.9"/>
<line x1="596.9" y1="423.9" x2="592.3" y2="427.1" stroke="#f7f5f2" stroke-width="0.9"/>
<line x1="316.7" y1="311.5" x2="317.7" y2="319.9" stroke="#f7f5f2" stroke-width="0.9"/>
<line x1="381.7" y1="495.1" x2="373.6" y2="496.3" stroke="#f7f5f2" stroke-width="0.9"/>
<line x1="276.8" y1="444.7" x2="278.9" y2="447.7" stroke="#f7f5f2" stroke-width="0.9"/>
<line x1="477.6" y1="429.8" x2="481.5" y2="439.5" stroke="#f7f5f2" stroke-width="0.9"/>
<line x1="230.0" y1="357.8" x2="237.8" y2="358.4" stroke="#f7f5f2" stroke-width="0.9"/>
<line x1="289.7" y1="422.6" x2="292.1" y2="426.2" stroke="#f7f5f2" stroke-width="0.9"/>
<line x1="584.6" y1="482.6" x2="589.0" y2="485.4" stroke="#f7f5f2" stroke-width="0.9"/>
<line x1="137.7" y1="298.6" x2="130.8" y2="306.0" stroke="#f7f5f2" stroke-width="0.9"/>
<line x1="224.5" y1="386.1" x2="233.7" y2="387.0" stroke="#f7f5f2" stroke-width="0.9"/>
<line x1="552.8" y1="466.5" x2="549.9" y2="470.5" stroke="#f7f5f2" stroke-width="0.9"/>
<line x1="482.0" y1="353.1" x2="490.4" y2="360.1" stroke="#f7f5f2" stroke-width="0.9"/>
<line x1="348.6" y1="348.1" x2="342.8" y2="352.0" stroke="#f7f5f2" stroke-width="0.9"/>
<line x1="405.4" y1="412.2" x2="414.5" y2="419.9" stroke="#f7f5f2" stroke-width="0.9"/>
<line x1="199.9" y1="414.5" x2="195.5" y2="415.0" stroke="#f7f5f2" stroke-width="0.9"/>
<line x1="270.0" y1="375.5" x2="264.1" y2="379.0" stroke="#f7f5f2" stroke-width="0.9"/>
<line x1="609.9" y1="426.9" x2="611.9" y2="431.0" stroke="#f7f5f2" stroke-width="0.9"/>
<line x1="486.2" y1="326.9" x2="476.1" y2="331.2" stroke="#f7f5f2" stroke-width="0.9"/>
<line x1="202.1" y1="359.0" x2="198.9" y2="363.0" stroke="#f7f5f2" stroke-width="0.9"/>
<line x1="95.9" y1="431.0" x2="92.8" y2="432.7" stroke="#f7f5f2" stroke-width="0.9"/>
<line x1="389.6" y1="406.5" x2="393.4" y2="407.1" stroke="#f7f5f2" stroke-width="0.9"/>
<line x1="277.0" y1="493.7" x2="269.4" y2="497.2" stroke="#f7f5f2" stroke-width="0.9"/>
<line x1="105.1" y1="302.1" x2="103.2" y2="304.7" stroke="#f7f5f2" stroke-width="0.9"/>
<line x1="172.4" y1="339.2" x2="167.2" y2="346.5" stroke="#f7f5f2" stroke-width="0.9"/>
<line x1="258.9" y1="381.4" x2="257.8" y2="386.9" stroke="#f7f5f2" stroke-width="0.9"/>
<line x1="278.7" y1="358.1" x2="281.9" y2="362.3" stroke="#f7f5f2" stroke-width="0.9"/>
<line x1="222.5" y1="283.5" x2="220.8" y2="289.1" stroke="#f7f5f2" stroke-width="0.9"/>
<line x1="227.1" y1="304.5" x2="228.1" y2="315.1" stroke="#f7f5f2" stroke-width="0.9"/>
<line x1="371.0" y1="347.7" x2="363.1" y2="355.3" stroke="#f7f5f2" stroke-width="0.9"/>
<line x1="436.6" y1="423.1" x2="436.6" y2="432.3" stroke="#f7f5f2" stroke-width="0.9"/>
<line x1="312.6" y1="364.6" x2="313.3" y2="372.1" stroke="#f7f5f2" stroke-width="0.9"/>
<line x1="381.1" y1="395.7" x2="371.6" y2="399.0" stroke="#f7f5f2" stroke-width="0.9"/>
<line x1="200.6" y1="284.8" x2="206.3" y2="285.4" stroke="#f7f5f2" stroke-width="0.9"/>
<line x1="539.5" y1="414.6" x2="544.0" y2="417.8" stroke="#f7f5f2" stroke-width="0.9"/>
<line x1="582.2" y1="461.4" x2="577.0" y2="469.0" stroke="#f7f5f2" stroke-width="0.9"/>
<line x1="508.8" y1="378.7" x2="507.7" y2="385.1" stroke="#f7f5f2" stroke-width="0.9"/>
<line x1="589.2" y1="495.1" x2="579.4" y2="500.7" stroke="#f7f5f2" stroke-width="0.9"/>
<line x1="112.0" y1="333.6" x2="110.4" y2="345.2" stroke="#f7f5f2" stroke-width="0.9"/>
<line x1="372.8" y1="347.2" x2="372.2" y2="358.0" stroke="#f7f5f2" stroke-width="0.9"/>
<line x1="654.3" y1="296.4" x2="666.2" y2="296.9" stroke="#f7f5f2" stroke-width="0.9"/>
<line x1="155.8" y1="364.5" x2="164.0" y2="367.5" stroke="#f7f5f2" stroke-width="0.9"/>
<line x1="400.9" y1="483.8" x2="395.9" y2="488.5" stroke="#f7f5f2" stroke-width="0.9"/>
<line x1="418.4" y1="406.4" x2="418.9" y2="410.9" stroke="#f7f5f2" stroke-width="0.9"/>
<line x1="601.0" y1="426.3" x2="601.8" y2="431.2" stroke="#f7f5f2" stroke-width="0.9"/>
<line x1="389.8" y1="353.1" x2="386.5" y2="360.6" stroke="#f7f5f2" stroke-width="0.9"/>
<line x1="78.6" y1="327.7" x2="85.5" y2="333.3" stroke="#f7f5f2" stroke-width="0.9"/>
<line x1="111.1" y1="445.3" x2="105.1" y2="446.1" stroke="#f7f5f2" stroke-width="0.9"/>
<line x1="398.8" y1="302.0" x2="404.7" y2="308.4" stroke="#f7f5f2" stroke-width="0.9"/>
<line x1="550.1" y1="437.1" x2="559.8" y2="438.9" stroke="#f7f5f2" stroke-width="0.9"/>
<line x1="88.3" y1="453.1" x2="91.7" y2="455.7" stroke="#f7f5f2" stroke-width="0.9"/>
<line x1="85.7" y1="315.5" x2="78.5" y2="316.4" stroke="#f7f5f2" stroke-width="0.9"/>
<line x1="258.2" y1="336.3" x2="267.0" y2="342.0" stroke="#f7f5f2" stroke-width="0.9"/>
<line x1="444.0" y1="413.5" x2="455.3" y2="415.1" stroke="#f7f5f2" stroke-width="0.9"/>
<line x1="401.4" y1="363.1" x2="408.7" y2="370.5" stroke="#f7f5f2" stroke-width="0.9"/>
<line x1="491.3" y1="320.2" x2="483.8" y2="320.9" stroke="#f7f5f2" stroke-width="0.9"/>
<line x1="210.0" y1="340.5" x2="204.2" y2="350.1" stroke="#f7f5f2" stroke-width="0.9"/>
<line x1="107.0" y1="320.5" x2="110.2" y2="324.5" stroke="#f7f5f2" stroke-width="0.9"/>
<line x1="568.0" y1="432.0" x2="562.0" y2="442.2" stroke="#f7f5f2" stroke-width="0.9"/>
<line x1="439.7" y1="363.1" x2="439.9" y2="372.6" stroke="#f7f5f2" stroke-width="0.9"/>
<line x1="102.9" y1="386.8" x2="102.2" y2="393.2" stroke="#f7f5f2" stroke-width="0.9"/>
<line x1="96.9" y1="286.1" x2="101.5" y2="296.9" stroke="#f7f5f2" stroke-width="0.9"/>
<line x1="263.4" y1="312.2" x2="255.3" y2="314.4" stroke="#f7f5f2" stroke-width="0.9"/>
<line x1="174.8" y1="388.6" x2="169.2" y2="393.6" stroke="#f7f5f2" stroke-width="0.9"/>
<line x1="402.5" y1="331.8" x2="399.5" y2="335.4" stroke="#f7f5f2" stroke-width="0.9"/>
<line x1="114.2" y1="467.6" x2="117.0" y2="469.5" stroke="#f7f5f2" stroke-width="0.9"/>
<line x1="344.9" y1="463.1" x2="338.9" y2="469.3" stroke="#f7f5f2" stroke-width="0.9"/>
<line x1="518.5" y1="436.8" x2="515.6" y2="438.6" stroke="#f7f5f2" stroke-width="0.9"/>
<line x1="155.5" y1="315.2" x2="158.8" y2="315.5" stroke="#f7f5f2" stroke-width="0.9"/>
<line x1="587.2" y1="362.7" x2="590.9" y2="363.2" stroke="#f7f5f2" stroke-width="0.9"/>
<line x1="569.1" y1="410.5" x2="580.2" y2="411.9" stroke="#f7f5f2" stroke-width="0.9"/>
<line x1="134.6" y1="342.2" x2="139.1" y2="343.8" stroke="#f7f5f2" stroke-width="0.9"/>
<line x1="186.7" y1="419.0" x2="190.6" y2="421.2" stroke="#f7f5f2" stroke-width="0.9"/>
<line x1="385.0" y1="361.5" x2="384.1" y2="365.7" stroke="#f7f5f2" stroke-width="0.9"/>
<line x1="368.7" y1="364.2" x2="375.9" y2="365.1" stroke="#f7f5f2" stroke-width="0.9"/>
<line x1="432.1" y1="322.0" x2="438.1" y2="322.1" stroke="#f7f5f2" stroke-width="0.9"/>
<line x1="593.5" y1="407.5" x2="592.7" y2="414.0" stroke="#f7f5f2" stroke-width="0.9"/>
<line x1="624.4" y1="308.7" x2="620.5" y2="313.8" stroke="#f7f5f2" stroke-width="0.9"/>
<line x1="288.3" y1="433.4" x2="299.4" y2="434.8" stroke="#f7f5f2" stroke-width="0.9"/>
<line x1="236.4" y1="343.5" x2="228.8" y2="349.7" stroke="#f7f5f2" stroke-width="0.9"/>
<line x1="482.1" y1="480.7" x2="483.6" y2="485.1" stroke="#f7f5f2" stroke-width="0.9"/>
<line x1="572.9" y1="446.1" x2="568.9" y2="446.4" stroke="#f7f5f2" stroke-width="0.9"/>
<line x1="506.4" y1="467.9" x2="504.3" y2="473.8" stroke="#f7f5f2" stroke-width="0.9"/>
<line x1="635.6" y1="474.9" x2="627.9" y2="477.6" stroke="#f7f5f2" stroke-width="0.9"/>
<line x1="659.4" y1="462.1" x2="650.6" y2="463.2" stroke="#f7f5f2" stroke-width="0.9"/>
<line x1="153.1" y1="367.6" x2="160.5" y2="370.8" stroke="#f7f5f2" stroke-width="0.9"/>
<line x1="530.2" y1="293.5" x2="535.7" y2="300.2" stroke="#f7f5f2" stroke-width="0.9"/>
<line x1="259.1" y1="411.7" x2="259.9" y2="416.3" stroke="#f7f5f2" stroke-width="0.9"/>
<line x1="575.5" y1="494.1" x2="577.7" y2="499.0" stroke="#f7f5f2" stroke-width="0.9"/>
<line x1="478.7" y1="321.2" x2="487.3" y2="327.4" stroke="#f7f5f2" stroke-width="0.9"/>
<line x1="397.6" y1="353.7" x2="400.6" y2="353.7" stroke="#f7f5f2" stroke-width="0.9"/>
<line x1="69.2" y1="351.2" x2="63.7" y2="351.4" stroke="#f7f5f2" stroke-width="0.9"/>
<line x1="445.5" y1="294.2" x2="452.5" y2="300.5" stroke="#f7f5f2" stroke-width="0.9"/>
<line x1="353.1" y1="436.8" x2="342.6" y2="439.0" stroke="#f7f5f2" stroke-width="0.9"/>
<line x1="317.2" y1="348.9" x2="320.8" y2="354.4" stroke="#f7f5f2" stroke-width="0.9"/>
<line x1="507.1" y1="380.5" x2="515.2" y2="384.7" stroke="#f7f5f2" stroke-width="0.9"/>
<line x1="531.4" y1="489.8" x2="529.7" y2="494.3" stroke="#f7f5f2" stroke-width="0.9"/>
<line x1="164.0" y1="287.7" x2="169.6" y2="291.3" stroke="#f7f5f2" stroke-width="0.9"/>
<line x1="500.6" y1="404.2" x2="491.6" y2="405.1" stroke="#f7f5f2" stroke-width="0.9"/>
<line x1="102.5" y1="301.3" x2="102.9" y2="304.6" stroke="#f7f5f2" stroke-width="0.9"/>
<line x1="556.1" y1="428.4" x2="549.0" y2="431.8" stroke="#f7f5f2" stroke-width="0.9"/>
<line x1="288.3" y1="304.5" x2="297.1" y2="305.2" stroke="#f7f5f2" stroke-width="0.9"/>
<line x1="203.8" y1="286.5" x2="208.1" y2="287.4" stroke="#f7f5f2" stroke-width="0.9"/>
<line x1="382.7" y1="307.8" x2="375.5" y2="312.2" stroke="#f7f5f2" stroke-width="0.9"/>
<line x1="271.9" y1="306.1" x2="265.9" y2="312.9" stroke="#f7f5f2" stroke-width="0.9"/>
<line x1="591.3" y1="400.2" x2="583.8" y2="403.7" stroke="#f7f5f2" stroke-width="0.9"/>
<line x1="468.9" y1="491.5" x2="464.7" y2="495.2" stroke="#f7f5f2" stroke-width="0.9"/>
<line x1="442.6" y1="381.6" x2="442.9" y2="384.7" stroke="#f7f5f2" stroke-width="0.9"/>
<line x1="223.9" y1="410.5" x2="223.7" y2="418.1" stroke="#f7f5f2" stroke-width="0.9"/>
<line x1="102.8" y1="308.5" x2="98.2" y2="315.7" stroke="#f7f5f2" stroke-width="0.9"/>
<line x1="654.4" y1="452.0" x2="655.2" y2="457.6" stroke="#f7f5f2" stroke-width="0.9"/>
<line x1="367.4" y1="454.5" x2="361.0" y2="456.1" stroke="#f7f5f2" stroke-width="0.9"/>
<line x1="354.5" y1="366.4" x2="357.7" y2="373.0" stroke="#f7f5f2" stroke-width="0.9"/>
<line x1="659.8" y1="290.1" x2="666.2" y2="291.7" stroke="#f7f5f2" stroke-width="0.9"/>
<line x1="469.3" y1="312.7" x2="470.4" y2="316.9" stroke="#f7f5f2" stroke-width="0.9"/>
<line x1="424.4" y1="445.7" x2="428.6" y2="451.3" stroke="#f7f5f2" stroke-width="0.9"/>
<line x1="285.8" y1="472.8" x2="290.7" y2="472.9" stroke="#f7f5f2" stroke-width="0.9"/>
<line x1="592.4" y1="384.8" x2="596.2" y2="386.5" stroke="#f7f5f2" stroke-width="0.9"/>
<line x1="595.1" y1="442.6" x2="593.2" y2="445.6" stroke="#f7f5f2" stroke-width="0.9"/>
<line x1="194.6" y1="376.8" x2="202.9" y2="378.1" stroke="#f7f5f2" stroke-width="0.9"/>
<line x1="621.8" y1="352.7" x2="618.5" y2="355.5" stroke="#f7f5f2" stroke-width="0.9"/>
<line x1="132.6" y1="288.1" x2="133.4" y2="296.9" stroke="#f7f5f2" stroke-width="0.9"/>
<line x1="601.1" y1="451.6" x2="606.0" y2="452.3" stroke="#f7f5f2" stroke-width="0.9"/>
<line x1="425.2" y1="382.1" x2="419.7" y2="383.6" stroke="#f7f5f2" stroke-width="0.9"/>
<line x1="191.4" y1="419.6" x2="187.9" y2="420.5" stroke="#f7f5f2" stroke-width="0.9"/>
<line x1="629.7" y1="414.1" x2="625.9" y2="418.6" stroke="#f7f5f2" stroke-width="0.9"/>
<line x1="602.9" y1="452.5" x2="602.8" y2="455.9" stroke="#f7f5f2" stroke-width="0.9"/>
<line x1="150.8" y1="398.6" x2="140.3" y2="403.3" stroke="#f7f5f2" stroke-width="0.9"/>
<line x1="215.3" y1="399.8" x2="220.3" y2="402.7" stroke="#f7f5f2" stroke-width="0.9"/>
<line x1="508.3" y1="444.8" x2="509.8" y2="450.6" stroke="#f7f5f2" stroke-width="0.9"/>
<line x1="480.3" y1="437.9" x2="487.0" y2="440.5" stroke="#f7f5f2" stroke-width="0.9"/>
<line x1="124.6" y1="316.8" x2="124.7" y2="327.2" stroke="#f7f5f2" stroke-width="0.9"/>
<line x1="449.5" y1="359.1" x2="454.9" y2="362.4" stroke="#f7f5f2" stroke-width="0.9"/>
<line x1="645.0" y1="411.4" x2="642.5" y2="414.7" stroke="#f7f5f2" stroke-width="0.9"/>
<line x1="422.0" y1="413.1" x2="418.7" y2="422.4" stroke="#f7f5f2" stroke-width="0.9"/>
<line x1="586.9" y1="490.4" x2="583.9" y2="496.4" stroke="#f7f5f2" stroke-width="0.9"/>
<line x1="289.6" y1="369.1" x2="286.8" y2="374.7" stroke="#f7f5f2" stroke-width="0.9"/>
<line x1="276.7" y1="356.4" x2="268.1" y2="362.6" stroke="#f7f5f2" stroke-width="0.9"/>
<line x1="468.3" y1="463.1" x2="465.5" y2="468.9" stroke="#f7f5f2" stroke-width="0.9"/>
<line x1="216.7" y1="348.4" x2="213.6" y2="350.7" stroke="#f7f5f2" stroke-width="0.9"/>
<line x1="613.4" y1="345.7" x2="619.4" y2="348.0" stroke="#f7f5f2" stroke-width="0.9"/>
<line x1="152.2" y1="418.5" x2="162.8" y2="421.4" stroke="#f7f5f2" stroke-width="0.9"/>
<line x1="218.7" y1="444.7" x2="214.1" y2="446.6" stroke="#f7f5f2" stroke-width="0.9"/>
<line x1="276.9" y1="382.7" x2="279.8" y2="386.5" stroke="#f7f5f2" stroke-width="0.9"/>
<line x1="319.3" y1="340.4" x2="328.8" y2="341.3" stroke="#f7f5f2" stroke-width="0.9"/>
<line x1="446.2" y1="454.2" x2="451.1" y2="457.5" stroke="#f7f5f2" stroke-width="0.9"/>
<line x1="139.0" y1="296.8" x2="135.8" y2="306.4" stroke="#f7f5f2" stroke-width="0.9"/>
<line x1="77.0" y1="378.4" x2="81.5" y2="385.4" stroke="#f7f5f2" stroke-width="0.9"/>
<line x1="88.6" y1="371.4" x2="82.5" y2="371.9" stroke="#f7f5f2" stroke-width="0.9"/>
<line x1="281.0" y1="480.2" x2="278.5" y2="490.7" stroke="#f7f5f2" stroke-width="0.9"/>
<line x1="142.6" y1="455.3" x2="141.9" y2="459.0" stroke="#f7f5f2" stroke-width="0.9"/>
<line x1="125.6" y1="300.1" x2="131.5" y2="303.2" stroke="#f7f5f2" stroke-width="0.9"/>
<line x1="655.2" y1="405.4" x2="644.3" y2="406.9" stroke="#f7f5f2" stroke-width="0.9"/>
<line x1="516.7" y1="420.1" x2="511.1" y2="424.8" stroke="#f7f5f2" stroke-width="0.9"/>
<line x1="464.3" y1="314.3" x2="466.4" y2="321.8" stroke="#f7f5f2" stroke-width="0.9"/>
<line x1="373.2" y1="434.8" x2="371.2" y2="443.7" stroke="#f7f5f2" stroke-width="0.9"/>
<line x1="535.0" y1="459.1" x2="538.4" y2="460.8" stroke="#f7f5f2" stroke-width="0.9"/>
<line x1="95.9" y1="314.8" x2="102.5" y2="324.4" stroke="#f7f5f2" stroke-width="0.9"/>
<line x1="327.9" y1="381.0" x2="333.0" y2="387.2" stroke="#f7f5f2" stroke-width="0.9"/>
<line x1="529.0" y1="352.0" x2="520.3" y2="358.1" stroke="#f7f5f2" stroke-width="0.9"/>
<line x1="68.7" y1="398.9" x2="65.1" y2="400.2" stroke="#f7f5f2" stroke-width="0.9"/>
<line x1="109.1" y1="338.0" x2="106.3" y2="347.5" stroke="#f7f5f2" stroke-width="0.9"/>
<line x1="462.8" y1="369.6" x2="469.0" y2="374.2" stroke="#f7f5f2" stroke-width="0.9"/>
<line x1="341.7" y1="335.8" x2="350.3" y2="338.8" stroke="#f7f5f2" stroke-width="0.9"/>
<line x1="149.4" y1="322.9" x2="147.4" y2="330.4" stroke="#f7f5f2" stroke-width="0.9"/>
<line x1="69.8" y1="494.2" x2="73.6" y2="504.0" stroke="#f7f5f2" stroke-width="0.9"/>
<line x1="162.0" y1="459.2" x2="172.0" y2="465.5" stroke="#f7f5f2" stroke-width="0.9"/>
<line x1="515.6" y1="457.5" x2="524.6" y2="464.5" stroke="#f7f5f2" stroke-width="0.9"/>
<line x1="139.3" y1="315.7" x2="134.5" y2="317.3" stroke="#f7f5f2" stroke-width="0.9"/>
<line x1="606.7" y1="382.8" x2="608.5" y2="386.5" stroke="#f7f5f2" stroke-width="0.9"/>
<line x1="210.8" y1="420.7" x2="203.5" y2="426.8" stroke="#f7f5f2" stroke-width="0.9"/>
<line x1="326.7" y1="379.1" x2="329.6" y2="385.8" stroke="#f7f5f2" stroke-width="0.9"/>
<line x1="337.4" y1="428.7" x2="342.3" y2="436.7" stroke="#f7f5f2" stroke-width="0.9"/>
<line x1="403.6" y1="311.5" x2="404.8" y2="314.7" stroke="#f7f5f2" stroke-width="0.9"/>
<line x1="280.7" y1="287.1" x2="281.5" y2="290.7" stroke="#f7f5f2" stroke-width="0.9"/>
<line x1="625.8" y1="461.7" x2="627.6" y2="464.5" stroke="#f7f5f2" stroke-width="0.9"/>
<line x1="286.3" y1="347.5" x2="285.1" y2="351.6" stroke="#f7f5f2" stroke-width="0.9"/>
<line x1="564.7" y1="362.8" x2="569.1" y2="364.3" stroke="#f7f5f2" stroke-width="0.9"/>
<line x1="77.0" y1="446.1" x2="73.7" y2="449.9" stroke="#f7f5f2" stroke-width="0.9"/>
<line x1="536.1" y1="298.1" x2="538.7" y2="302.0" stroke="#f7f5f2" stroke-width="0.9"/>
<line x1="523.2" y1="439.9" x2="524.0" y2="445.6" stroke="#f7f5f2" stroke-width="0.9"/>
<line x1="278.2" y1="382.4" x2="285.1" y2="389.8" stroke="#f7f5f2" stroke-width="0.9"/>
<line x1="547.8" y1="479.6" x2="539.5" y2="480.7" stroke="#f7f5f2" stroke-width="0.9"/>
<line x1="623.3" y1="317.1" x2="632.9" y2="324.2" stroke="#f7f5f2" stroke-width="0.9"/>
<line x1="544.4" y1="306.3" x2="545.4" y2="311.9" stroke="#f7f5f2" stroke-width="0.9"/>
<line x1="564.8" y1="427.7" x2="560.2" y2="429.2" stroke="#f7f5f2" stroke-width="0.9"/>
<line x1="580.3" y1="390.6" x2="582.5" y2="393.3" stroke="#f7f5f2" stroke-width="0.9"/>
<line x1="241.1" y1="370.9" x2="237.8" y2="381.9" stroke="#f7f5f2" stroke-width="0.9"/>
<line x1="553.2" y1="295.5" x2="549.7" y2="299.4" stroke="#f7f5f2" stroke-width="0.9"/>
<line x1="269.5" y1="329.4" x2="273.1" y2="329.9" stroke="#f7f5f2" stroke-width="0.9"/>
<line x1="312.1" y1="398.5" x2="310.8" y2="405.0" stroke="#f7f5f2" stroke-width="0.9"/>
<line x1="240.2" y1="283.7" x2="244.7" y2="291.5" stroke="#f7f5f2" stroke-width="0.9"/>
<line x1="358.9" y1="362.0" x2="364.3" y2="362.8" stroke="#f7f5f2" stroke-width="0.9"/>
<line x1="243.6" y1="344.7" x2="247.6" y2="345.0" stroke="#f7f5f2" stroke-width="0.9"/>
<line x1="352.6" y1="284.2" x2="357.2" y2="294.1" stroke="#f7f5f2" stroke-width="0.9"/>
<line x1="330.7" y1="394.1" x2="333.8" y2="395.1" stroke="#f7f5f2" stroke-width="0.9"/>
<line x1="532.9" y1="400.8" x2="536.4" y2="407.3" stroke="#f7f5f2" stroke-width="0.9"/>
<line x1="512.7" y1="389.2" x2="503.9" y2="394.2" stroke="#f7f5f2" stroke-width="0.9"/>
<line x1="597.2" y1="437.5" x2="598.3" y2="446.5" stroke="#f7f5f2" stroke-width="0.9"/>
<line x1="383.8" y1="405.7" x2="377.3" y2="409.8" stroke="#f7f5f2" stroke-width="0.9"/>
<line x1="576.0" y1="291.3" x2="572.5" y2="300.4" stroke="#f7f5f2" stroke-width="0.9"/>
<line x1="422.2" y1="477.1" x2="422.5" y2="480.5" stroke="#f7f5f2" stroke-width="0.9"/>
<line x1="290.2" y1="485.8" x2="289.3" y2="490.2" stroke="#f7f5f2" stroke-width="0.9"/>
<line x1="153.4" y1="443.6" x2="148.5" y2="449.1" stroke="#f7f5f2" stroke-width="0.9"/>
<line x1="249.8" y1="471.7" x2="252.1" y2="473.7" stroke="#f7f5f2" stroke-width="0.9"/>
<line x1="502.2" y1="470.7" x2="508.7" y2="478.3" stroke="#f7f5f2" stroke-width="0.9"/>
<line x1="115.9" y1="433.9" x2="125.3" y2="435.7" stroke="#f7f5f2" stroke-width="0.9"/>
<line x1="621.4" y1="394.5" x2="621.6" y2="397.8" stroke="#f7f5f2" stroke-width="0.9"/>
<line x1="268.2" y1="302.6" x2="257.5" y2="304.9" stroke="#f7f5f2" stroke-width="0.9"/>
<line x1="141.5" y1="376.7" x2="138.6" y2="381.4" stroke="#f7f5f2" stroke-width="0.9"/>
<line x1="133.0" y1="352.4" x2="133.6" y2="359.0" stroke="#f7f5f2" stroke-width="0.9"/>
<line x1="325.6" y1="409.3" x2="314.4" y2="411.8" stroke="#f7f5f2" stroke-width="0.9"/>
<line x1="605.2" y1="459.9" x2="608.8" y2="463.4" stroke="#f7f5f2" stroke-width="0.9"/>
<line x1="340.2" y1="419.6" x2="344.0" y2="427.1" stroke="#f7f5f2" stroke-width="0.9"/>
<line x1="655.1" y1="347.8" x2="658.2" y2="348.7" stroke="#f7f5f2" stroke-width="0.9"/>
<line x1="192.0" y1="438.6" x2="202.5" y2="440.0" stroke="#f7f5f2" stroke-width="0.9"/>
<line x1="208.3" y1="332.6" x2="198.7" y2="335.8" stroke="#f7f5f2" stroke-width="0.9"/>
<line x1="223.9" y1="302.2" x2="212.2" y2="303.3" stroke="#f7f5f2" stroke-width="0.9"/>
<line x1="492.2" y1="382.6" x2="485.0" y2="389.1" stroke="#f7f5f2" stroke-width="0.9"/>
<line x1="369.5" y1="338.9" x2="365.8" y2="345.6" stroke="#f7f5f2" stroke-width="0.9"/>
<line x1="260.0" y1="418.7" x2="255.7" y2="419.1" stroke="#f7f5f2" stroke-width="0.9"/>
<line x1="193.1" y1="329.1" x2="181.6" y2="330.9" stroke="#f7f5f2" stroke-width="0.9"/>
<line x1="615.7" y1="462.5" x2="606.7" y2="468.2" stroke="#f7f5f2" stroke-width="0.9"/>
<line x1="403.5" y1="296.1" x2="395.1" y2="300.8" stroke="#f7f5f2" stroke-width="0.9"/>
<line x1="564.0" y1="289.4" x2="561.6" y2="292.1" stroke="#f7f5f2" stroke-width="0.9"/>
<line x1="356.9" y1="473.9" x2="358.8" y2="485.7" stroke="#f7f5f2" stroke-width="0.9"/>
<line x1="467.9" y1="424.3" x2="471.6" y2="432.8" stroke="#f7f5f2" stroke-width="0.9"/>
<line x1="446.6" y1="294.7" x2="439.4" y2="303.2" stroke="#f7f5f2" stroke-width="0.9"/>
<line x1="543.1" y1="380.3" x2="543.9" y2="385.1" stroke="#f7f5f2" stroke-width="0.9"/>
<line x1="470.9" y1="399.0" x2="474.9" y2="399.0" stroke="#f7f5f2" stroke-width="0.9"/>
<line x1="303.5" y1="333.1" x2="307.4" y2="336.4" stroke="#f7f5f2" stroke-width="0.9"/>
<line x1="314.1" y1="430.9" x2="308.2" y2="440.4" stroke="#f7f5f2" stroke-width="0.9"/>
<line x1="80.3" y1="468.3" x2="74.6" y2="474.6" stroke="#f7f5f2" stroke-width="0.9"/>
<line x1="431.3" y1="356.9" x2="437.2" y2="358.2" stroke="#f7f5f2" stroke-width="0.9"/>
<line x1="461.1" y1="291.7" x2="452.3" y2="294.2" stroke="#f7f5f2" stroke-width="0.9"/>
<line x1="463.4" y1="411.5" x2="453.2" y2="412.8" stroke="#f7f5f2" stroke-width="0.9"/>
<line x1="549.1" y1="494.8" x2="556.2" y2="495.2" stroke="#f7f5f2" stroke-width="0.9"/>
<line x1="431.7" y1="418.5" x2="428.0" y2="428.7" stroke="#f7f5f2" stroke-width="0.9"/>
<line x1="283.1" y1="281.0" x2="279.1" y2="290.7" stroke="#f7f5f2" stroke-width="0.9"/>
<line x1="651.3" y1="408.8" x2="643.3" y2="415.8" stroke="#f7f5f2" stroke-width="0.9"/>
<line x1="654.6" y1="380.3" x2="658.1" y2="390.8" stroke="#f7f5f2" stroke-width="0.9"/>
<line x1="74.6" y1="350.7" x2="68.5" y2="350.9" stroke="#f7f5f2" stroke-width="0.9"/>
<line x1="301.8" y1="339.6" x2="310.6" y2="342.4" stroke="#f7f5f2" stroke-width="0.9"/>
<line x1="248.9" y1="365.7" x2="247.6" y2="369.6" stroke="#f7f5f2" stroke-width="0.9"/>
<line x1="318.4" y1="454.0" x2="312.4" y2="454.5" stroke="#f7f5f2" stroke-width="0.9"/>
<line x1="183.8" y1="395.2" x2="188.8" y2="395.4" stroke="#f7f5f2" stroke-width="0.9"/>
<line x1="246.6" y1="474.3" x2="246.8" y2="479.9" stroke="#f7f5f2" stroke-width="0.9"/>
<line x1="378.2" y1="337.7" x2="385.8" y2="339.3" stroke="#f7f5f2" stroke-width="0.9"/>
<line x1="274.8" y1="341.8" x2="267.1" y2="348.6" stroke="#f7f5f2" stroke-width="0.9"/>
<line x1="482.9" y1="409.1" x2="475.5" y2="416.9" stroke="#f7f5f2" stroke-width="0.9"/>
<line x1="100.7" y1="308.3" x2="92.2" y2="313.0" stroke="#f7f5f2" stroke-width="0.9"/>
<line x1="653.7" y1="448.2" x2="652.8" y2="452.5" stroke="#f7f5f2" stroke-width="0.9"/>
<line x1="437.6" y1="411.2" x2="433.4" y2="411.6" stroke="#f7f5f2" stroke-width="0.9"/>
<line x1="370.1" y1="338.3" x2="374.3" y2="349.4" stroke="#f7f5f2" stroke-width="0.9"/>
<line x1="109.4" y1="425.2" x2="113.6" y2="428.6" stroke="#f7f5f2" stroke-width="0.9"/>
<line x1="247.1" y1="411.7" x2="244.2" y2="416.9" stroke="#f7f5f2" stroke-width="0.9"/>
<line x1="603.9" y1="495.0" x2="593.3" y2="497.7" stroke="#f7f5f2" stroke-width="0.9"/>
<line x1="217.9" y1="458.8" x2="216.9" y2="462.5" stroke="#f7f5f2" stroke-width="0.9"/>
<line x1="112.7" y1="301.5" x2="123.4" y2="306.0" stroke="#f7f5f2" stroke-width="0.9"/>
<line x1="492.6" y1="394.4" x2="490.2" y2="396.2" stroke="#f7f5f2" stroke-width="0.9"/>
<line x1="104.0" y1="472.4" x2="104.1" y2="482.8" stroke="#f7f5f2" stroke-width="0.9"/>
<line x1="332.2" y1="286.0" x2="341.4" y2="287.2" stroke="#f7f5f2" stroke-width="0.9"/>
<line x1="379.4" y1="480.8" x2="387.9" y2="484.1" stroke="#f7f5f2" stroke-width="0.9"/>
<line x1="494.9" y1="432.3" x2="490.4" y2="436.2" stroke="#f7f5f2" stroke-width="0.9"/>
<line x1="410.6" y1="369.7" x2="415.6" y2="375.6" stroke="#f7f5f2" stroke-width="0.9"/>
<line x1="238.0" y1="472.9" x2="233.4" y2="476.9" stroke="#f7f5f2" stroke-width="0.9"/>
<line x1="285.2" y1="321.3" x2="282.2" y2="321.6" stroke="#f7f5f2" stroke-width="0.9"/>
<line x1="513.0" y1="493.1" x2="521.1" y2="494.7" stroke="#f7f5f2" stroke-width="0.9"/>
<line x1="164.7" y1="290.7" x2="161.5" y2="298.6" stroke="#f7f5f2" stroke-width="0.9"/>
<line x1="633.7" y1="344.2" x2="637.6" y2="347.5" stroke="#f7f5f2" stroke-width="0.9"/>
<line x1="155.1" y1="286.2" x2="157.0" y2="293.4" stroke="#f7f5f2" stroke-width="0.9"/>
<line x1="285.9" y1="486.4" x2="280.9" y2="489.4" stroke="#f7f5f2" stroke-width="0.9"/>
<line x1="383.2" y1="302.3" x2="382.1" y2="305.4" stroke="#f7f5f2" stroke-width="0.9"/>
<line x1="585.6" y1="290.9" x2="592.5" y2="297.1" stroke="#f7f5f2" stroke-width="0.9"/>
<line x1="474.8" y1="460.8" x2="481.6" y2="467.4" stroke="#f7f5f2" stroke-width="0.9"/>
<line x1="160.4" y1="489.9" x2="149.5" y2="492.6" stroke="#f7f5f2" stroke-width="0.9"/>
<line x1="388.3" y1="291.1" x2="382.3" y2="292.9" stroke="#f7f5f2" stroke-width="0.9"/>
<line x1="107.7" y1="344.1" x2="104.5" y2="345.3" stroke="#f7f5f2" stroke-width="0.9"/>
<line x1="277.4" y1="297.9" x2="282.3" y2="301.6" stroke="#f7f5f2" stroke-width="0.9"/>
<line x1="324.5" y1="413.7" x2="333.1" y2="416.4" stroke="#f7f5f2" stroke-width="0.9"/>
<line x1="384.4" y1="292.2" x2="378.6" y2="296.1" stroke="#f7f5f2" stroke-width="0.9"/>
<line x1="223.4" y1="458.5" x2="225.1" y2="463.4" stroke="#f7f5f2" stroke-width="0.9"/>
<line x1="537.1" y1="280.8" x2="536.2" y2="288.7" stroke="#f7f5f2" stroke-width="0.9"/>
<line x1="491.2" y1="485.7" x2="498.2" y2="491.7" stroke="#f7f5f2" stroke-width="0.9"/>
<line x1="185.8" y1="384.5" x2="184.9" y2="390.0" stroke="#f7f5f2" stroke-width="0.9"/>
<line x1="121.1" y1="430.6" x2="127.7" y2="431.6" stroke="#f7f5f2" stroke-width="0.9"/>
<line x1="139.4" y1="482.9" x2="129.5" y2="486.8" stroke="#f7f5f2" stroke-width="0.9"/>
<line x1="298.7" y1="493.6" x2="295.8" y2="497.0" stroke="#f7f5f2" stroke-width="0.9"/>
<line x1="625.6" y1="325.3" x2="628.4" y2="326.4" stroke="#f7f5f2" stroke-width="0.9"/>
<line x1="117.5" y1="454.4" x2="118.1" y2="462.8" stroke="#f7f5f2" stroke-width="0.9"/>
<line x1="135.8" y1="419.4" x2="139.7" y2="421.1" stroke="#f7f5f2" stroke-width="0.9"/>
<line x1="419.5" y1="419.6" x2="410.8" y2="424.9" stroke="#f7f5f2" stroke-width="0.9"/>
<line x1="149.2" y1="346.0" x2="149.3" y2="350.3" stroke="#f7f5f2" stroke-width="0.9"/>
<line x1="84.8" y1="468.3" x2="77.3" y2="473.4" stroke="#f7f5f2" stroke-width="0.9"/>
<line x1="357.1" y1="477.9" x2="348.1" y2="483.3" stroke="#f7f5f2" stroke-width="0.9"/>
<line x1="545.1" y1="326.9" x2="551.1" y2="327.9" stroke="#f7f5f2" stroke-width="0.9"/>
<line x1="520.5" y1="382.7" x2="527.8" y2="392.1" stroke="#f7f5f2" stroke-width="0.9"/>
<line x1="323.2" y1="468.0" x2="314.8" y2="476.1" stroke="#f7f5f2" stroke-width="0.9"/>
<line x1="590.5" y1="480.4" x2="588.5" y2="485.5" stroke="#f7f5f2" stroke-width="0.9"/>
<line x1="105.6" y1="426.8" x2="105.4" y2="438.4" stroke="#f7f5f2" stroke-width="0.9"/>
<line x1="154.3" y1="403.5" x2="154.7" y2="407.1" stroke="#f7f5f2" stroke-width="0.9"/>
<line x1="115.4" y1="370.6" x2="108.4" y2="378.1" stroke="#f7f5f2" stroke-width="0.9"/>
<line x1="573.3" y1="379.3" x2="580.1" y2="380.5" stroke="#f7f5f2" stroke-width="0.9"/>
<line x1="535.1" y1="403.6" x2="541.1" y2="406.6" stroke="#f7f5f2" stroke-width="0.9"/>
<line x1="339.5" y1="293.6" x2="343.4" y2="294.7" stroke="#f7f5f2" stroke-width="0.9"/>
<line x1="319.6" y1="309.8" x2="316.0" y2="319.6" stroke="#f7f5f2" stroke-width="0.9"/>
<line x1="581.2" y1="400.1" x2="584.1" y2="403.5" stroke="#f7f5f2" stroke-width="0.9"/>
<line x1="565.0" y1="406.9" x2="561.5" y2="415.0" stroke="#f7f5f2" stroke-width="0.9"/>
<line x1="96.5" y1="323.3" x2="90.4" y2="326.6" stroke="#f7f5f2" stroke-width="0.9"/>
<line x1="626.5" y1="408.3" x2="631.8" y2="409.1" stroke="#f7f5f2" stroke-width="0.9"/>
<line x1="398.8" y1="368.8" x2="407.9" y2="375.7" stroke="#f7f5f2" stroke-width="0.9"/>
<line x1="189.2" y1="283.4" x2="186.6" y2="285.3" stroke="#f7f5f2" stroke-width="0.9"/>
<line x1="583.8" y1="313.4" x2="583.0" y2="316.4" stroke="#f7f5f2" stroke-width="0.9"/>
<line x1="213.9" y1="413.4" x2="206.1" y2="421.3" stroke="#f7f5f2" stroke-width="0.9"/>
<line x1="233.7" y1="411.6" x2="229.7" y2="415.5" stroke="#f7f5f2" stroke-width="0.9"/>
<line x1="220.8" y1="468.7" x2="212.2" y2="471.7" stroke="#f7f5f2" stroke-width="0.9"/>
<line x1="272.7" y1="487.1" x2="278.3" y2="493.0" stroke="#f7f5f2" stroke-width="0.9"/>
<line x1="450.9" y1="347.4" x2="454.9" y2="347.9" stroke="#f7f5f2" stroke-width="0.9"/>
<line x1="429.4" y1="332.5" x2="426.4" y2="335.0" stroke="#f7f5f2" stroke-width="0.9"/>
<line x1="152.1" y1="443.8" x2="154.3" y2="448.8" stroke="#f7f5f2" stroke-width="0.9"/>
<line x1="620.1" y1="459.8" x2="609.6" y2="460.5" stroke="#f7f5f2" stroke-width="0.9"/>
<line x1="425.4" y1="482.9" x2="423.2" y2="491.3" stroke="#f7f5f2" stroke-width="0.9"/>
<line x1="259.7" y1="362.3" x2="265.5" y2="368.0" stroke="#f7f5f2" stroke-width="0.9"/>
<line x1="448.1" y1="467.5" x2="455.3" y2="473.7" stroke="#f7f5f2" stroke-width="0.9"/>
<line x1="84.4" y1="359.6" x2="78.3" y2="362.8" stroke="#f7f5f2" stroke-width="0.9"/>
<line x1="391.8" y1="392.4" x2="390.4" y2="400.7" stroke="#f7f5f2" stroke-width="0.9"/>
<line x1="469.5" y1="401.0" x2="475.3" y2="406.4" stroke="#f7f5f2" stroke-width="0.9"/>
<line x1="141.1" y1="375.4" x2="130.3" y2="377.2" stroke="#f7f5f2" stroke-width="0.9"/>
<line x1="241.6" y1="404.7" x2="242.7" y2="412.3" stroke="#f7f5f2" stroke-width="0.9"/>
<line x1="173.5" y1="451.3" x2="176.4" y2="453.7" stroke="#f7f5f2" stroke-width="0.9"/>
<line x1="233.0" y1="324.1" x2="237.6" y2="325.2" stroke="#f7f5f2" stroke-width="0.9"/>
<line x1="377.9" y1="317.3" x2="375.2" y2="325.7" stroke="#f7f5f2" stroke-width="0.9"/>
<line x1="437.8" y1="384.3" x2="442.9" y2="391.1" stroke="#f7f5f2" stroke-width="0.9"/>
<line x1="342.7" y1="429.4" x2="339.4" y2="433.1" stroke="#f7f5f2" stroke-width="0.9"/>
<line x1="414.6" y1="491.5" x2="413.3" y2="500.0" stroke="#f7f5f2" stroke-width="0.9"/>
<line x1="522.8" y1="342.6" x2="524.1" y2="348.8" stroke="#f7f5f2" stroke-width="0.9"/>
<line x1="502.9" y1="436.1" x2="498.2" y2="436.7" stroke="#f7f5f2" stroke-width="0.9"/>
<line x1="649.4" y1="387.5" x2="644.9" y2="398.6" stroke="#f7f5f2" stroke-width="0.9"/>
<line x1="295.7" y1="298.9" x2="294.8" y2="301.9" stroke="#f7f5f2" stroke-width="0.9"/>
<line x1="493.4" y1="413.6" x2="495.4" y2="423.5" stroke="#f7f5f2" stroke-width="0.9"/>
<line x1="507.3" y1="411.1" x2="506.0" y2="419.7" stroke="#f7f5f2" stroke-width="0.9"/>
<line x1="462.9" y1="401.5" x2="460.9" y2="404.8" stroke="#f7f5f2" stroke-width="0.9"/>
<line x1="484.6" y1="372.9" x2="485.3" y2="384.6" stroke="#f7f5f2" stroke-width="0.9"/>
<line x1="166.5" y1="391.0" x2="171.9" y2="394.1" stroke="#f7f5f2" stroke-width="0.9"/>
<line x1="594.0" y1="318.5" x2="602.1" y2="323.2" stroke="#f7f5f2" stroke-width="0.9"/>
<line x1="374.1" y1="496.3" x2="370.7" y2="497.9" stroke="#f7f5f2" stroke-width="0.9"/>
<line x1="71.5" y1="492.1" x2="73.3" y2="503.1" stroke="#f7f5f2" stroke-width="0.9"/>
<line x1="445.5" y1="379.8" x2="447.5" y2="383.8" stroke="#f7f5f2" stroke-width="0.9"/>
<line x1="329.1" y1="468.7" x2="328.6" y2="472.7" stroke="#f7f5f2" stroke-width="0.9"/>
<line x1="347.1" y1="400.0" x2="344.0" y2="409.6" stroke="#f7f5f2" stroke-width="0.9"/>
<line x1="259.4" y1="487.2" x2="265.0" y2="493.5" stroke="#f7f5f2" stroke-width="0.9"/>
<line x1="392.1" y1="468.2" x2="390.6" y2="471.3" stroke="#f7f5f2" stroke-width="0.9"/>
<line x1="356.6" y1="342.5" x2="360.0" y2="345.4" stroke="#f7f5f2" stroke-width="0.9"/>
<line x1="327.0" y1="371.6" x2="332.6" y2="377.9" stroke="#f7f5f2" stroke-width="0.9"/>
<line x1="435.0" y1="382.7" x2="426.7" y2="388.6" stroke="#f7f5f2" stroke-width="0.9"/>
<line x1="208.4" y1="492.0" x2="212.3" y2="498.9" stroke="#f7f5f2" stroke-width="0.9"/>
<line x1="218.7" y1="434.7" x2="214.9" y2="440.5" stroke="#f7f5f2" stroke-width="0.9"/>
<line x1="219.5" y1="466.7" x2="214.6" y2="468.8" stroke="#f7f5f2" stroke-width="0.9"/>
<line x1="327.6" y1="367.0" x2="327.0" y2="375.2" stroke="#f7f5f2" stroke-width="0.9"/>
<line x1="392.4" y1="401.6" x2="384.4" y2="410.0" stroke="#f7f5f2" stroke-width="0.9"/>
<line x1="122.7" y1="494.4" x2="125.8" y2="494.9" stroke="#f7f5f2" stroke-width="0.9"/>
<line x1="552.5" y1="339.8" x2="555.3" y2="341.5" stroke="#f7f5f2" stroke-width="0.9"/>
<line x1="361.2" y1="463.1" x2="363.9" y2="464.7" stroke="#f7f5f2" stroke-width="0.9"/>
<line x1="75.5" y1="291.6" x2="75.7" y2="297.4" stroke="#f7f5f2" stroke-width="0.9"/>
<line x1="641.4" y1="420.7" x2="638.4" y2="430.9" stroke="#f7f5f2" stroke-width="0.9"/>
<line x1="606.9" y1="426.1" x2="609.0" y2="430.8" stroke="#f7f5f2" stroke-width="0.9"/>
<line x1="352.0" y1="303.8" x2="352.6" y2="315.1" stroke="#f7f5f2" stroke-width="0.9"/>
<line x1="186.5" y1="386.7" x2="193.2" y2="394.4" stroke="#f7f5f2" stroke-width="0.9"/>
<line x1="415.8" y1="299.9" x2="420.1" y2="302.7" stroke="#f7f5f2" stroke-width="0.9"/>
<line x1="367.2" y1="429.2" x2="364.4" y2="433.4" stroke="#f7f5f2" stroke-width="0.9"/>
<line x1="414.9" y1="442.9" x2="420.9" y2="453.3" stroke="#f7f5f2" stroke-width="0.9"/>
<line x1="657.9" y1="378.8" x2="664.3" y2="382.8" stroke="#f7f5f2" stroke-width="0.9"/>
<line x1="118.3" y1="420.1" x2="122.2" y2="420.5" stroke="#f7f5f2" stroke-width="0.9"/>
<line x1="117.8" y1="397.7" x2="121.1" y2="401.2" stroke="#f7f5f2" stroke-width="0.9"/>
<line x1="522.1" y1="376.9" x2="519.8" y2="380.5" stroke="#f7f5f2" stroke-width="0.9"/>
<line x1="656.9" y1="415.0" x2="656.1" y2="421.9" stroke="#f7f5f2" stroke-width="0.9"/>
<line x1="484.0" y1="461.9" x2="491.2" y2="469.0" stroke="#f7f5f2" stroke-width="0.9"/>
<line x1="529.8" y1="302.5" x2="529.7" y2="306.7" stroke="#f7f5f2" stroke-width="0.9"/>
<line x1="177.3" y1="401.8" x2="171.8" y2="402.8" stroke="#f7f5f2" stroke-width="0.9"/>
<line x1="324.5" y1="457.0" x2="326.2" y2="468.4" stroke="#f7f5f2" stroke-width="0.9"/>
<line x1="523.0" y1="386.8" x2="529.1" y2="389.3" stroke="#f7f5f2" stroke-width="0.9"/>
<line x1="457.9" y1="480.0" x2="462.9" y2="487.7" stroke="#f7f5f2" stroke-width="0.9"/>
<line x1="378.9" y1="357.4" x2="373.9" y2="361.6" stroke="#f7f5f2" stroke-width="0.9"/>
<line x1="72.0" y1="384.5" x2="78.8" y2="387.9" stroke="#f7f5f2" stroke-width="0.9"/>
<line x1="501.4" y1="335.0" x2="506.2" y2="339.7" stroke="#f7f5f2" stroke-width="0.9"/>
<line x1="421.7" y1="373.5" x2="423.8" y2="382.4" stroke="#f7f5f2" stroke-width="0.9"/>
<line x1="531.9" y1="399.6" x2="532.0" y2="403.5" stroke="#f7f5f2" stroke-width="0.9"/>
<line x1="217.8" y1="344.7" x2="218.5" y2="356.2" stroke="#f7f5f2" stroke-width="0.9"/>
<line x1="505.4" y1="313.8" x2="513.5" y2="317.0" stroke="#f7f5f2" stroke-width="0.9"/>
<line x1="199.2" y1="307.7" x2="196.1" y2="308.6" stroke="#f7f5f2" stroke-width="0.9"/>
<line x1="639.0" y1="359.8" x2="636.9" y2="362.1" stroke="#f7f5f2" stroke-width="0.9"/>
<line x1="460.4" y1="289.9" x2="470.1" y2="292.0" stroke="#f7f5f2" stroke-width="0.9"/>
<line x1="206.0" y1="449.0" x2="213.3" y2="455.6" stroke="#f7f5f2" stroke-width="0.9"/>
<line x1="368.9" y1="453.7" x2="368.2" y2="462.1" stroke="#f7f5f2" stroke-width="0.9"/>
<line x1="177.5" y1="294.8" x2="177.1" y2="299.4" stroke="#f7f5f2" stroke-width="0.9"/>
<line x1="420.8" y1="379.9" x2="419.1" y2="388.4" stroke="#f7f5f2" stroke-width="0.9"/>
<line x1="450.2" y1="369.2" x2="449.1" y2="379.7" stroke="#f7f5f2" stroke-width="0.9"/>
<line x1="589.2" y1="493.9" x2="581.3" y2="500.8" stroke="#f7f5f2" stroke-width="0.9"/>
<line x1="476.5" y1="399.8" x2="481.4" y2="401.5" stroke="#f7f5f2" stroke-width="0.9"/>
<line x1="459.3" y1="333.9" x2="458.0" y2="342.3" stroke="#f7f5f2" stroke-width="0.9"/>
<line x1="427.5" y1="373.2" x2="430.4" y2="377.4" stroke="#f7f5f2" stroke-width="0.9"/>
<line x1="480.5" y1="472.2" x2="483.8" y2="477.1" stroke="#f7f5f2" stroke-width="0.9"/>
<line x1="333.1" y1="373.1" x2="326.8" y2="379.2" stroke="#f7f5f2" stroke-width="0.9"/>
<line x1="522.5" y1="455.6" x2="513.0" y2="456.4" stroke="#f7f5f2" stroke-width="0.9"/>
<line x1="333.6" y1="376.9" x2="338.5" y2="384.3" stroke="#f7f5f2" stroke-width="0.9"/>
<line x1="559.0" y1="370.7" x2="558.5" y2="378.7" stroke="#f7f5f2" stroke-width="0.9"/>
<line x1="283.6" y1="282.3" x2="284.0" y2="287.8" stroke="#f7f5f2" stroke-width="0.9"/>
<line x1="631.1" y1="309.7" x2="620.0" y2="310.7" stroke="#f7f5f2" stroke-width="0.9"/>
<line x1="536.4" y1="340.6" x2="533.4" y2="341.8" stroke="#f7f5f2" stroke-width="0.9"/>
<line x1="108.5" y1="344.7" x2="102.6" y2="354.5" stroke="#f7f5f2" stroke-width="0.9"/>
<line x1="555.7" y1="460.9" x2="555.6" y2="465.5" stroke="#f7f5f2" stroke-width="0.9"/>
<line x1="123.9" y1="362.2" x2="117.7" y2="366.3" stroke="#f7f5f2" stroke-width="0.9"/>
<line x1="239.2" y1="424.6" x2="242.2" y2="427.7" stroke="#f7f5f2" stroke-width="0.9"/>
<line x1="102.7" y1="406.0" x2="97.6" y2="412.5" stroke="#f7f5f2" stroke-width="0.9"/>
<line x1="316.5" y1="483.3" x2="314.5" y2="492.6" stroke="#f7f5f2" stroke-width="0.9"/>
<line x1="585.1" y1="319.0" x2="584.2" y2="324.6" stroke="#f7f5f2" stroke-width="0.9"/>
<line x1="422.8" y1="487.3" x2="431.8" y2="488.6" stroke="#f7f5f2" stroke-width="0.9"/>
<line x1="627.0" y1="381.4" x2="623.5" y2="384.7" stroke="#f7f5f2" stroke-width="0.9"/>
<line x1="439.9" y1="465.5" x2="445.4" y2="471.2" stroke="#f7f5f2" stroke-width="0.9"/>
<line x1="346.5" y1="381.2" x2="345.0" y2="387.1" stroke="#f7f5f2" stroke-width="0.9"/>
<line x1="156.3" y1="334.9" x2="160.4" y2="335.3" stroke="#f7f5f2" stroke-width="0.9"/>
<line x1="379.0" y1="440.0" x2="372.7" y2="442.1" stroke="#f7f5f2" stroke-width="0.9"/>
<line x1="428.2" y1="422.9" x2="422.9" y2="424.6" stroke="#f7f5f2" stroke-width="0.9"/>
<line x1="274.0" y1="463.4" x2="268.8" y2="464.2" stroke="#f7f5f2" stroke-width="0.9"/>
<line x1="472.4" y1="318.7" x2="480.8" y2="323.2" stroke="#f7f5f2" stroke-width="0.9"/>
<line x1="296.2" y1="362.1" x2="298.7" y2="367.6" stroke="#f7f5f2" stroke-width="0.9"/>
<line x1="163.1" y1="366.8" x2="160.0" y2="369.1" stroke="#f7f5f2" stroke-width="0.9"/>
<line x1="277.5" y1="434.5" x2="270.6" y2="435.1" stroke="#f7f5f2" stroke-width="0.9"/>
<line x1="588.7" y1="433.1" x2="578.5" y2="435.9" stroke="#f7f5f2" stroke-width="0.9"/>
<line x1="618.8" y1="369.6" x2="626.9" y2="371.4" stroke="#f7f5f2" stroke-width="0.9"/>
<line x1="283.7" y1="351.2" x2="292.3" y2="351.4" stroke="#f7f5f2" stroke-width="0.9"/>
<line x1="514.5" y1="296.1" x2="514.8" y2="302.9" stroke="#f7f5f2" stroke-width="0.9"/>
<line x1="566.4" y1="417.2" x2="564.3" y2="421.0" stroke="#f7f5f2" stroke-width="0.9"/>
<line x1="207.2" y1="413.9" x2="200.5" y2="414.8" stroke="#f7f5f2" stroke-width="0.9"/>
<line x1="333.8" y1="339.0" x2="328.1" y2="339.7" stroke="#f7f5f2" stroke-width="0.9"/>
<line x1="274.3" y1="332.7" x2="270.3" y2="339.4" stroke="#f7f5f2" stroke-width="0.9"/>
<line x1="624.8" y1="297.3" x2="621.0" y2="301.9" stroke="#f7f5f2" stroke-width="0.9"/>
<line x1="361.2" y1="430.0" x2="369.9" y2="432.6" stroke="#f7f5f2" stroke-width="0.9"/>
<line x1="97.8" y1="318.5" x2="102.6" y2="321.6" stroke="#f7f5f2" stroke-width="0.9"/>
<line x1="237.8" y1="304.8" x2="237.6" y2="308.0" stroke="#f7f5f2" stroke-width="0.9"/>
<line x1="516.7" y1="314.6" x2="514.1" y2="317.5" stroke="#f7f5f2" stroke-width="0.9"/>
<line x1="115.0" y1="310.4" x2="119.4" y2="316.4" stroke="#f7f5f2" stroke-width="0.9"/>
<line x1="532.7" y1="389.9" x2="535.7" y2="397.0" stroke="#f7f5f2" stroke-width="0.9"/>
<line x1="84.4" y1="458.1" x2="78.8" y2="461.5" stroke="#f7f5f2" stroke-width="0.9"/>
<line x1="130.7" y1="373.8" x2="137.7" y2="377.4" stroke="#f7f5f2" stroke-width="0.9"/>
<line x1="112.0" y1="483.0" x2="100.5" y2="483.0" stroke="#f7f5f2" stroke-width="0.9"/>
<line x1="390.3" y1="439.0" x2="390.9" y2="447.4" stroke="#f7f5f2" stroke-width="0.9"/>
<line x1="169.7" y1="419.3" x2="166.0" y2="425.2" stroke="#f7f5f2" stroke-width="0.9"/>
<line x1="92.9" y1="343.8" x2="89.9" y2="346.5" stroke="#f7f5f2" stroke-width="0.9"/>
<line x1="351.6" y1="342.1" x2="351.0" y2="352.1" stroke="#f7f5f2" stroke-width="0.9"/>
<line x1="239.9" y1="365.2" x2="242.9" y2="365.7" stroke="#f7f5f2" stroke-width="0.9"/>
<line x1="89.8" y1="488.7" x2="88.3" y2="499.5" stroke="#f7f5f2" stroke-width="0.9"/>
<line x1="625.1" y1="397.1" x2="633.7" y2="400.0" stroke="#f7f5f2" stroke-width="0.9"/>
<line x1="326.3" y1="412.6" x2="323.2" y2="418.5" stroke="#f7f5f2" stroke-width="0.9"/>
<line x1="271.2" y1="422.1" x2="271.4" y2="427.0" stroke="#f7f5f2" stroke-width="0.9"/>
<line x1="321.4" y1="394.2" x2="323.9" y2="396.6" stroke="#f7f5f2" stroke-width="0.9"/>
<line x1="491.6" y1="316.0" x2="484.3" y2="316.2" stroke="#f7f5f2" stroke-width="0.9"/>
<line x1="429.0" y1="439.3" x2="419.1" y2="440.3" stroke="#f7f5f2" stroke-width="0.9"/>
<line x1="297.5" y1="365.9" x2="307.2" y2="366.6" stroke="#f7f5f2" stroke-width="0.9"/>
<line x1="345.5" y1="338.9" x2="340.2" y2="344.9" stroke="#f7f5f2" stroke-width="0.9"/>
<line x1="577.8" y1="390.0" x2="586.7" y2="392.3" stroke="#f7f5f2" stroke-width="0.9"/>
<line x1="458.5" y1="481.7" x2="458.8" y2="490.3" stroke="#f7f5f2" stroke-width="0.9"/>
<line x1="370.5" y1="369.4" x2="374.2" y2="372.0" stroke="#f7f5f2" stroke-width="0.9"/>
<line x1="538.4" y1="391.9" x2="537.2" y2="395.0" stroke="#f7f5f2" stroke-width="0.9"/>
<line x1="559.7" y1="421.3" x2="555.2" y2="422.0" stroke="#f7f5f2" stroke-width="0.9"/>
<line x1="175.7" y1="390.3" x2="181.9" y2="393.9" stroke="#f7f5f2" stroke-width="0.9"/>
<line x1="226.0" y1="320.4" x2="230.5" y2="321.0" stroke="#f7f5f2" stroke-width="0.9"/>
<line x1="450.2" y1="424.6" x2="445.0" y2="425.4" stroke="#f7f5f2" stroke-width="0.9"/>
<line x1="318.6" y1="379.0" x2="313.5" y2="389.2" stroke="#f7f5f2" stroke-width="0.9"/>
<line x1="343.8" y1="442.1" x2="349.2" y2="450.1" stroke="#f7f5f2" stroke-width="0.9"/>
<line x1="109.3" y1="438.9" x2="106.3" y2="448.1" stroke="#f7f5f2" stroke-width="0.9"/>
<line x1="137.3" y1="441.5" x2="133.6" y2="444.2" stroke="#f7f5f2" stroke-width="0.9"/>
<line x1="436.1" y1="418.1" x2="437.6" y2="421.5" stroke="#f7f5f2" stroke-width="0.9"/>
<line x1="501.9" y1="304.1" x2="502.8" y2="307.4" stroke="#f7f5f2" stroke-width="0.9"/>
<line x1="572.8" y1="416.7" x2="577.7" y2="417.9" stroke="#f7f5f2" stroke-width="0.9"/>
<line x1="563.4" y1="462.8" x2="570.9" y2="468.5" stroke="#f7f5f2" stroke-width="0.9"/>
<line x1="512.5" y1="282.1" x2="514.9" y2="286.0" stroke="#f7f5f2" stroke-width="0.9"/>
<line x1="634.5" y1="287.7" x2="631.5" y2="291.0" stroke="#f7f5f2" stroke-width="0.9"/>
<line x1="519.3" y1="338.2" x2="516.0" y2="339.8" stroke="#f7f5f2" stroke-width="0.9"/>
<line x1="642.5" y1="477.2" x2="650.3" y2="479.3" stroke="#f7f5f2" stroke-width="0.9"/>
<line x1="506.2" y1="420.9" x2="498.5" y2="428.1" stroke="#f7f5f2" stroke-width="0.9"/>
<line x1="365.6" y1="491.9" x2="366.8" y2="499.0" stroke="#f7f5f2" stroke-width="0.9"/>
<line x1="445.2" y1="451.0" x2="437.1" y2="452.6" stroke="#f7f5f2" stroke-width="0.9"/>
<line x1="228.8" y1="474.5" x2="233.8" y2="484.2" stroke="#f7f5f2" stroke-width="0.9"/>
<line x1="84.9" y1="410.5" x2="76.4" y2="411.6" stroke="#f7f5f2" stroke-width="0.9"/>
<line x1="398.4" y1="437.1" x2="406.9" y2="442.1" stroke="#f7f5f2" stroke-width="0.9"/>
<line x1="462.8" y1="375.1" x2="466.0" y2="378.9" stroke="#f7f5f2" stroke-width="0.9"/>
<line x1="282.7" y1="439.4" x2="287.0" y2="446.2" stroke="#f7f5f2" stroke-width="0.9"/>
<line x1="100.7" y1="450.9" x2="92.2" y2="455.7" stroke="#f7f5f2" stroke-width="0.9"/>
<line x1="533.5" y1="293.7" x2="534.1" y2="299.2" stroke="#f7f5f2" stroke-width="0.9"/>
<line x1="243.8" y1="458.8" x2="248.7" y2="459.0" stroke="#f7f5f2" stroke-width="0.9"/>
<line x1="335.1" y1="291.0" x2="334.0" y2="294.0" stroke="#f7f5f2" stroke-width="0.9"/>
<line x1="425.8" y1="397.7" x2="425.1" y2="401.2" stroke="#f7f5f2" stroke-width="0.9"/>
<line x1="377.5" y1="346.1" x2="382.0" y2="348.4" stroke="#f7f5f2" stroke-width="0.9"/>
<line x1="354.0" y1="359.6" x2="349.7" y2="366.7" stroke="#f7f5f2" stroke-width="0.9"/>
<line x1="231.5" y1="411.8" x2="227.8" y2="415.6" stroke="#f7f5f2" stroke-width="0.9"/>
<line x1="188.8" y1="409.0" x2="181.0" y2="414.7" stroke="#f7f5f2" stroke-width="0.9"/>
<line x1="382.2" y1="477.9" x2="372.8" y2="485.1" stroke="#f7f5f2" stroke-width="0.9"/>
<line x1="280.4" y1="337.8" x2="288.3" y2="341.2" stroke="#f7f5f2" stroke-width="0.9"/>
<line x1="172.7" y1="300.5" x2="175.8" y2="308.8" stroke="#f7f5f2" stroke-width="0.9"/>
<line x1="613.5" y1="455.0" x2="617.3" y2="461.8" stroke="#f7f5f2" stroke-width="0.9"/>
<line x1="257.7" y1="291.4" x2="254.0" y2="292.9" stroke="#f7f5f2" stroke-width="0.9"/>
<line x1="244.5" y1="281.8" x2="248.8" y2="292.8" stroke="#f7f5f2" stroke-width="0.9"/>
<line x1="526.6" y1="378.3" x2="538.0" y2="381.3" stroke="#f7f5f2" stroke-width="0.9"/>
<line x1="348.2" y1="420.5" x2="345.1" y2="421.3" stroke="#f7f5f2" stroke-width="0.9"/>
<line x1="268.3" y1="427.1" x2="271.9" y2="428.0" stroke="#f7f5f2" stroke-width="0.9"/>
<line x1="119.2" y1="451.2" x2="108.1" y2="454.1" stroke="#f7f5f2" stroke-width="0.9"/>
<line x1="382.2" y1="299.8" x2="381.9" y2="309.8" stroke="#f7f5f2" stroke-width="0.9"/>
<line x1="531.2" y1="417.6" x2="538.2" y2="421.8" stroke="#f7f5f2" stroke-width="0.9"/>
<line x1="152.6" y1="297.7" x2="156.8" y2="303.1" stroke="#f7f5f2" stroke-width="0.9"/>
<line x1="632.9" y1="290.6" x2="642.0" y2="294.2" stroke="#f7f5f2" stroke-width="0.9"/>
<line x1="129.1" y1="480.3" x2="127.6" y2="485.0" stroke="#f7f5f2" stroke-width="0.9"/>
<line x1="414.2" y1="366.6" x2="419.8" y2="369.3" stroke="#f7f5f2" stroke-width="0.9"/>
<line x1="479.8" y1="360.7" x2="472.8" y2="365.2" stroke="#f7f5f2" stroke-width="0.9"/>
<line x1="112.9" y1="371.9" x2="106.9" y2="373.2" stroke="#f7f5f2" stroke-width="0.9"/>
<line x1="435.6" y1="322.7" x2="442.8" y2="323.1" stroke="#f7f5f2" stroke-width="0.9"/>
<line x1="372.4" y1="295.1" x2="372.3" y2="299.4" stroke="#f7f5f2" stroke-width="0.9"/>
<line x1="386.5" y1="326.2" x2="391.1" y2="333.0" stroke="#f7f5f2" stroke-width="0.9"/>
<line x1="484.0" y1="291.4" x2="485.7" y2="301.8" stroke="#f7f5f2" stroke-width="0.9"/>
<line x1="170.3" y1="343.1" x2="178.6" y2="345.7" stroke="#f7f5f2" stroke-width="0.9"/>
<line x1="608.1" y1="328.0" x2="614.6" y2="329.5" stroke="#f7f5f2" stroke-width="0.9"/>
<line x1="338.1" y1="488.7" x2="342.1" y2="491.1" stroke="#f7f5f2" stroke-width="0.9"/>
<line x1="391.7" y1="418.9" x2="395.0" y2="421.6" stroke="#f7f5f2" stroke-width="0.9"/>
<line x1="425.7" y1="332.0" x2="423.8" y2="334.6" stroke="#f7f5f2" stroke-width="0.9"/>
<line x1="582.1" y1="454.9" x2="590.5" y2="461.6" stroke="#f7f5f2" stroke-width="0.9"/>
<line x1="251.5" y1="410.2" x2="248.2" y2="418.1" stroke="#f7f5f2" stroke-width="0.9"/>
<line x1="395.4" y1="330.7" x2="400.4" y2="332.1" stroke="#f7f5f2" stroke-width="0.9"/>
<line x1="102.0" y1="406.1" x2="98.5" y2="407.5" stroke="#f7f5f2" stroke-width="0.9"/>
<line x1="635.7" y1="311.8" x2="631.3" y2="322.6" stroke="#f7f5f2" stroke-width="0.9"/>
<line x1="71.4" y1="363.2" x2="74.9" y2="368.3" stroke="#f7f5f2" stroke-width="0.9"/>
<line x1="107.8" y1="332.8" x2="108.3" y2="335.9" stroke="#f7f5f2" stroke-width="0.9"/>
<line x1="353.1" y1="330.3" x2="342.6" y2="334.2" stroke="#f7f5f2" stroke-width="0.9"/>
<line x1="363.8" y1="454.0" x2="359.3" y2="458.3" stroke="#f7f5f2" stroke-width="0.9"/>
<line x1="528.5" y1="356.4" x2="532.8" y2="365.0" stroke="#f7f5f2" stroke-width="0.9"/>
<line x1="170.5" y1="370.9" x2="168.0" y2="374.1" stroke="#f7f5f2" stroke-width="0.9"/>
<line x1="217.0" y1="388.0" x2="213.9" y2="397.8" stroke="#f7f5f2" stroke-width="0.9"/>
<line x1="606.0" y1="437.5" x2="599.7" y2="444.2" stroke="#f7f5f2" stroke-width="0.9"/>
<line x1="476.8" y1="479.4" x2="472.8" y2="486.7" stroke="#f7f5f2" stroke-width="0.9"/>
<line x1="393.6" y1="395.9" x2="400.3" y2="405.2" stroke="#f7f5f2" stroke-width="0.9"/>
<line x1="180.5" y1="388.7" x2="176.9" y2="393.3" stroke="#f7f5f2" stroke-width="0.9"/>
<line x1="444.5" y1="280.4" x2="442.8" y2="285.0" stroke="#f7f5f2" stroke-width="0.9"/>
<line x1="302.6" y1="427.6" x2="309.3" y2="430.0" stroke="#f7f5f2" stroke-width="0.9"/>
<line x1="476.2" y1="491.3" x2="474.9" y2="494.8" stroke="#f7f5f2" stroke-width="0.9"/>
<line x1="431.2" y1="412.9" x2="431.0" y2="420.5" stroke="#f7f5f2" stroke-width="0.9"/>
<line x1="653.7" y1="469.2" x2="647.9" y2="473.1" stroke="#f7f5f2" stroke-width="0.9"/>
<line x1="463.2" y1="454.7" x2="474.8" y2="457.4" stroke="#f7f5f2" stroke-width="0.9"/>
<line x1="193.6" y1="330.4" x2="183.5" y2="332.8" stroke="#f7f5f2" stroke-width="0.9"/>
<line x1="202.0" y1="385.3" x2="194.9" y2="393.8" stroke="#f7f5f2" stroke-width="0.9"/>
<line x1="415.4" y1="473.9" x2="426.3" y2="477.0" stroke="#f7f5f2" stroke-width="0.9"/>
<line x1="639.8" y1="343.2" x2="633.7" y2="349.2" stroke="#f7f5f2" stroke-width="0.9"/>
<line x1="241.9" y1="346.5" x2="233.1" y2="353.3" stroke="#f7f5f2" stroke-width="0.9"/>
<line x1="646.1" y1="300.3" x2="640.2" y2="306.6" stroke="#f7f5f2" stroke-width="0.9"/>
<line x1="634.2" y1="437.4" x2="639.4" y2="439.2" stroke="#f7f5f2" stroke-width="0.9"/>
<line x1="170.5" y1="336.2" x2="174.8" y2="343.1" stroke="#f7f5f2" stroke-width="0.9"/>
<line x1="156.0" y1="298.8" x2="148.3" y2="303.9" stroke="#f7f5f2" stroke-width="0.9"/>
<line x1="141.1" y1="391.5" x2="146.1" y2="402.2" stroke="#f7f5f2" stroke-width="0.9"/>
<line x1="384.5" y1="455.9" x2="381.5" y2="457.2" stroke="#f7f5f2" stroke-width="0.9"/>
<line x1="526.4" y1="439.8" x2="526.6" y2="445.9" stroke="#f7f5f2" stroke-width="0.9"/>
<line x1="624.8" y1="293.3" x2="623.2" y2="296.7" stroke="#f7f5f2" stroke-width="0.9"/>
<line x1="631.9" y1="312.3" x2="632.5" y2="317.0" stroke="#f7f5f2" stroke-width="0.9"/>
<line x1="535.1" y1="402.4" x2="543.9" y2="403.8" stroke="#f7f5f2" stroke-width="0.9"/>
<line x1="186.0" y1="407.1" x2="195.1" y2="409.8" stroke="#f7f5f2" stroke-width="0.9"/>
<line x1="121.6" y1="348.2" x2="125.0" y2="354.1" stroke="#f7f5f2" stroke-width="0.9"/>
<line x1="168.8" y1="296.1" x2="160.0" y2="297.4" stroke="#f7f5f2" stroke-width="0.9"/>
<line x1="443.4" y1="479.5" x2="441.9" y2="483.3" stroke="#f7f5f2" stroke-width="0.9"/>
<line x1="284.0" y1="463.8" x2="281.1" y2="471.7" stroke="#f7f5f2" stroke-width="0.9"/>
<line x1="609.4" y1="487.4" x2="610.2" y2="491.5" stroke="#f7f5f2" stroke-width="0.9"/>
<line x1="118.5" y1="401.6" x2="115.6" y2="405.7" stroke="#f7f5f2" stroke-width="0.9"/>
<line x1="278.5" y1="281.7" x2="288.6" y2="285.9" stroke="#f7f5f2" stroke-width="0.9"/>
<line x1="227.0" y1="392.9" x2="224.3" y2="395.2" stroke="#f7f5f2" stroke-width="0.9"/>
<line x1="492.0" y1="305.5" x2="499.9" y2="308.9" stroke="#f7f5f2" stroke-width="0.9"/>
<line x1="382.0" y1="300.3" x2="382.9" y2="305.7" stroke="#f7f5f2" stroke-width="0.9"/>
<line x1="390.3" y1="421.9" x2="395.9" y2="431.8" stroke="#f7f5f2" stroke-width="0.9"/>
<line x1="275.2" y1="325.4" x2="279.1" y2="334.2" stroke="#f7f5f2" stroke-width="0.9"/>
<line x1="193.4" y1="321.7" x2="187.5" y2="325.0" stroke="#f7f5f2" stroke-width="0.9"/>
<line x1="327.3" y1="456.6" x2="325.5" y2="463.6" stroke="#f7f5f2" stroke-width="0.9"/>
<line x1="219.2" y1="368.8" x2="228.4" y2="371.3" stroke="#f7f5f2" stroke-width="0.9"/>
<line x1="336.8" y1="334.9" x2="339.5" y2="339.8" stroke="#f7f5f2" stroke-width="0.9"/>
<line x1="185.3" y1="405.1" x2="187.7" y2="407.4" stroke="#f7f5f2" stroke-width="0.9"/>
<line x1="224.1" y1="319.3" x2="218.3" y2="328.0" stroke="#f7f5f2" stroke-width="0.9"/>
<line x1="593.6" y1="308.8" x2="596.1" y2="312.7" stroke="#f7f5f2" stroke-width="0.9"/>
<line x1="369.0" y1="461.0" x2="359.5" y2="465.5" stroke="#f7f5f2" stroke-width="0.9"/>
<line x1="78.3" y1="285.9" x2="79.6" y2="291.8" stroke="#f7f5f2" stroke-width="0.9"/>
<line x1="71.7" y1="356.0" x2="67.9" y2="357.6" stroke="#f7f5f2" stroke-width="0.9"/>
<line x1="192.5" y1="349.1" x2="188.5" y2="351.2" stroke="#f7f5f2" stroke-width="0.9"/>
<line x1="134.6" y1="375.4" x2="138.2" y2="378.9" stroke="#f7f5f2" stroke-width="0.9"/>
<line x1="656.8" y1="435.0" x2="661.0" y2="443.6" stroke="#f7f5f2" stroke-width="0.9"/>
<line x1="646.7" y1="489.5" x2="653.2" y2="495.2" stroke="#f7f5f2" stroke-width="0.9"/>
<line x1="96.8" y1="398.2" x2="90.1" y2="401.3" stroke="#f7f5f2" stroke-width="0.9"/>
<line x1="659.0" y1="457.3" x2="653.9" y2="457.5" stroke="#f7f5f2" stroke-width="0.9"/>
<line x1="430.7" y1="288.3" x2="425.8" y2="288.9" stroke="#f7f5f2" stroke-width="0.9"/>
<line x1="539.0" y1="440.7" x2="548.0" y2="441.3" stroke="#f7f5f2" stroke-width="0.9"/>
<line x1="622.6" y1="344.6" x2="621.3" y2="354.5" stroke="#f7f5f2" stroke-width="0.9"/>
<line x1="357.0" y1="394.2" x2="347.2" y2="399.8" stroke="#f7f5f2" stroke-width="0.9"/>
<line x1="301.5" y1="465.0" x2="303.6" y2="469.1" stroke="#f7f5f2" stroke-width="0.9"/>
<line x1="257.9" y1="290.2" x2="264.5" y2="290.3" stroke="#f7f5f2" stroke-width="0.9"/>
<line x1="641.5" y1="457.4" x2="648.6" y2="458.8" stroke="#f7f5f2" stroke-width="0.9"/>
<line x1="223.7" y1="447.7" x2="229.1" y2="449.3" stroke="#f7f5f2" stroke-width="0.9"/>
<line x1="320.9" y1="405.5" x2="322.4" y2="409.3" stroke="#f7f5f2" stroke-width="0.9"/>
<line x1="397.5" y1="441.6" x2="390.9" y2="441.8" stroke="#f7f5f2" stroke-width="0.9"/>
<line x1="219.4" y1="442.8" x2="215.8" y2="443.8" stroke="#f7f5f2" stroke-width="0.9"/>
<line x1="390.6" y1="317.6" x2="380.9" y2="321.3" stroke="#f7f5f2" stroke-width="0.9"/>
<line x1="144.9" y1="471.5" x2="150.0" y2="481.9" stroke="#f7f5f2" stroke-width="0.9"/>
<line x1="536.0" y1="436.3" x2="538.8" y2="443.9" stroke="#f7f5f2" stroke-width="0.9"/>
<line x1="253.3" y1="457.1" x2="243.4" y2="458.8" stroke="#f7f5f2" stroke-width="0.9"/>
<line x1="108.4" y1="403.7" x2="115.6" y2="409.6" stroke="#f7f5f2" stroke-width="0.9"/>
<line x1="80.4" y1="473.9" x2="74.2" y2="481.8" stroke="#f7f5f2" stroke-width="0.9"/>
<line x1="264.9" y1="375.1" x2="274.8" y2="378.1" stroke="#f7f5f2" stroke-width="0.9"/>
<line x1="495.9" y1="433.5" x2="488.8" y2="434.5" stroke="#f7f5f2" stroke-width="0.9"/>
<line x1="441.9" y1="471.8" x2="443.2" y2="476.3" stroke="#f7f5f2" stroke-width="0.9"/>
<line x1="241.0" y1="388.2" x2="231.2" y2="388.4" stroke="#f7f5f2" stroke-width="0.9"/>
<line x1="606.9" y1="465.1" x2="599.0" y2="473.8" stroke="#f7f5f2" stroke-width="0.9"/>
<line x1="504.4" y1="299.7" x2="504.6" y2="306.4" stroke="#f7f5f2" stroke-width="0.9"/>
<line x1="130.3" y1="475.6" x2="134.9" y2="480.0" stroke="#f7f5f2" stroke-width="0.9"/>
<line x1="116.4" y1="396.5" x2="110.5" y2="397.5" stroke="#f7f5f2" stroke-width="0.9"/>
<line x1="443.5" y1="373.3" x2="447.9" y2="374.0" stroke="#f7f5f2" stroke-width="0.9"/>
<line x1="475.4" y1="412.8" x2="475.2" y2="420.3" stroke="#f7f5f2" stroke-width="0.9"/>
<line x1="311.1" y1="476.7" x2="313.7" y2="479.0" stroke="#f7f5f2" stroke-width="0.9"/>
<line x1="538.1" y1="348.4" x2="539.3" y2="354.3" stroke="#f7f5f2" stroke-width="0.9"/>
<line x1="243.2" y1="444.8" x2="242.6" y2="448.6" stroke="#f7f5f2" stroke-width="0.9"/>
<line x1="490.9" y1="354.5" x2="495.1" y2="363.1" stroke="#f7f5f2" stroke-width="0.9"/>
<line x1="436.6" y1="302.2" x2="435.5" y2="308.0" stroke="#f7f5f2" stroke-width="0.9"/>
<line x1="430.0" y1="380.6" x2="429.6" y2="384.0" stroke="#f7f5f2" stroke-width="0.9"/>
<line x1="580.3" y1="339.0" x2="578.5" y2="343.5" stroke="#f7f5f2" stroke-width="0.9"/>
<line x1="205.4" y1="302.1" x2="204.0" y2="305.5" stroke="#f7f5f2" stroke-width="0.9"/>
<line x1="590.1" y1="447.4" x2="582.4" y2="450.6" stroke="#f7f5f2" stroke-width="0.9"/>
<line x1="570.2" y1="338.3" x2="563.8" y2="338.8" stroke="#f7f5f2" stroke-width="0.9"/>
<line x1="626.0" y1="419.1" x2="630.1" y2="426.7" stroke="#f7f5f2" stroke-width="0.9"/>
<line x1="121.7" y1="351.5" x2="119.7" y2="356.1" stroke="#f7f5f2" stroke-width="0.9"/>
<line x1="456.0" y1="416.7" x2="467.2" y2="416.7" stroke="#f7f5f2" stroke-width="0.9"/>
<line x1="189.9" y1="301.7" x2="183.8" y2="303.4" stroke="#f7f5f2" stroke-width="0.9"/>
<line x1="344.9" y1="453.4" x2="347.0" y2="457.6" stroke="#f7f5f2" stroke-width="0.9"/>
<line x1="540.9" y1="343.6" x2="537.9" y2="352.7" stroke="#f7f5f2" stroke-width="0.9"/>
<line x1="456.1" y1="286.3" x2="449.8" y2="286.6" stroke="#f7f5f2" stroke-width="0.9"/>
<line x1="290.2" y1="340.4" x2="286.9" y2="352.0" stroke="#f7f5f2" stroke-width="0.9"/>
<line x1="480.2" y1="385.0" x2="483.1" y2="393.1" stroke="#f7f5f2" stroke-width="0.9"/>
<line x1="230.7" y1="343.2" x2="227.8" y2="347.3" stroke="#f7f5f2" stroke-width="0.9"/>
<line x1="119.9" y1="305.4" x2="112.4" y2="305.7" stroke="#f7f5f2" stroke-width="0.9"/>
<line x1="530.6" y1="425.1" x2="538.3" y2="431.0" stroke="#f7f5f2" stroke-width="0.9"/>
<line x1="370.2" y1="283.8" x2="377.8" y2="284.6" stroke="#f7f5f2" stroke-width="0.9"/>
<line x1="136.4" y1="306.2" x2="136.9" y2="312.3" stroke="#f7f5f2" stroke-width="0.9"/>
<line x1="197.2" y1="296.8" x2="193.2" y2="297.5" stroke="#f7f5f2" stroke-width="0.9"/>
<line x1="651.1" y1="478.3" x2="654.5" y2="480.8" stroke="#f7f5f2" stroke-width="0.9"/>
<line x1="588.3" y1="283.4" x2="586.4" y2="287.2" stroke="#f7f5f2" stroke-width="0.9"/>
<line x1="638.9" y1="480.8" x2="644.6" y2="489.7" stroke="#f7f5f2" stroke-width="0.9"/>
<line x1="502.3" y1="483.3" x2="491.2" y2="484.3" stroke="#f7f5f2" stroke-width="0.9"/>
<line x1="519.2" y1="450.7" x2="521.4" y2="459.8" stroke="#f7f5f2" stroke-width="0.9"/>
<polygon points="131.9,280.0 159.3,280.0 180.0,296.0 201.0,314.0 235.0,327.0 232.3,350.4 214.0,355.6 193.2,345.2 167.1,332.2 143.6,311.3" fill="#a9dc9b"/>
<polygon points="185.0,280.0 226.0,280.0 226.0,296.0 220.0,308.0 200.0,300.0" fill="#a9dc9b"/>
<polygon points="210.0,323.0 228.0,326.0 232.4,356.3 214.0,356.0 210.0,340.0" fill="#a9dc9b"/>
<polygon points="146.0,352.0 153.0,350.4 159.3,361.0 152.0,363.5" fill="#a9dc9b"/>
<polygon points="190.6,370.0 200.0,368.7 208.8,376.0 206.0,384.3 192.0,382.0" fill="#a9dc9b"/>
<polygon points="133.0,371.0 104.0,386.0 108.0,390.0 133.0,381.0" fill="#a9dc9b"/>
<polygon points="263.6,374.0 276.7,374.0 276.7,384.3 263.6,384.3" fill="#a9dc9b"/>
<polygon points="313.0,382.0 330.0,392.0 347.0,420.0 337.0,421.0 322.0,405.0 313.0,395.0" fill="#b2df9f"/>
<polygon points="250.6,402.6 262.3,402.6 262.3,413.0 250.6,413.0" fill="#a9dc9b"/>
<polygon points="120.0,450.0 126.0,444.0 138.4,452.0 132.0,457.4" fill="#a9dc9b"/>
<polygon points="79.7,441.7 84.0,441.7 91.5,455.0 88.0,457.4" fill="#a9dc9b"/>
<polygon points="133.2,472.0 143.0,470.4 146.2,483.4 136.0,483.4" fill="#a9dc9b"/>
<polygon points="156.7,472.0 168.0,467.8 175.0,475.0 203.6,472.0 203.6,498.0 150.0,498.0 158.0,488.0" fill="#b2df9f"/>
<polygon points="280.0,462.0 296.0,457.4 302.7,476.0 302.7,498.0 271.4,498.0 275.0,478.0" fill="#b2df9f"/>
<polygon points="364.0,285.0 369.0,280.0 371.8,290.0 366.0,316.5 364.0,312.0" fill="#a9dc9b"/>
<polygon points="399.0,333.5 409.6,335.0 408.0,342.6 399.0,342.0" fill="#a9dc9b"/>
<polygon points="444.9,361.0 454.0,360.9 454.0,367.4 445.0,367.4" fill="#a9dc9b"/>
<polygon points="371.8,370.0 379.6,367.4 377.0,376.5 372.0,376.0" fill="#a9dc9b"/>
<polygon points="520.5,325.0 530.0,321.7 533.5,330.0 524.0,332.2" fill="#a9dc9b"/>
<polygon points="550.6,364.6 562.3,366.1 561.3,371.2 549.1,369.7" fill="#a9dc9b"/>
<polygon points="544.9,389.0 551.0,390.5 550.0,396.7 543.4,395.2" fill="#a9dc9b"/>
<polygon points="588.4,388.2 594.4,389.7 593.4,393.8 586.9,392.3" fill="#a9dc9b"/>
<polygon points="594.1,394.8 598.2,396.3 597.2,408.0 592.6,406.5" fill="#a9dc9b"/>
<polygon points="584.6,415.6 592.6,417.1 591.6,430.7 583.1,429.2" fill="#a9dc9b"/>
<polygon points="601.6,417.4 615.2,418.9 614.2,434.4 600.1,432.9" fill="#a9dc9b"/>
<polygon points="624.3,404.2 632.2,405.7 631.2,413.7 622.8,412.2" fill="#a9dc9b"/>
<polygon points="631.8,426.9 647.3,428.4 646.3,438.2 630.3,436.7" fill="#a9dc9b"/>
<polygon points="637.5,383.4 647.3,384.9 646.3,394.8 636.0,393.3" fill="#a9dc9b"/>
<polygon points="648.8,470.3 660.0,471.8 659.0,483.6 647.3,482.1" fill="#a9dc9b"/>
<polygon points="654.5,340.0 660.0,341.5 659.0,349.4 653.0,347.9" fill="#a9dc9b"/>
<polygon points="501.5,477.9 508.5,479.4 507.5,485.4 500.0,483.9" fill="#a9dc9b"/>
<polygon points="655.0,337.4 660.0,338.9 659.0,347.8 653.5,346.3" fill="#a9dc9b"/>
<polygon points="474.5,341.0 480.0,342.5 479.0,346.0 473.0,344.5" fill="#a9dc9b"/>
<polygon points="484.5,459.0 488.0,460.5 487.0,465.0 483.0,463.5" fill="#a9dc9b"/>
<polygon points="83.6,345.0 95.0,340.0 107.1,348.0 104.0,368.7 90.0,368.7 84.0,355.0" fill="#e6cdd8"/>
<polygon points="70.6,338.0 86.0,329.6 96.7,336.0 92.0,347.8 73.0,345.0" fill="#cfdcb0"/>
<polygon points="113.6,398.0 130.0,394.8 139.7,402.0 139.7,413.0 120.0,411.0" fill="#ddd6ae"/>
<polygon points="397.9,280.0 473.5,280.0 486.6,290.4 478.8,306.0 450.0,313.9 447.5,324.3 429.2,324.3 400.5,321.7 397.9,300.9" fill="#ddd6ae"/>
<polygon points="430.0,322.0 450.0,318.0 462.0,325.0 464.4,341.3 440.0,341.0 423.0,333.0" fill="#e6cdd8"/>
<polygon points="600.0,280.0 637.9,280.0 637.9,295.0 620.0,306.0 604.0,300.0" fill="#e6cdd8"/>
<polygon points="640.0,280.0 660.0,280.0 660.0,300.0 650.0,296.0" fill="#cfdcb0"/>
<polygon points="592.9,293.0 606.6,295.0 605.6,308.7 590.9,306.7" fill="#ddd6ae"/>
<polygon points="573.8,343.8 583.1,345.8 582.1,353.2 571.8,351.2" fill="#ddd6ae"/>
<polygon points="536.0,434.4 552.9,436.4 551.9,451.5 534.0,449.5" fill="#ddd6ae"/>
<polygon points="641.8,423.1 651.1,425.1 650.1,432.6 639.8,430.6" fill="#ddd6ae"/>
<polygon points="266.0,402.0 276.0,404.0 275.0,411.0 264.0,409.0" fill="#ddd6ae"/>
<polygon points="284.0,442.0 296.0,444.0 295.0,452.0 282.0,450.0" fill="#ddd6ae"/>
<polygon points="418.0,343.0 425.0,345.0 424.0,350.0 416.0,348.0" fill="#ddd6ae"/>
<polygon points="638.0,379.0 647.0,381.0 646.0,387.0 636.0,385.0" fill="#ddd6ae"/>
<polygon points="450.0,402.0 470.0,396.0 489.0,404.0 480.0,415.0 455.0,413.0" fill="#dcdde6"/>
<ellipse cx="72" cy="414" rx="11" ry="9.5" fill="#5cc2ee"/>
<path d="M124.0 280.0 L123.9 280.2 L123.8 280.7 L123.6 281.5 L123.4 282.4 L123.1 283.7 L122.8 285.1 L122.3 286.8 L121.9 288.8 L121.1 290.8 L120.0 292.8 L118.6 294.9 L116.9 297.0 L114.9 299.2 L112.5 301.4 L109.9 303.6 L107.0 306.0 L104.4 308.0 L102.2 309.7 L100.4 311.1 L98.9 312.3 L97.8 313.1 L97.1 313.7 L96.7 314.0" fill="none" stroke="#cdd0de" stroke-width="3.0" stroke-linecap="round" stroke-linejoin="round" />
<path d="M130.6 280.0 L131.0 280.8 L131.7 282.4 L132.8 284.9 L134.3 288.2 L136.1 292.2 L138.3 297.1 L140.8 302.8 L143.8 309.4 L146.9 315.8 L150.1 322.3 L153.5 328.7 L157.1 335.0 L160.9 341.4 L164.8 347.6 L168.9 353.9 L173.1 360.0 L176.8 365.5 L180.0 370.1 L182.7 374.0 L184.8 377.1 L186.4 379.4 L187.5 380.9 L188.0 381.7" fill="none" stroke="#cdd0de" stroke-width="3.0" stroke-linecap="round" stroke-linejoin="round" />
<path d="M83.6 316.5 L84.1 317.0 L85.1 318.1 L86.5 319.7 L88.5 321.8 L91.0 324.4 L93.9 327.6 L97.3 331.3 L101.3 335.6 L105.2 339.6 L109.1 343.6 L113.0 347.3 L116.9 350.9 L120.8 354.3 L124.7 357.6 L128.6 360.7 L132.5 363.7 L137.0 366.4 L141.9 369.0 L147.4 371.3 L153.5 373.4 L160.0 375.3 L167.1 377.0 L174.8 378.5 L182.9 379.8 L190.5 380.8 L197.5 381.6 L204.0 382.2 L209.8 382.5 L215.1 382.6 L219.8 382.4 L224.0 382.0 L227.5 381.3 L230.6 380.7 L233.3 380.2 L235.5 379.8 L237.3 379.5 L238.7 379.2 L239.6 379.1 L240.0 379.0" fill="none" stroke="#cdd0de" stroke-width="3.0" stroke-linecap="round" stroke-linejoin="round" />
<path d="M141.0 374.0 L141.7 374.6 L143.1 376.0 L145.2 377.9 L147.9 380.5 L151.4 383.7 L155.6 387.6 L160.4 392.2 L166.0 397.4 L171.5 402.7 L177.1 408.1 L182.6 413.5 L188.2 419.0 L193.7 424.7 L199.2 430.4 L204.8 436.2 L210.3 442.0 L215.2 447.7 L219.6 453.2 L223.3 458.6 L226.4 463.7 L228.9 468.7 L230.7 473.5 L232.0 478.1 L232.7 482.5 L233.3 486.4 L233.8 489.7 L234.2 492.5 L234.5 494.7 L234.8 496.3 L234.9 497.4 L235.0 498.0" fill="none" stroke="#cdd0de" stroke-width="3.0" stroke-linecap="round" stroke-linejoin="round" />
<path d="M235.0 379.0 L235.1 379.6 L235.4 380.8 L235.7 382.7 L236.2 385.1 L236.8 388.2 L237.6 391.9 L238.4 396.2 L239.4 401.0 L240.2 405.3 L241.0 409.0 L241.6 412.1 L242.1 414.5 L242.4 416.4 L242.7 417.6 L242.8 418.2" fill="none" stroke="#cdd0de" stroke-width="3.0" stroke-linecap="round" stroke-linejoin="round" />
<path d="M68.0 420.8 L68.7 420.8 L70.0 420.8 L71.9 420.8 L74.5 420.8 L77.8 420.8 L81.7 420.8 L86.2 420.8 L91.5 420.8 L96.6 420.8 L101.6 420.7 L106.6 420.6 L111.5 420.4 L116.3 420.2 L121.0 419.9 L125.7 419.7 L130.2 419.3 L135.4 419.0 L141.3 418.7 L147.8 418.4 L155.0 418.0 L162.8 417.7 L171.3 417.4 L180.5 417.1 L190.2 416.7 L199.6 416.6 L208.6 416.7 L217.2 417.0 L225.3 417.5 L233.1 418.2 L240.4 419.1 L247.3 420.1 L253.9 421.4 L260.2 422.8 L266.3 424.3 L272.2 425.8 L277.9 427.5 L283.4 429.2 L288.7 431.0 L293.8 432.9 L298.7 434.8 L303.5 436.3 L308.2 437.3 L312.9 437.8 L317.4 437.8 L321.9 437.3 L326.3 436.3 L330.6 434.8 L334.9 432.9 L338.6 431.2 L341.8 429.7 L344.4 428.5 L346.5 427.5 L348.1 426.7 L349.2 426.2 L349.7 426.0" fill="none" stroke="#cdd0de" stroke-width="3.0" stroke-linecap="round" stroke-linejoin="round" />
<path d="M229.7 462.6 L230.6 462.5 L232.5 462.4 L235.3 462.1 L239.1 461.8 L243.8 461.4 L249.4 460.9 L255.9 460.3 L263.4 459.7 L270.6 458.9 L277.5 457.9 L284.0 456.7 L290.2 455.4 L296.1 454.0 L301.6 452.3 L306.8 450.5 L311.7 448.6 L316.3 446.6 L320.7 444.6 L324.9 442.7 L328.8 440.7 L332.4 438.8 L335.8 436.8 L338.9 434.8 L341.8 432.9 L344.4 431.2 L346.6 429.7 L348.4 428.5 L349.8 427.5 L350.9 426.7 L351.6 426.2 L352.0 426.0" fill="none" stroke="#cdd0de" stroke-width="3.0" stroke-linecap="round" stroke-linejoin="round" />
<path d="M240.0 400.0 L240.8 399.9 L242.3 399.6 L244.7 399.2 L247.8 398.8 L251.6 398.1 L256.3 397.4 L261.7 396.5 L268.0 395.5 L273.8 395.0 L279.1 395.0 L284.1 395.5 L288.7 396.4 L292.8 397.9 L296.6 399.9 L299.9 402.3 L302.8 405.3 L305.3 408.3 L307.3 411.3 L308.9 414.4 L310.0 417.5 L310.7 420.6 L311.0 423.8 L310.8 427.0 L310.2 430.3 L309.6 433.1 L309.2 435.6 L308.8 437.6 L308.5 439.3 L308.2 440.5 L308.1 441.3 L308.0 441.7" fill="none" stroke="#cdd0de" stroke-width="3.0" stroke-linecap="round" stroke-linejoin="round" />
<path d="M68.0 452.0 L68.4 451.7 L69.2 451.0 L70.4 450.1 L72.1 448.8 L74.1 447.1 L76.5 445.2 L79.4 442.9 L82.6 440.4 L85.7 437.9 L88.6 435.7 L91.4 433.6 L94.0 431.6 L96.5 429.8 L98.7 428.2 L100.9 426.7 L102.8 425.4 L104.5 424.2 L106.0 423.3 L107.2 422.4 L108.2 421.8 L109.0 421.3 L109.5 421.0 L109.7 420.8" fill="none" stroke="#cdd0de" stroke-width="3.0" stroke-linecap="round" stroke-linejoin="round" />
<path d="M334.0 478.0 L334.5 477.7 L335.4 477.0 L336.8 476.0 L338.7 474.7 L341.0 473.1 L343.8 471.1 L347.1 468.8 L350.9 466.2 L354.2 463.9 L357.0 461.9 L359.3 460.3 L361.2 459.0 L362.6 458.0 L363.5 457.3 L364.0 457.0" fill="none" stroke="#cdd0de" stroke-width="3.0" stroke-linecap="round" stroke-linejoin="round" />
<path d="M294.9 280.0 L296.0 280.6 L298.1 281.7 L301.4 283.4 L305.7 285.7 L311.1 288.6 L317.6 292.0 L325.1 296.0 L333.8 300.5 L341.9 304.9 L349.4 309.0 L356.4 312.9 L362.8 316.6 L368.7 320.1 L374.0 323.3 L378.8 326.3 L383.1 329.2 L387.1 331.8 L390.9 334.3 L394.4 336.6 L397.8 338.8 L400.9 340.8 L403.8 342.6 L406.5 344.2 L409.0 345.8 L411.8 347.1 L414.8 348.2 L418.2 349.1 L421.9 349.9 L425.9 350.4 L430.2 350.8 L434.8 351.0 L439.8 351.0 L444.1 351.0 L447.8 351.0 L450.8 351.0 L453.3 351.0 L455.2 351.0 L456.4 351.0 L457.0 351.0" fill="none" stroke="#cdd0de" stroke-width="3.0" stroke-linecap="round" stroke-linejoin="round" />
<path d="M314.5 280.0 L314.5 280.4 L314.4 281.1 L314.3 282.2 L314.1 283.7 L313.9 285.5 L313.6 287.7 L313.4 290.3 L313.0 293.2 L312.3 296.3 L311.1 299.6 L309.5 303.0 L307.5 306.6 L305.0 310.3 L302.1 314.3 L298.8 318.3 L295.0 322.6 L291.2 326.7 L287.2 330.8 L283.2 334.8 L279.0 338.7 L274.8 342.5 L270.4 346.3 L265.9 349.9 L261.4 353.5 L257.4 356.6 L254.0 359.3 L251.1 361.5 L248.8 363.3 L247.1 364.7 L246.0 365.6 L245.4 366.0" fill="none" stroke="#cdd0de" stroke-width="3.0" stroke-linecap="round" stroke-linejoin="round" />
<path d="M210.0 436.0 L210.3 436.3 L210.9 436.8 L211.8 437.6 L213.0 438.6 L214.5 439.9 L216.2 441.4 L218.3 443.3 L220.7 445.3 L222.8 447.4 L224.7 449.3 L226.3 451.3 L227.6 453.1 L228.7 455.0 L229.6 456.7 L230.1 458.5 L230.5 460.1 L230.5 462.1 L230.1 464.4 L229.4 466.9 L228.4 469.7 L227.0 472.9 L225.4 476.3 L223.3 480.0 L221.0 484.0 L218.9 487.5 L217.1 490.5 L215.7 493.0 L214.5 495.0 L213.6 496.5 L213.0 497.5 L212.7 498.0" fill="none" stroke="#cdd0de" stroke-width="3.0" stroke-linecap="round" stroke-linejoin="round" />
<path d="M364.0 332.2 L364.6 332.4 L365.7 332.8 L367.4 333.4 L369.7 334.2 L372.6 335.2 L376.0 336.5 L380.0 337.9 L384.5 339.5 L389.0 341.1 L393.3 342.7 L397.5 344.2 L401.5 345.7 L405.5 347.1 L409.3 348.5 L413.0 349.9 L416.5 351.3 L419.6 352.5 L422.3 353.5 L424.5 354.3 L426.3 355.0 L427.7 355.5 L428.6 355.8 L429.0 356.0" fill="none" stroke="#cdd0de" stroke-width="3.0" stroke-linecap="round" stroke-linejoin="round" />
<path d="M400.5 300.9 L400.5 301.3 L400.4 302.1 L400.3 303.3 L400.1 305.0 L399.9 307.0 L399.6 309.5 L399.4 312.3 L399.0 315.6 L399.0 318.8 L399.4 321.9 L400.0 324.9 L401.0 327.8 L402.3 330.7 L403.9 333.4 L405.9 336.1 L408.2 338.7 L410.8 341.3 L413.6 343.8 L416.8 346.3 L420.2 348.7 L423.9 351.1 L427.9 353.4 L432.2 355.8 L436.7 358.0 L440.7 360.0 L444.1 361.7 L447.0 363.2 L449.3 364.3 L451.0 365.1 L452.1 365.7 L452.7 366.0" fill="none" stroke="#cdd0de" stroke-width="3.0" stroke-linecap="round" stroke-linejoin="round" />
<path d="M388.3 340.0 L388.6 340.1 L389.2 340.4 L390.1 340.7 L391.3 341.2 L392.7 341.8 L394.5 342.5 L396.6 343.3 L398.9 344.3 L401.4 345.2 L403.8 346.0 L406.4 346.8 L409.0 347.5 L411.7 348.1 L414.4 348.7 L417.2 349.2 L420.0 349.7 L422.5 350.1 L424.7 350.4 L426.4 350.7 L427.9 351.0 L428.9 351.1 L429.6 351.2 L430.0 351.3" fill="none" stroke="#cdd0de" stroke-width="3.0" stroke-linecap="round" stroke-linejoin="round" />
<path d="M435.6 374.0 L435.7 374.4 L435.8 375.1 L436.0 376.1 L436.2 377.5 L436.5 379.3 L436.8 381.4 L437.3 383.9 L437.7 386.8 L438.2 389.3 L438.5 391.4 L438.8 393.2 L439.0 394.6 L439.2 395.6 L439.3 396.3 L439.4 396.7" fill="none" stroke="#cdd0de" stroke-width="3.0" stroke-linecap="round" stroke-linejoin="round" />
<path d="M378.9 451.5 L379.3 451.6 L380.2 451.7 L381.6 451.8 L383.3 452.1 L385.5 452.4 L388.2 452.7 L391.3 453.1 L394.8 453.6 L398.6 454.1 L402.6 454.6 L406.9 455.2 L411.3 455.8 L416.1 456.4 L421.0 457.0 L426.2 457.7 L431.7 458.5 L436.9 459.2 L442.0 460.0 L446.9 460.8 L451.6 461.6 L456.2 462.5 L460.6 463.4 L464.7 464.3 L468.8 465.2 L472.3 466.0 L475.3 466.7 L477.8 467.3 L479.8 467.8 L481.3 468.1 L482.3 468.4 L482.8 468.5" fill="none" stroke="#cdd0de" stroke-width="3.0" stroke-linecap="round" stroke-linejoin="round" />
<path d="M407.2 455.2 L407.3 455.0 L407.6 454.6 L408.1 454.0 L408.7 453.1 L409.4 452.1 L410.3 450.9 L411.4 449.4 L412.5 447.8 L413.8 446.2 L415.1 444.6 L416.5 443.1 L417.9 441.7 L419.4 440.3 L420.9 438.9 L422.5 437.6 L424.2 436.4 L425.6 435.3 L426.9 434.3 L427.9 433.6 L428.8 432.9 L429.4 432.5 L429.8 432.2 L430.0 432.0" fill="none" stroke="#cdd0de" stroke-width="3.0" stroke-linecap="round" stroke-linejoin="round" />
<path d="M360.0 476.0 L360.3 475.9 L360.9 475.6 L361.8 475.3 L363.0 474.8 L364.4 474.2 L366.2 473.5 L368.3 472.7 L370.6 471.8 L373.3 471.0 L376.2 470.4 L379.5 470.0 L383.0 469.8 L386.9 469.7 L391.0 469.8 L395.4 470.1 L400.2 470.6 L404.9 471.1 L409.6 471.7 L414.3 472.3 L419.1 473.0 L423.8 473.8 L428.5 474.6 L433.2 475.5 L438.0 476.5 L442.4 477.4 L446.5 478.2 L450.4 479.0 L453.9 479.7 L457.2 480.3 L460.1 480.9 L462.8 481.5 L465.1 481.9 L467.2 482.4 L469.0 482.7 L470.4 483.0 L471.6 483.2 L472.5 483.4 L473.1 483.5 L473.4 483.6" fill="none" stroke="#cdd0de" stroke-width="3.0" stroke-linecap="round" stroke-linejoin="round" />
<path d="M465.8 327.4 L465.8 327.8 L465.7 328.5 L465.7 329.7 L465.6 331.2 L465.5 333.1 L465.3 335.4 L465.2 338.1 L465.0 341.1 L464.8 344.5 L464.6 348.3 L464.3 352.5 L464.1 357.0 L463.8 362.0 L463.5 367.2 L463.1 372.9 L462.8 378.9 L462.5 384.2 L462.2 388.7 L462.0 392.5 L461.8 395.5 L461.6 397.7 L461.5 399.2 L461.5 400.0" fill="none" stroke="#cdd0de" stroke-width="3.0" stroke-linecap="round" stroke-linejoin="round" />
<path d="M483.0 326.0 L483.1 326.4 L483.3 327.2 L483.5 328.4 L483.9 330.0 L484.4 332.0 L484.9 334.5 L485.5 337.3 L486.3 340.5 L486.9 344.1 L487.5 348.0 L488.0 352.3 L488.5 356.9 L488.9 361.9 L489.2 367.2 L489.5 372.9 L489.6 378.9 L489.8 384.2 L489.9 388.7 L490.1 392.5 L490.2 395.5 L490.2 397.7 L490.3 399.2 L490.3 400.0" fill="none" stroke="#cdd0de" stroke-width="3.0" stroke-linecap="round" stroke-linejoin="round" />
<path d="M440.0 341.7 L440.4 341.7 L441.2 341.6 L442.4 341.6 L444.0 341.5 L446.0 341.4 L448.5 341.2 L451.3 341.1 L454.5 340.9 L457.3 340.8 L459.8 340.6 L461.8 340.5 L463.4 340.4 L464.6 340.4 L465.4 340.3 L465.8 340.3" fill="none" stroke="#cdd0de" stroke-width="3.0" stroke-linecap="round" stroke-linejoin="round" />
<path d="M498.9 346.0 L499.1 345.8 L499.5 345.3 L500.1 344.5 L500.9 343.5 L501.9 342.3 L503.1 340.8 L504.5 339.1 L506.2 337.2 L507.7 335.2 L509.2 333.3 L510.6 331.4 L511.9 329.5 L513.2 327.7 L514.4 325.9 L515.6 324.0 L516.6 322.3 L517.6 320.7 L518.4 319.4 L519.1 318.2 L519.6 317.3 L520.0 316.7 L520.3 316.2 L520.4 316.0" fill="none" stroke="#cdd0de" stroke-width="3.0" stroke-linecap="round" stroke-linejoin="round" />
<path d="M520.4 280.0 L520.5 280.2 L520.6 280.7 L520.8 281.4 L521.1 282.2 L521.4 283.4 L521.8 284.7 L522.3 286.3 L522.8 288.1 L523.2 290.0 L523.5 292.0 L523.6 294.2 L523.6 296.4 L523.4 298.8 L523.1 301.3 L522.6 303.9 L522.1 306.5 L521.5 308.9 L521.1 310.9 L520.7 312.6 L520.4 314.0 L520.2 315.0 L520.1 315.7 L520.0 316.0" fill="none" stroke="#cdd0de" stroke-width="3.0" stroke-linecap="round" stroke-linejoin="round" />
<path d="M526.2 340.3 L526.4 340.0 L526.9 339.4 L527.5 338.4 L528.4 337.2 L529.6 335.6 L530.9 333.7 L532.5 331.5 L534.2 329.0 L535.9 326.4 L537.3 323.7 L538.5 320.9 L539.6 318.1 L540.5 315.1 L541.2 312.0 L541.8 308.9 L542.1 305.7 L542.4 302.9 L542.7 300.4 L542.9 298.4 L543.1 296.8 L543.3 295.6 L543.4 294.8 L543.4 294.4" fill="none" stroke="#cdd0de" stroke-width="3.0" stroke-linecap="round" stroke-linejoin="round" />
<path d="M520.4 360.4 L520.7 360.4 L521.3 360.5 L522.3 360.7 L523.5 360.9 L525.1 361.1 L527.0 361.4 L529.2 361.7 L531.7 362.0 L534.5 362.4 L537.6 362.8 L541.1 363.3 L544.8 363.8 L548.8 364.3 L553.1 364.8 L557.8 365.4 L562.7 365.9 L567.0 366.5 L570.7 366.9 L573.8 367.3 L576.3 367.6 L578.1 367.8 L579.4 367.9 L580.0 368.0" fill="none" stroke="#cdd0de" stroke-width="3.0" stroke-linecap="round" stroke-linejoin="round" />
<path d="M543.4 313.0 L544.0 313.1 L545.1 313.2 L546.8 313.4 L549.1 313.7 L552.0 314.0 L555.4 314.4 L559.4 314.9 L564.0 315.4 L568.6 316.0 L573.3 316.7 L578.0 317.4 L582.8 318.1 L587.7 318.9 L592.6 319.8 L597.5 320.7 L602.5 321.6 L607.5 322.7 L612.5 323.8 L617.5 324.9 L622.5 326.2 L627.5 327.5 L632.5 328.8 L637.5 330.2 L642.5 331.8 L646.9 333.1 L650.6 334.2 L653.8 335.1 L656.2 335.9 L658.1 336.4 L659.4 336.8 L660.0 337.0" fill="none" stroke="#cdd0de" stroke-width="3.0" stroke-linecap="round" stroke-linejoin="round" />
<path d="M565.0 301.5 L565.2 301.3 L565.7 300.8 L566.4 300.0 L567.3 299.0 L568.5 297.8 L569.9 296.3 L571.6 294.6 L573.4 292.6 L575.1 290.9 L576.5 289.4 L577.7 288.2 L578.6 287.2 L579.3 286.4 L579.8 285.9 L580.0 285.7" fill="none" stroke="#cdd0de" stroke-width="3.0" stroke-linecap="round" stroke-linejoin="round" />
<path d="M520.4 360.4 L520.4 361.0 L520.3 362.3 L520.1 364.1 L519.9 366.6 L519.7 369.7 L519.4 373.4 L519.1 377.7 L518.8 382.7 L518.3 387.5 L517.8 392.1 L517.2 396.6 L516.6 401.0 L515.9 405.2 L515.1 409.2 L514.2 413.1 L513.3 416.9 L512.5 420.2 L511.8 423.0 L511.2 425.3 L510.7 427.2 L510.4 428.6 L510.1 429.5 L510.0 430.0" fill="none" stroke="#cdd0de" stroke-width="3.0" stroke-linecap="round" stroke-linejoin="round" />
<path d="M480.9 387.2 L480.9 387.7 L480.9 388.7 L480.9 390.2 L480.9 392.2 L480.9 394.7 L480.9 397.8 L480.9 401.3 L480.9 405.3 L480.9 409.5 L480.8 413.8 L480.6 418.2 L480.4 422.7 L480.2 427.4 L479.9 432.2 L479.6 437.2 L479.3 442.2 L478.9 447.3 L478.6 452.3 L478.3 457.2 L478.0 462.1 L477.7 467.0 L477.4 471.8 L477.1 476.6 L476.9 481.4 L476.7 485.5 L476.5 489.1 L476.3 492.1 L476.2 494.4 L476.1 496.2 L476.0 497.4 L476.0 498.0" fill="none" stroke="#cdd0de" stroke-width="3.0" stroke-linecap="round" stroke-linejoin="round" />
<path d="M551.0 396.7 L550.9 397.1 L550.6 397.8 L550.1 398.8 L549.5 400.2 L548.8 402.0 L547.9 404.1 L546.9 406.6 L545.7 409.4 L544.6 412.4 L543.6 415.6 L542.7 419.0 L541.9 422.5 L541.2 426.2 L540.5 430.1 L539.9 434.2 L539.5 438.4 L539.0 442.1 L538.7 445.3 L538.4 448.0 L538.2 450.1 L538.0 451.7 L537.9 452.8 L537.8 453.3" fill="none" stroke="#cdd0de" stroke-width="3.0" stroke-linecap="round" stroke-linejoin="round" />
<path d="M613.3 374.0 L613.4 374.4 L613.5 375.1 L613.7 376.1 L613.9 377.5 L614.2 379.3 L614.5 381.4 L615.0 383.9 L615.4 386.8 L616.0 389.7 L616.6 392.6 L617.2 395.6 L617.9 398.7 L618.7 401.8 L619.5 405.0 L620.4 408.2 L621.4 411.6 L622.5 414.6 L623.8 417.3 L625.3 419.7 L626.9 421.8 L628.8 423.6 L630.8 425.2 L633.0 426.4 L635.3 427.4 L637.7 428.2 L639.9 428.8 L642.2 429.3 L644.4 429.7 L646.6 429.9 L648.7 430.0 L650.8 429.9 L652.8 429.6 L654.6 429.4 L656.2 429.2 L657.4 429.1 L658.5 429.0 L659.2 428.9 L659.7 428.8 L660.0 428.8" fill="none" stroke="#cdd0de" stroke-width="3.0" stroke-linecap="round" stroke-linejoin="round" />
<path d="M624.7 423.1 L624.8 423.5 L625.1 424.2 L625.4 425.2 L625.9 426.6 L626.5 428.4 L627.2 430.5 L628.0 433.0 L628.9 435.9 L630.2 438.2 L631.7 440.1 L633.6 441.5 L635.8 442.5 L638.4 443.0 L641.2 443.0 L644.4 442.5 L647.8 441.5 L650.9 440.7 L653.5 440.0 L655.7 439.4 L657.4 438.9 L658.7 438.6 L659.6 438.3 L660.0 438.2" fill="none" stroke="#cdd0de" stroke-width="3.0" stroke-linecap="round" stroke-linejoin="round" />
<path d="M620.9 449.6 L621.5 449.6 L622.7 449.7 L624.6 449.8 L627.0 450.0 L630.1 450.2 L633.7 450.4 L638.0 450.6 L642.9 450.9 L647.2 451.2 L650.8 451.4 L653.9 451.6 L656.3 451.8 L658.2 451.9 L659.4 452.0 L660.0 452.0" fill="none" stroke="#cdd0de" stroke-width="3.0" stroke-linecap="round" stroke-linejoin="round" />
<path d="M602.0 340.0 L601.8 340.3 L601.5 340.9 L600.9 341.8 L600.2 343.0 L599.4 344.4 L598.3 346.2 L597.1 348.3 L595.6 350.6 L594.4 352.7 L593.3 354.5 L592.5 355.9 L591.8 357.1 L591.2 358.0 L590.9 358.6 L590.7 358.9" fill="none" stroke="#cdd0de" stroke-width="3.0" stroke-linecap="round" stroke-linejoin="round" />
<path d="M644.0 280.0 L643.6 280.6 L642.8 281.9 L641.5 283.7 L639.9 286.2 L637.8 289.3 L635.3 293.0 L632.4 297.3 L629.1 302.2 L626.0 306.9 L623.0 311.5 L620.1 315.8 L617.4 319.9 L614.8 323.8 L612.4 327.5 L610.1 331.0 L608.0 334.3 L606.1 337.2 L604.5 339.6 L603.2 341.7 L602.1 343.3 L601.3 344.6 L600.8 345.4 L600.5 345.8" fill="none" stroke="#cdd0de" stroke-width="3.0" stroke-linecap="round" stroke-linejoin="round" />
<path d="M584.7 280.0 L584.4 280.4 L583.8 281.3 L582.9 282.6 L581.6 284.3 L580.1 286.5 L578.2 289.1 L576.1 292.1 L573.6 295.5 L571.5 298.5 L569.6 301.1 L568.1 303.3 L566.8 305.0 L565.9 306.3 L565.3 307.2 L565.0 307.6" fill="none" stroke="#cdd0de" stroke-width="3.0" stroke-linecap="round" stroke-linejoin="round" />
<path d="M537.8 455.2 L537.4 455.9 L536.6 457.2 L535.5 459.2 L534.0 461.9 L532.0 465.2 L529.7 469.2 L527.0 473.9 L524.0 479.3 L521.3 484.0 L519.0 488.0 L517.0 491.3 L515.5 494.0 L514.4 496.0 L513.6 497.3 L513.2 498.0" fill="none" stroke="#cdd0de" stroke-width="3.0" stroke-linecap="round" stroke-linejoin="round" />
<path d="M522.7 445.8 L523.1 445.4 L523.8 444.7 L524.8 443.7 L526.2 442.3 L528.0 440.5 L530.1 438.4 L532.6 435.9 L535.4 433.0 L537.9 430.5 L540.0 428.4 L541.8 426.6 L543.2 425.2 L544.2 424.2 L544.9 423.5 L545.3 423.1" fill="none" stroke="#cdd0de" stroke-width="3.0" stroke-linecap="round" stroke-linejoin="round" />
<path d="M440.0 355.0 L440.5 355.2 L441.4 355.5 L442.8 355.9 L444.7 356.6 L447.0 357.3 L449.8 358.3 L453.1 359.4 L456.9 360.6 L460.6 361.8 L464.4 362.9 L468.1 363.9 L471.9 364.8 L475.6 365.7 L479.4 366.5 L483.1 367.2 L486.9 367.8 L490.5 368.2 L493.9 368.4 L497.2 368.4 L500.3 368.1 L503.3 367.7 L506.1 367.0 L508.8 366.1 L511.2 364.9 L513.4 364.0 L515.3 363.1 L516.9 362.4 L518.1 361.8 L519.1 361.4 L519.7 361.1 L520.0 361.0" fill="none" stroke="#cdd0de" stroke-width="3.0" stroke-linecap="round" stroke-linejoin="round" />
<path d="M445.0 372.0 L445.4 372.1 L446.2 372.4 L447.3 372.8 L448.9 373.2 L450.9 373.9 L453.2 374.6 L455.9 375.5 L459.1 376.5 L462.3 377.3 L465.5 378.0 L468.9 378.5 L472.3 378.8 L475.9 378.9 L479.5 378.9 L483.1 378.7 L486.9 378.3 L490.6 378.1 L494.4 377.9 L498.1 377.9 L501.9 378.1 L505.6 378.3 L509.4 378.7 L513.1 379.2 L516.9 379.8 L520.5 380.4 L524.0 380.9 L527.4 381.3 L530.6 381.7 L533.8 382.0 L536.8 382.2 L539.6 382.4 L542.4 382.6 L544.8 382.7 L546.8 382.8 L548.6 382.8 L549.9 382.9 L551.0 383.0 L551.7 383.0 L552.0 383.0" fill="none" stroke="#cdd0de" stroke-width="3.0" stroke-linecap="round" stroke-linejoin="round" />
<path d="M360.0 420.0 L360.5 420.1 L361.6 420.3 L363.3 420.6 L365.5 420.9 L368.2 421.4 L371.5 422.0 L375.3 422.6 L379.7 423.4 L383.5 424.0 L386.8 424.6 L389.5 425.1 L391.7 425.4 L393.4 425.7 L394.5 425.9 L395.0 426.0" fill="none" stroke="#cdd0de" stroke-width="3.0" stroke-linecap="round" stroke-linejoin="round" />
<path d="M500.0 385.0 L500.3 385.2 L500.9 385.5 L501.9 386.0 L503.1 386.7 L504.7 387.6 L506.6 388.6 L508.8 389.8 L511.2 391.2 L513.8 392.3 L516.5 393.1 L519.2 393.7 L522.0 394.0 L524.9 394.1 L527.9 393.9 L530.9 393.4 L534.1 392.6 L536.8 392.0 L539.1 391.4 L541.1 390.9 L542.7 390.6 L543.8 390.3 L544.6 390.1 L545.0 390.0" fill="none" stroke="#cdd0de" stroke-width="3.0" stroke-linecap="round" stroke-linejoin="round" />
<path d="M352.0 425.0 L351.7 425.3 L351.0 425.9 L349.9 426.9 L348.6 428.1 L346.8 429.7 L344.8 431.6 L342.4 433.8 L339.6 436.2 L336.8 438.8 L333.8 441.5 L330.6 444.2 L327.4 447.0 L324.0 449.9 L320.5 452.9 L316.9 455.9 L313.1 459.1 L309.4 462.2 L305.6 465.5 L301.9 468.7 L298.1 472.0 L294.4 475.4 L290.6 478.8 L286.9 482.2 L283.1 485.8 L279.8 488.8 L277.0 491.4 L274.7 493.6 L272.8 495.4 L271.4 496.7 L270.5 497.6 L270.0 498.0" fill="none" stroke="#cdd0de" stroke-width="4.4" stroke-linecap="round" stroke-linejoin="round" />
<path d="M370.0 425.0 L370.3 425.1 L370.9 425.3 L371.9 425.7 L373.1 426.1 L374.7 426.6 L376.6 427.3 L378.8 428.1 L381.2 428.9 L383.9 429.7 L386.7 430.4 L389.7 431.0 L392.8 431.5 L396.1 431.9 L399.5 432.2 L403.1 432.4 L406.9 432.6 L410.2 432.7 L413.0 432.8 L415.3 432.8 L417.2 432.9 L418.6 433.0 L419.5 433.0 L420.0 433.0" fill="none" stroke="#cdd0de" stroke-width="4.4" stroke-linecap="round" stroke-linejoin="round" />
<path d="M355.0 408.0 L354.8 407.8 L354.3 407.4 L353.6 406.8 L352.7 406.0 L351.5 405.0 L350.1 403.7 L348.4 402.3 L346.6 400.7 L344.9 399.3 L343.5 398.0 L342.3 397.0 L341.4 396.2 L340.7 395.6 L340.2 395.2 L340.0 395.0" fill="none" stroke="#cdd0de" stroke-width="4.4" stroke-linecap="round" stroke-linejoin="round" />
<path d="M289.7 498.0 L290.5 497.4 L292.2 496.3 L294.6 494.7 L297.9 492.5 L302.0 489.7 L306.9 486.4 L312.6 482.5 L319.1 478.1 L325.2 474.0 L330.8 470.2 L335.9 466.7 L340.5 463.5 L344.7 460.6 L348.4 458.0 L351.6 455.8 L354.4 453.8 L357.0 452.0 L359.6 450.3 L362.1 448.8 L364.4 447.4 L366.7 446.1 L368.9 444.9 L371.0 443.9 L373.0 443.1 L374.8 442.3 L376.2 441.6 L377.5 441.1 L378.5 440.7 L379.2 440.3 L379.8 440.1 L380.0 440.0" fill="none" stroke="#cdd0de" stroke-width="4.4" stroke-linecap="round" stroke-linejoin="round" />
<path d="M360.0 453.4 L360.2 453.2 L360.5 452.9 L361.1 452.3 L361.8 451.6 L362.6 450.7 L363.7 449.7 L364.9 448.4 L366.4 447.0 L368.0 445.5 L369.9 444.1 L372.0 442.5 L374.4 441.0 L377.0 439.4 L379.8 437.8 L382.9 436.2 L386.2 434.6 L389.5 432.9 L392.7 431.3 L396.0 429.6 L399.1 428.0 L402.3 426.3 L405.4 424.7 L408.5 423.0 L411.6 421.4 L414.7 419.7 L417.8 418.0 L421.0 416.2 L424.1 414.5 L427.4 412.7 L430.6 410.9 L433.9 409.0 L437.2 407.1 L440.5 405.3 L443.7 403.5 L447.0 401.8 L450.2 400.1 L453.3 398.5 L456.5 397.0 L459.6 395.5 L462.6 394.0 L465.7 392.7 L468.9 391.5 L472.0 390.5 L475.2 389.5 L478.5 388.7 L481.7 388.0 L485.0 387.4 L488.4 386.9 L491.3 386.5 L493.8 386.2 L495.8 385.9 L497.5 385.6 L498.8 385.5 L499.6 385.4 L500.0 385.3" fill="none" stroke="#cdd0de" stroke-width="4.4" stroke-linecap="round" stroke-linejoin="round" />
<path d="M369.4 445.8 L369.5 445.9 L369.8 446.1 L370.3 446.3 L370.9 446.7 L371.6 447.1 L372.5 447.7 L373.6 448.3 L374.7 449.0 L375.9 449.9 L377.1 451.0 L378.3 452.2 L379.5 453.6 L380.7 455.2 L381.8 457.0 L383.0 458.9 L384.2 461.1 L385.3 463.4 L386.4 465.9 L387.4 468.6 L388.3 471.5 L389.2 474.6 L390.0 477.9 L390.8 481.4 L391.5 485.1 L392.1 488.3 L392.7 491.1 L393.1 493.4 L393.5 495.2 L393.7 496.6 L393.9 497.5 L394.0 498.0" fill="none" stroke="#cdd0de" stroke-width="4.4" stroke-linecap="round" stroke-linejoin="round" />
<path d="M380.8 357.0 L381.1 357.2 L381.6 357.6 L382.4 358.2 L383.5 359.1 L384.8 360.1 L386.4 361.3 L388.2 362.8 L390.4 364.4 L392.5 366.0 L394.7 367.6 L396.9 369.0 L399.2 370.4 L401.4 371.8 L403.7 373.1 L406.1 374.4 L408.4 375.5 L411.3 376.8 L414.6 378.0 L418.3 379.3 L422.6 380.6 L427.3 381.9 L432.5 383.3 L438.2 384.6 L444.3 386.1 L450.2 387.3 L455.9 388.3 L461.3 389.1 L466.5 389.8 L471.5 390.2 L476.3 390.5 L480.8 390.6 L485.0 390.4 L488.8 390.3 L492.0 390.2 L494.7 390.2 L496.8 390.1 L498.4 390.0 L499.5 390.0 L500.0 390.0" fill="none" stroke="#cdd0de" stroke-width="4.4" stroke-linecap="round" stroke-linejoin="round" />
<path d="M500.0 442.0 L500.4 442.1 L501.1 442.2 L502.1 442.4 L503.5 442.6 L505.3 442.9 L507.4 443.2 L509.9 443.7 L512.8 444.1 L515.5 444.7 L518.1 445.4 L520.6 446.3 L522.9 447.2 L525.2 448.3 L527.3 449.4 L529.3 450.7 L531.2 452.2 L533.0 453.7 L534.8 455.3 L536.5 457.1 L538.2 459.0 L539.7 461.0 L541.3 463.1 L542.7 465.4 L544.2 467.7 L545.5 470.1 L546.8 472.6 L548.0 475.1 L549.2 477.7 L550.4 480.3 L551.4 482.9 L552.4 485.6 L553.4 488.4 L554.2 490.8 L554.9 492.8 L555.5 494.6 L556.0 495.9 L556.3 497.0 L556.6 497.7 L556.7 498.0" fill="none" stroke="#cdd0de" stroke-width="4.4" stroke-linecap="round" stroke-linejoin="round" />
<path d="M68.0 311.3 L69.2 311.6 L71.7 312.3 L75.3 313.3 L80.2 314.6 L86.3 316.2 L93.7 318.2 L102.2 320.4 L112.0 323.1 L122.1 325.9 L132.5 328.9 L143.3 332.1 L154.4 335.5 L165.8 339.1 L177.5 343.0 L189.6 347.0 L202.0 351.2 L213.5 354.9 L224.2 358.0 L234.1 360.5 L243.0 362.4 L251.1 363.8 L258.4 364.7 L264.8 364.9 L270.3 364.6 L275.8 364.5 L281.1 364.6 L286.4 364.9 L291.7 365.4 L296.8 366.1 L301.8 367.0 L306.8 368.1 L311.7 369.4 L316.3 371.0 L320.7 372.8 L324.9 374.8 L328.8 377.1 L332.4 379.6 L335.8 382.4 L338.9 385.4 L341.8 388.6 L344.4 391.5 L346.6 393.9 L348.4 395.9 L349.8 397.6 L350.9 398.8 L351.6 399.6 L352.0 400.0" fill="none" stroke="#cdd0de" stroke-width="6.4" stroke-linecap="round" stroke-linejoin="round" />
<path d="M250.6 280.0 L251.6 280.5 L253.7 281.5 L256.7 282.9 L260.8 284.9 L265.9 287.3 L272.0 290.3 L279.1 293.7 L287.3 297.6 L295.2 301.6 L302.8 305.6 L310.1 309.6 L317.2 313.7 L324.0 317.8 L330.6 321.9 L336.9 326.1 L342.9 330.4 L348.4 334.3 L353.5 337.8 L358.0 341.0 L362.1 343.9 L365.7 346.4 L368.8 348.5 L371.3 350.4 L373.5 351.8 L375.3 353.1 L376.9 354.2 L378.2 355.2 L379.2 355.9 L380.0 356.4 L380.5 356.8 L380.8 357.0" fill="none" stroke="#cdd0de" stroke-width="6.4" stroke-linecap="round" stroke-linejoin="round" />
<path d="M124.0 280.0 L123.9 280.2 L123.8 280.7 L123.6 281.5 L123.4 282.4 L123.1 283.7 L122.8 285.1 L122.3 286.8 L121.9 288.8 L121.1 290.8 L120.0 292.8 L118.6 294.9 L116.9 297.0 L114.9 299.2 L112.5 301.4 L109.9 303.6 L107.0 306.0 L104.4 308.0 L102.2 309.7 L100.4 311.1 L98.9 312.3 L97.8 313.1 L97.1 313.7 L96.7 314.0" fill="none" stroke="#ffffff" stroke-width="2.1" stroke-linecap="round" stroke-linejoin="round" />
<path d="M130.6 280.0 L131.0 280.8 L131.7 282.4 L132.8 284.9 L134.3 288.2 L136.1 292.2 L138.3 297.1 L140.8 302.8 L143.8 309.4 L146.9 315.8 L150.1 322.3 L153.5 328.7 L157.1 335.0 L160.9 341.4 L164.8 347.6 L168.9 353.9 L173.1 360.0 L176.8 365.5 L180.0 370.1 L182.7 374.0 L184.8 377.1 L186.4 379.4 L187.5 380.9 L188.0 381.7" fill="none" stroke="#ffffff" stroke-width="2.1" stroke-linecap="round" stroke-linejoin="round" />
<path d="M83.6 316.5 L84.1 317.0 L85.1 318.1 L86.5 319.7 L88.5 321.8 L91.0 324.4 L93.9 327.6 L97.3 331.3 L101.3 335.6 L105.2 339.6 L109.1 343.6 L113.0 347.3 L116.9 350.9 L120.8 354.3 L124.7 357.6 L128.6 360.7 L132.5 363.7 L137.0 366.4 L141.9 369.0 L147.4 371.3 L153.5 373.4 L160.0 375.3 L167.1 377.0 L174.8 378.5 L182.9 379.8 L190.5 380.8 L197.5 381.6 L204.0 382.2 L209.8 382.5 L215.1 382.6 L219.8 382.4 L224.0 382.0 L227.5 381.3 L230.6 380.7 L233.3 380.2 L235.5 379.8 L237.3 379.5 L238.7 379.2 L239.6 379.1 L240.0 379.0" fill="none" stroke="#ffffff" stroke-width="2.1" stroke-linecap="round" stroke-linejoin="round" />
<path d="M141.0 374.0 L141.7 374.6 L143.1 376.0 L145.2 377.9 L147.9 380.5 L151.4 383.7 L155.6 387.6 L160.4 392.2 L166.0 397.4 L171.5 402.7 L177.1 408.1 L182.6 413.5 L188.2 419.0 L193.7 424.7 L199.2 430.4 L204.8 436.2 L210.3 442.0 L215.2 447.7 L219.6 453.2 L223.3 458.6 L226.4 463.7 L228.9 468.7 L230.7 473.5 L232.0 478.1 L232.7 482.5 L233.3 486.4 L233.8 489.7 L234.2 492.5 L234.5 494.7 L234.8 496.3 L234.9 497.4 L235.0 498.0" fill="none" stroke="#ffffff" stroke-width="2.1" stroke-linecap="round" stroke-linejoin="round" />
<path d="M235.0 379.0 L235.1 379.6 L235.4 380.8 L235.7 382.7 L236.2 385.1 L236.8 388.2 L237.6 391.9 L238.4 396.2 L239.4 401.0 L240.2 405.3 L241.0 409.0 L241.6 412.1 L242.1 414.5 L242.4 416.4 L242.7 417.6 L242.8 418.2" fill="none" stroke="#ffffff" stroke-width="2.1" stroke-linecap="round" stroke-linejoin="round" />
<path d="M68.0 420.8 L68.7 420.8 L70.0 420.8 L71.9 420.8 L74.5 420.8 L77.8 420.8 L81.7 420.8 L86.2 420.8 L91.5 420.8 L96.6 420.8 L101.6 420.7 L106.6 420.6 L111.5 420.4 L116.3 420.2 L121.0 419.9 L125.7 419.7 L130.2 419.3 L135.4 419.0 L141.3 418.7 L147.8 418.4 L155.0 418.0 L162.8 417.7 L171.3 417.4 L180.5 417.1 L190.2 416.7 L199.6 416.6 L208.6 416.7 L217.2 417.0 L225.3 417.5 L233.1 418.2 L240.4 419.1 L247.3 420.1 L253.9 421.4 L260.2 422.8 L266.3 424.3 L272.2 425.8 L277.9 427.5 L283.4 429.2 L288.7 431.0 L293.8 432.9 L298.7 434.8 L303.5 436.3 L308.2 437.3 L312.9 437.8 L317.4 437.8 L321.9 437.3 L326.3 436.3 L330.6 434.8 L334.9 432.9 L338.6 431.2 L341.8 429.7 L344.4 428.5 L346.5 427.5 L348.1 426.7 L349.2 426.2 L349.7 426.0" fill="none" stroke="#ffffff" stroke-width="2.1" stroke-linecap="round" stroke-linejoin="round" />
<path d="M229.7 462.6 L230.6 462.5 L232.5 462.4 L235.3 462.1 L239.1 461.8 L243.8 461.4 L249.4 460.9 L255.9 460.3 L263.4 459.7 L270.6 458.9 L277.5 457.9 L284.0 456.7 L290.2 455.4 L296.1 454.0 L301.6 452.3 L306.8 450.5 L311.7 448.6 L316.3 446.6 L320.7 444.6 L324.9 442.7 L328.8 440.7 L332.4 438.8 L335.8 436.8 L338.9 434.8 L341.8 432.9 L344.4 431.2 L346.6 429.7 L348.4 428.5 L349.8 427.5 L350.9 426.7 L351.6 426.2 L352.0 426.0" fill="none" stroke="#ffffff" stroke-width="2.1" stroke-linecap="round" stroke-linejoin="round" />
<path d="M240.0 400.0 L240.8 399.9 L242.3 399.6 L244.7 399.2 L247.8 398.8 L251.6 398.1 L256.3 397.4 L261.7 396.5 L268.0 395.5 L273.8 395.0 L279.1 395.0 L284.1 395.5 L288.7 396.4 L292.8 397.9 L296.6 399.9 L299.9 402.3 L302.8 405.3 L305.3 408.3 L307.3 411.3 L308.9 414.4 L310.0 417.5 L310.7 420.6 L311.0 423.8 L310.8 427.0 L310.2 430.3 L309.6 433.1 L309.2 435.6 L308.8 437.6 L308.5 439.3 L308.2 440.5 L308.1 441.3 L308.0 441.7" fill="none" stroke="#ffffff" stroke-width="2.1" stroke-linecap="round" stroke-linejoin="round" />
<path d="M68.0 452.0 L68.4 451.7 L69.2 451.0 L70.4 450.1 L72.1 448.8 L74.1 447.1 L76.5 445.2 L79.4 442.9 L82.6 440.4 L85.7 437.9 L88.6 435.7 L91.4 433.6 L94.0 431.6 L96.5 429.8 L98.7 428.2 L100.9 426.7 L102.8 425.4 L104.5 424.2 L106.0 423.3 L107.2 422.4 L108.2 421.8 L109.0 421.3 L109.5 421.0 L109.7 420.8" fill="none" stroke="#ffffff" stroke-width="2.1" stroke-linecap="round" stroke-linejoin="round" />
<path d="M334.0 478.0 L334.5 477.7 L335.4 477.0 L336.8 476.0 L338.7 474.7 L341.0 473.1 L343.8 471.1 L347.1 468.8 L350.9 466.2 L354.2 463.9 L357.0 461.9 L359.3 460.3 L361.2 459.0 L362.6 458.0 L363.5 457.3 L364.0 457.0" fill="none" stroke="#ffffff" stroke-width="2.1" stroke-linecap="round" stroke-linejoin="round" />
<path d="M294.9 280.0 L296.0 280.6 L298.1 281.7 L301.4 283.4 L305.7 285.7 L311.1 288.6 L317.6 292.0 L325.1 296.0 L333.8 300.5 L341.9 304.9 L349.4 309.0 L356.4 312.9 L362.8 316.6 L368.7 320.1 L374.0 323.3 L378.8 326.3 L383.1 329.2 L387.1 331.8 L390.9 334.3 L394.4 336.6 L397.8 338.8 L400.9 340.8 L403.8 342.6 L406.5 344.2 L409.0 345.8 L411.8 347.1 L414.8 348.2 L418.2 349.1 L421.9 349.9 L425.9 350.4 L430.2 350.8 L434.8 351.0 L439.8 351.0 L444.1 351.0 L447.8 351.0 L450.8 351.0 L453.3 351.0 L455.2 351.0 L456.4 351.0 L457.0 351.0" fill="none" stroke="#ffffff" stroke-width="2.1" stroke-linecap="round" stroke-linejoin="round" />
<path d="M314.5 280.0 L314.5 280.4 L314.4 281.1 L314.3 282.2 L314.1 283.7 L313.9 285.5 L313.6 287.7 L313.4 290.3 L313.0 293.2 L312.3 296.3 L311.1 299.6 L309.5 303.0 L307.5 306.6 L305.0 310.3 L302.1 314.3 L298.8 318.3 L295.0 322.6 L291.2 326.7 L287.2 330.8 L283.2 334.8 L279.0 338.7 L274.8 342.5 L270.4 346.3 L265.9 349.9 L261.4 353.5 L257.4 356.6 L254.0 359.3 L251.1 361.5 L248.8 363.3 L247.1 364.7 L246.0 365.6 L245.4 366.0" fill="none" stroke="#ffffff" stroke-width="2.1" stroke-linecap="round" stroke-linejoin="round" />
<path d="M210.0 436.0 L210.3 436.3 L210.9 436.8 L211.8 437.6 L213.0 438.6 L214.5 439.9 L216.2 441.4 L218.3 443.3 L220.7 445.3 L222.8 447.4 L224.7 449.3 L226.3 451.3 L227.6 453.1 L228.7 455.0 L229.6 456.7 L230.1 458.5 L230.5 460.1 L230.5 462.1 L230.1 464.4 L229.4 466.9 L228.4 469.7 L227.0 472.9 L225.4 476.3 L223.3 480.0 L221.0 484.0 L218.9 487.5 L217.1 490.5 L215.7 493.0 L214.5 495.0 L213.6 496.5 L213.0 497.5 L212.7 498.0" fill="none" stroke="#ffffff" stroke-width="2.1" stroke-linecap="round" stroke-linejoin="round" />
<path d="M364.0 332.2 L364.6 332.4 L365.7 332.8 L367.4 333.4 L369.7 334.2 L372.6 335.2 L376.0 336.5 L380.0 337.9 L384.5 339.5 L389.0 341.1 L393.3 342.7 L397.5 344.2 L401.5 345.7 L405.5 347.1 L409.3 348.5 L413.0 349.9 L416.5 351.3 L419.6 352.5 L422.3 353.5 L424.5 354.3 L426.3 355.0 L427.7 355.5 L428.6 355.8 L429.0 356.0" fill="none" stroke="#ffffff" stroke-width="2.1" stroke-linecap="round" stroke-linejoin="round" />
<path d="M400.5 300.9 L400.5 301.3 L400.4 302.1 L400.3 303.3 L400.1 305.0 L399.9 307.0 L399.6 309.5 L399.4 312.3 L399.0 315.6 L399.0 318.8 L399.4 321.9 L400.0 324.9 L401.0 327.8 L402.3 330.7 L403.9 333.4 L405.9 336.1 L408.2 338.7 L410.8 341.3 L413.6 343.8 L416.8 346.3 L420.2 348.7 L423.9 351.1 L427.9 353.4 L432.2 355.8 L436.7 358.0 L440.7 360.0 L444.1 361.7 L447.0 363.2 L449.3 364.3 L451.0 365.1 L452.1 365.7 L452.7 366.0" fill="none" stroke="#ffffff" stroke-width="2.1" stroke-linecap="round" stroke-linejoin="round" />
<path d="M388.3 340.0 L388.6 340.1 L389.2 340.4 L390.1 340.7 L391.3 341.2 L392.7 341.8 L394.5 342.5 L396.6 343.3 L398.9 344.3 L401.4 345.2 L403.8 346.0 L406.4 346.8 L409.0 347.5 L411.7 348.1 L414.4 348.7 L417.2 349.2 L420.0 349.7 L422.5 350.1 L424.7 350.4 L426.4 350.7 L427.9 351.0 L428.9 351.1 L429.6 351.2 L430.0 351.3" fill="none" stroke="#ffffff" stroke-width="2.1" stroke-linecap="round" stroke-linejoin="round" />
<path d="M435.6 374.0 L435.7 374.4 L435.8 375.1 L436.0 376.1 L436.2 377.5 L436.5 379.3 L436.8 381.4 L437.3 383.9 L437.7 386.8 L438.2 389.3 L438.5 391.4 L438.8 393.2 L439.0 394.6 L439.2 395.6 L439.3 396.3 L439.4 396.7" fill="none" stroke="#ffffff" stroke-width="2.1" stroke-linecap="round" stroke-linejoin="round" />
<path d="M378.9 451.5 L379.3 451.6 L380.2 451.7 L381.6 451.8 L383.3 452.1 L385.5 452.4 L388.2 452.7 L391.3 453.1 L394.8 453.6 L398.6 454.1 L402.6 454.6 L406.9 455.2 L411.3 455.8 L416.1 456.4 L421.0 457.0 L426.2 457.7 L431.7 458.5 L436.9 459.2 L442.0 460.0 L446.9 460.8 L451.6 461.6 L456.2 462.5 L460.6 463.4 L464.7 464.3 L468.8 465.2 L472.3 466.0 L475.3 466.7 L477.8 467.3 L479.8 467.8 L481.3 468.1 L482.3 468.4 L482.8 468.5" fill="none" stroke="#ffffff" stroke-width="2.1" stroke-linecap="round" stroke-linejoin="round" />
<path d="M407.2 455.2 L407.3 455.0 L407.6 454.6 L408.1 454.0 L408.7 453.1 L409.4 452.1 L410.3 450.9 L411.4 449.4 L412.5 447.8 L413.8 446.2 L415.1 444.6 L416.5 443.1 L417.9 441.7 L419.4 440.3 L420.9 438.9 L422.5 437.6 L424.2 436.4 L425.6 435.3 L426.9 434.3 L427.9 433.6 L428.8 432.9 L429.4 432.5 L429.8 432.2 L430.0 432.0" fill="none" stroke="#ffffff" stroke-width="2.1" stroke-linecap="round" stroke-linejoin="round" />
<path d="M360.0 476.0 L360.3 475.9 L360.9 475.6 L361.8 475.3 L363.0 474.8 L364.4 474.2 L366.2 473.5 L368.3 472.7 L370.6 471.8 L373.3 471.0 L376.2 470.4 L379.5 470.0 L383.0 469.8 L386.9 469.7 L391.0 469.8 L395.4 470.1 L400.2 470.6 L404.9 471.1 L409.6 471.7 L414.3 472.3 L419.1 473.0 L423.8 473.8 L428.5 474.6 L433.2 475.5 L438.0 476.5 L442.4 477.4 L446.5 478.2 L450.4 479.0 L453.9 479.7 L457.2 480.3 L460.1 480.9 L462.8 481.5 L465.1 481.9 L467.2 482.4 L469.0 482.7 L470.4 483.0 L471.6 483.2 L472.5 483.4 L473.1 483.5 L473.4 483.6" fill="none" stroke="#ffffff" stroke-width="2.1" stroke-linecap="round" stroke-linejoin="round" />
<path d="M465.8 327.4 L465.8 327.8 L465.7 328.5 L465.7 329.7 L465.6 331.2 L465.5 333.1 L465.3 335.4 L465.2 338.1 L465.0 341.1 L464.8 344.5 L464.6 348.3 L464.3 352.5 L464.1 357.0 L463.8 362.0 L463.5 367.2 L463.1 372.9 L462.8 378.9 L462.5 384.2 L462.2 388.7 L462.0 392.5 L461.8 395.5 L461.6 397.7 L461.5 399.2 L461.5 400.0" fill="none" stroke="#ffffff" stroke-width="2.1" stroke-linecap="round" stroke-linejoin="round" />
<path d="M483.0 326.0 L483.1 326.4 L483.3 327.2 L483.5 328.4 L483.9 330.0 L484.4 332.0 L484.9 334.5 L485.5 337.3 L486.3 340.5 L486.9 344.1 L487.5 348.0 L488.0 352.3 L488.5 356.9 L488.9 361.9 L489.2 367.2 L489.5 372.9 L489.6 378.9 L489.8 384.2 L489.9 388.7 L490.1 392.5 L490.2 395.5 L490.2 397.7 L490.3 399.2 L490.3 400.0" fill="none" stroke="#ffffff" stroke-width="2.1" stroke-linecap="round" stroke-linejoin="round" />
<path d="M440.0 341.7 L440.4 341.7 L441.2 341.6 L442.4 341.6 L444.0 341.5 L446.0 341.4 L448.5 341.2 L451.3 341.1 L454.5 340.9 L457.3 340.8 L459.8 340.6 L461.8 340.5 L463.4 340.4 L464.6 340.4 L465.4 340.3 L465.8 340.3" fill="none" stroke="#ffffff" stroke-width="2.1" stroke-linecap="round" stroke-linejoin="round" />
<path d="M498.9 346.0 L499.1 345.8 L499.5 345.3 L500.1 344.5 L500.9 343.5 L501.9 342.3 L503.1 340.8 L504.5 339.1 L506.2 337.2 L507.7 335.2 L509.2 333.3 L510.6 331.4 L511.9 329.5 L513.2 327.7 L514.4 325.9 L515.6 324.0 L516.6 322.3 L517.6 320.7 L518.4 319.4 L519.1 318.2 L519.6 317.3 L520.0 316.7 L520.3 316.2 L520.4 316.0" fill="none" stroke="#ffffff" stroke-width="2.1" stroke-linecap="round" stroke-linejoin="round" />
<path d="M520.4 280.0 L520.5 280.2 L520.6 280.7 L520.8 281.4 L521.1 282.2 L521.4 283.4 L521.8 284.7 L522.3 286.3 L522.8 288.1 L523.2 290.0 L523.5 292.0 L523.6 294.2 L523.6 296.4 L523.4 298.8 L523.1 301.3 L522.6 303.9 L522.1 306.5 L521.5 308.9 L521.1 310.9 L520.7 312.6 L520.4 314.0 L520.2 315.0 L520.1 315.7 L520.0 316.0" fill="none" stroke="#ffffff" stroke-width="2.1" stroke-linecap="round" stroke-linejoin="round" />
<path d="M526.2 340.3 L526.4 340.0 L526.9 339.4 L527.5 338.4 L528.4 337.2 L529.6 335.6 L530.9 333.7 L532.5 331.5 L534.2 329.0 L535.9 326.4 L537.3 323.7 L538.5 320.9 L539.6 318.1 L540.5 315.1 L541.2 312.0 L541.8 308.9 L542.1 305.7 L542.4 302.9 L542.7 300.4 L542.9 298.4 L543.1 296.8 L543.3 295.6 L543.4 294.8 L543.4 294.4" fill="none" stroke="#ffffff" stroke-width="2.1" stroke-linecap="round" stroke-linejoin="round" />
<path d="M520.4 360.4 L520.7 360.4 L521.3 360.5 L522.3 360.7 L523.5 360.9 L525.1 361.1 L527.0 361.4 L529.2 361.7 L531.7 362.0 L534.5 362.4 L537.6 362.8 L541.1 363.3 L544.8 363.8 L548.8 364.3 L553.1 364.8 L557.8 365.4 L562.7 365.9 L567.0 366.5 L570.7 366.9 L573.8 367.3 L576.3 367.6 L578.1 367.8 L579.4 367.9 L580.0 368.0" fill="none" stroke="#ffffff" stroke-width="2.1" stroke-linecap="round" stroke-linejoin="round" />
<path d="M543.4 313.0 L544.0 313.1 L545.1 313.2 L546.8 313.4 L549.1 313.7 L552.0 314.0 L555.4 314.4 L559.4 314.9 L564.0 315.4 L568.6 316.0 L573.3 316.7 L578.0 317.4 L582.8 318.1 L587.7 318.9 L592.6 319.8 L597.5 320.7 L602.5 321.6 L607.5 322.7 L612.5 323.8 L617.5 324.9 L622.5 326.2 L627.5 327.5 L632.5 328.8 L637.5 330.2 L642.5 331.8 L646.9 333.1 L650.6 334.2 L653.8 335.1 L656.2 335.9 L658.1 336.4 L659.4 336.8 L660.0 337.0" fill="none" stroke="#ffffff" stroke-width="2.1" stroke-linecap="round" stroke-linejoin="round" />
<path d="M565.0 301.5 L565.2 301.3 L565.7 300.8 L566.4 300.0 L567.3 299.0 L568.5 297.8 L569.9 296.3 L571.6 294.6 L573.4 292.6 L575.1 290.9 L576.5 289.4 L577.7 288.2 L578.6 287.2 L579.3 286.4 L579.8 285.9 L580.0 285.7" fill="none" stroke="#ffffff" stroke-width="2.1" stroke-linecap="round" stroke-linejoin="round" />
<path d="M520.4 360.4 L520.4 361.0 L520.3 362.3 L520.1 364.1 L519.9 366.6 L519.7 369.7 L519.4 373.4 L519.1 377.7 L518.8 382.7 L518.3 387.5 L517.8 392.1 L517.2 396.6 L516.6 401.0 L515.9 405.2 L515.1 409.2 L514.2 413.1 L513.3 416.9 L512.5 420.2 L511.8 423.0 L511.2 425.3 L510.7 427.2 L510.4 428.6 L510.1 429.5 L510.0 430.0" fill="none" stroke="#ffffff" stroke-width="2.1" stroke-linecap="round" stroke-linejoin="round" />
<path d="M480.9 387.2 L480.9 387.7 L480.9 388.7 L480.9 390.2 L480.9 392.2 L480.9 394.7 L480.9 397.8 L480.9 401.3 L480.9 405.3 L480.9 409.5 L480.8 413.8 L480.6 418.2 L480.4 422.7 L480.2 427.4 L479.9 432.2 L479.6 437.2 L479.3 442.2 L478.9 447.3 L478.6 452.3 L478.3 457.2 L478.0 462.1 L477.7 467.0 L477.4 471.8 L477.1 476.6 L476.9 481.4 L476.7 485.5 L476.5 489.1 L476.3 492.1 L476.2 494.4 L476.1 496.2 L476.0 497.4 L476.0 498.0" fill="none" stroke="#ffffff" stroke-width="2.1" stroke-linecap="round" stroke-linejoin="round" />
<path d="M551.0 396.7 L550.9 397.1 L550.6 397.8 L550.1 398.8 L549.5 400.2 L548.8 402.0 L547.9 404.1 L546.9 406.6 L545.7 409.4 L544.6 412.4 L543.6 415.6 L542.7 419.0 L541.9 422.5 L541.2 426.2 L540.5 430.1 L539.9 434.2 L539.5 438.4 L539.0 442.1 L538.7 445.3 L538.4 448.0 L538.2 450.1 L538.0 451.7 L537.9 452.8 L537.8 453.3" fill="none" stroke="#ffffff" stroke-width="2.1" stroke-linecap="round" stroke-linejoin="round" />
<path d="M613.3 374.0 L613.4 374.4 L613.5 375.1 L613.7 376.1 L613.9 377.5 L614.2 379.3 L614.5 381.4 L615.0 383.9 L615.4 386.8 L616.0 389.7 L616.6 392.6 L617.2 395.6 L617.9 398.7 L618.7 401.8 L619.5 405.0 L620.4 408.2 L621.4 411.6 L622.5 414.6 L623.8 417.3 L625.3 419.7 L626.9 421.8 L628.8 423.6 L630.8 425.2 L633.0 426.4 L635.3 427.4 L637.7 428.2 L639.9 428.8 L642.2 429.3 L644.4 429.7 L646.6 429.9 L648.7 430.0 L650.8 429.9 L652.8 429.6 L654.6 429.4 L656.2 429.2 L657.4 429.1 L658.5 429.0 L659.2 428.9 L659.7 428.8 L660.0 428.8" fill="none" stroke="#ffffff" stroke-width="2.1" stroke-linecap="round" stroke-linejoin="round" />
<path d="M624.7 423.1 L624.8 423.5 L625.1 424.2 L625.4 425.2 L625.9 426.6 L626.5 428.4 L627.2 430.5 L628.0 433.0 L628.9 435.9 L630.2 438.2 L631.7 440.1 L633.6 441.5 L635.8 442.5 L638.4 443.0 L641.2 443.0 L644.4 442.5 L647.8 441.5 L650.9 440.7 L653.5 440.0 L655.7 439.4 L657.4 438.9 L658.7 438.6 L659.6 438.3 L660.0 438.2" fill="none" stroke="#ffffff" stroke-width="2.1" stroke-linecap="round" stroke-linejoin="round" />
<path d="M620.9 449.6 L621.5 449.6 L622.7 449.7 L624.6 449.8 L627.0 450.0 L630.1 450.2 L633.7 450.4 L638.0 450.6 L642.9 450.9 L647.2 451.2 L650.8 451.4 L653.9 451.6 L656.3 451.8 L658.2 451.9 L659.4 452.0 L660.0 452.0" fill="none" stroke="#ffffff" stroke-width="2.1" stroke-linecap="round" stroke-linejoin="round" />
<path d="M602.0 340.0 L601.8 340.3 L601.5 340.9 L600.9 341.8 L600.2 343.0 L599.4 344.4 L598.3 346.2 L597.1 348.3 L595.6 350.6 L594.4 352.7 L593.3 354.5 L592.5 355.9 L591.8 357.1 L591.2 358.0 L590.9 358.6 L590.7 358.9" fill="none" stroke="#ffffff" stroke-width="2.1" stroke-linecap="round" stroke-linejoin="round" />
<path d="M644.0 280.0 L643.6 280.6 L642.8 281.9 L641.5 283.7 L639.9 286.2 L637.8 289.3 L635.3 293.0 L632.4 297.3 L629.1 302.2 L626.0 306.9 L623.0 311.5 L620.1 315.8 L617.4 319.9 L614.8 323.8 L612.4 327.5 L610.1 331.0 L608.0 334.3 L606.1 337.2 L604.5 339.6 L603.2 341.7 L602.1 343.3 L601.3 344.6 L600.8 345.4 L600.5 345.8" fill="none" stroke="#ffffff" stroke-width="2.1" stroke-linecap="round" stroke-linejoin="round" />
<path d="M584.7 280.0 L584.4 280.4 L583.8 281.3 L582.9 282.6 L581.6 284.3 L580.1 286.5 L578.2 289.1 L576.1 292.1 L573.6 295.5 L571.5 298.5 L569.6 301.1 L568.1 303.3 L566.8 305.0 L565.9 306.3 L565.3 307.2 L565.0 307.6" fill="none" stroke="#ffffff" stroke-width="2.1" stroke-linecap="round" stroke-linejoin="round" />
<path d="M537.8 455.2 L537.4 455.9 L536.6 457.2 L535.5 459.2 L534.0 461.9 L532.0 465.2 L529.7 469.2 L527.0 473.9 L524.0 479.3 L521.3 484.0 L519.0 488.0 L517.0 491.3 L515.5 494.0 L514.4 496.0 L513.6 497.3 L513.2 498.0" fill="none" stroke="#ffffff" stroke-width="2.1" stroke-linecap="round" stroke-linejoin="round" />
<path d="M522.7 445.8 L523.1 445.4 L523.8 444.7 L524.8 443.7 L526.2 442.3 L528.0 440.5 L530.1 438.4 L532.6 435.9 L535.4 433.0 L537.9 430.5 L540.0 428.4 L541.8 426.6 L543.2 425.2 L544.2 424.2 L544.9 423.5 L545.3 423.1" fill="none" stroke="#ffffff" stroke-width="2.1" stroke-linecap="round" stroke-linejoin="round" />
<path d="M440.0 355.0 L440.5 355.2 L441.4 355.5 L442.8 355.9 L444.7 356.6 L447.0 357.3 L449.8 358.3 L453.1 359.4 L456.9 360.6 L460.6 361.8 L464.4 362.9 L468.1 363.9 L471.9 364.8 L475.6 365.7 L479.4 366.5 L483.1 367.2 L486.9 367.8 L490.5 368.2 L493.9 368.4 L497.2 368.4 L500.3 368.1 L503.3 367.7 L506.1 367.0 L508.8 366.1 L511.2 364.9 L513.4 364.0 L515.3 363.1 L516.9 362.4 L518.1 361.8 L519.1 361.4 L519.7 361.1 L520.0 361.0" fill="none" stroke="#ffffff" stroke-width="2.1" stroke-linecap="round" stroke-linejoin="round" />
<path d="M445.0 372.0 L445.4 372.1 L446.2 372.4 L447.3 372.8 L448.9 373.2 L450.9 373.9 L453.2 374.6 L455.9 375.5 L459.1 376.5 L462.3 377.3 L465.5 378.0 L468.9 378.5 L472.3 378.8 L475.9 378.9 L479.5 378.9 L483.1 378.7 L486.9 378.3 L490.6 378.1 L494.4 377.9 L498.1 377.9 L501.9 378.1 L505.6 378.3 L509.4 378.7 L513.1 379.2 L516.9 379.8 L520.5 380.4 L524.0 380.9 L527.4 381.3 L530.6 381.7 L533.8 382.0 L536.8 382.2 L539.6 382.4 L542.4 382.6 L544.8 382.7 L546.8 382.8 L548.6 382.8 L549.9 382.9 L551.0 383.0 L551.7 383.0 L552.0 383.0" fill="none" stroke="#ffffff" stroke-width="2.1" stroke-linecap="round" stroke-linejoin="round" />
<path d="M360.0 420.0 L360.5 420.1 L361.6 420.3 L363.3 420.6 L365.5 420.9 L368.2 421.4 L371.5 422.0 L375.3 422.6 L379.7 423.4 L383.5 424.0 L386.8 424.6 L389.5 425.1 L391.7 425.4 L393.4 425.7 L394.5 425.9 L395.0 426.0" fill="none" stroke="#ffffff" stroke-width="2.1" stroke-linecap="round" stroke-linejoin="round" />
<path d="M500.0 385.0 L500.3 385.2 L500.9 385.5 L501.9 386.0 L503.1 386.7 L504.7 387.6 L506.6 388.6 L508.8 389.8 L511.2 391.2 L513.8 392.3 L516.5 393.1 L519.2 393.7 L522.0 394.0 L524.9 394.1 L527.9 393.9 L530.9 393.4 L534.1 392.6 L536.8 392.0 L539.1 391.4 L541.1 390.9 L542.7 390.6 L543.8 390.3 L544.6 390.1 L545.0 390.0" fill="none" stroke="#ffffff" stroke-width="2.1" stroke-linecap="round" stroke-linejoin="round" />
<path d="M352.0 425.0 L351.7 425.3 L351.0 425.9 L349.9 426.9 L348.6 428.1 L346.8 429.7 L344.8 431.6 L342.4 433.8 L339.6 436.2 L336.8 438.8 L333.8 441.5 L330.6 444.2 L327.4 447.0 L324.0 449.9 L320.5 452.9 L316.9 455.9 L313.1 459.1 L309.4 462.2 L305.6 465.5 L301.9 468.7 L298.1 472.0 L294.4 475.4 L290.6 478.8 L286.9 482.2 L283.1 485.8 L279.8 488.8 L277.0 491.4 L274.7 493.6 L272.8 495.4 L271.4 496.7 L270.5 497.6 L270.0 498.0" fill="none" stroke="#ffffff" stroke-width="3.4" stroke-linecap="round" stroke-linejoin="round" />
<path d="M370.0 425.0 L370.3 425.1 L370.9 425.3 L371.9 425.7 L373.1 426.1 L374.7 426.6 L376.6 427.3 L378.8 428.1 L381.2 428.9 L383.9 429.7 L386.7 430.4 L389.7 431.0 L392.8 431.5 L396.1 431.9 L399.5 432.2 L403.1 432.4 L406.9 432.6 L410.2 432.7 L413.0 432.8 L415.3 432.8 L417.2 432.9 L418.6 433.0 L419.5 433.0 L420.0 433.0" fill="none" stroke="#ffffff" stroke-width="3.4" stroke-linecap="round" stroke-linejoin="round" />
<path d="M355.0 408.0 L354.8 407.8 L354.3 407.4 L353.6 406.8 L352.7 406.0 L351.5 405.0 L350.1 403.7 L348.4 402.3 L346.6 400.7 L344.9 399.3 L343.5 398.0 L342.3 397.0 L341.4 396.2 L340.7 395.6 L340.2 395.2 L340.0 395.0" fill="none" stroke="#ffffff" stroke-width="3.4" stroke-linecap="round" stroke-linejoin="round" />
<path d="M289.7 498.0 L290.5 497.4 L292.2 496.3 L294.6 494.7 L297.9 492.5 L302.0 489.7 L306.9 486.4 L312.6 482.5 L319.1 478.1 L325.2 474.0 L330.8 470.2 L335.9 466.7 L340.5 463.5 L344.7 460.6 L348.4 458.0 L351.6 455.8 L354.4 453.8 L357.0 452.0 L359.6 450.3 L362.1 448.8 L364.4 447.4 L366.7 446.1 L368.9 444.9 L371.0 443.9 L373.0 443.1 L374.8 442.3 L376.2 441.6 L377.5 441.1 L378.5 440.7 L379.2 440.3 L379.8 440.1 L380.0 440.0" fill="none" stroke="#ffffff" stroke-width="3.4" stroke-linecap="round" stroke-linejoin="round" />
<path d="M360.0 453.4 L360.2 453.2 L360.5 452.9 L361.1 452.3 L361.8 451.6 L362.6 450.7 L363.7 449.7 L364.9 448.4 L366.4 447.0 L368.0 445.5 L369.9 444.1 L372.0 442.5 L374.4 441.0 L377.0 439.4 L379.8 437.8 L382.9 436.2 L386.2 434.6 L389.5 432.9 L392.7 431.3 L396.0 429.6 L399.1 428.0 L402.3 426.3 L405.4 424.7 L408.5 423.0 L411.6 421.4 L414.7 419.7 L417.8 418.0 L421.0 416.2 L424.1 414.5 L427.4 412.7 L430.6 410.9 L433.9 409.0 L437.2 407.1 L440.5 405.3 L443.7 403.5 L447.0 401.8 L450.2 400.1 L453.3 398.5 L456.5 397.0 L459.6 395.5 L462.6 394.0 L465.7 392.7 L468.9 391.5 L472.0 390.5 L475.2 389.5 L478.5 388.7 L481.7 388.0 L485.0 387.4 L488.4 386.9 L491.3 386.5 L493.8 386.2 L495.8 385.9 L497.5 385.6 L498.8 385.5 L499.6 385.4 L500.0 385.3" fill="none" stroke="#ffffff" stroke-width="3.4" stroke-linecap="round" stroke-linejoin="round" />
<path d="M369.4 445.8 L369.5 445.9 L369.8 446.1 L370.3 446.3 L370.9 446.7 L371.6 447.1 L372.5 447.7 L373.6 448.3 L374.7 449.0 L375.9 449.9 L377.1 451.0 L378.3 452.2 L379.5 453.6 L380.7 455.2 L381.8 457.0 L383.0 458.9 L384.2 461.1 L385.3 463.4 L386.4 465.9 L387.4 468.6 L388.3 471.5 L389.2 474.6 L390.0 477.9 L390.8 481.4 L391.5 485.1 L392.1 488.3 L392.7 491.1 L393.1 493.4 L393.5 495.2 L393.7 496.6 L393.9 497.5 L394.0 498.0" fill="none" stroke="#ffffff" stroke-width="3.4" stroke-linecap="round" stroke-linejoin="round" />
<path d="M380.8 357.0 L381.1 357.2 L381.6 357.6 L382.4 358.2 L383.5 359.1 L384.8 360.1 L386.4 361.3 L388.2 362.8 L390.4 364.4 L392.5 366.0 L394.7 367.6 L396.9 369.0 L399.2 370.4 L401.4 371.8 L403.7 373.1 L406.1 374.4 L408.4 375.5 L411.3 376.8 L414.6 378.0 L418.3 379.3 L422.6 380.6 L427.3 381.9 L432.5 383.3 L438.2 384.6 L444.3 386.1 L450.2 387.3 L455.9 388.3 L461.3 389.1 L466.5 389.8 L471.5 390.2 L476.3 390.5 L480.8 390.6 L485.0 390.4 L488.8 390.3 L492.0 390.2 L494.7 390.2 L496.8 390.1 L498.4 390.0 L499.5 390.0 L500.0 390.0" fill="none" stroke="#ffffff" stroke-width="3.4" stroke-linecap="round" stroke-linejoin="round" />
<path d="M500.0 442.0 L500.4 442.1 L501.1 442.2 L502.1 442.4 L503.5 442.6 L505.3 442.9 L507.4 443.2 L509.9 443.7 L512.8 444.1 L515.5 444.7 L518.1 445.4 L520.6 446.3 L522.9 447.2 L525.2 448.3 L527.3 449.4 L529.3 450.7 L531.2 452.2 L533.0 453.7 L534.8 455.3 L536.5 457.1 L538.2 459.0 L539.7 461.0 L541.3 463.1 L542.7 465.4 L544.2 467.7 L545.5 470.1 L546.8 472.6 L548.0 475.1 L549.2 477.7 L550.4 480.3 L551.4 482.9 L552.4 485.6 L553.4 488.4 L554.2 490.8 L554.9 492.8 L555.5 494.6 L556.0 495.9 L556.3 497.0 L556.6 497.7 L556.7 498.0" fill="none" stroke="#ffffff" stroke-width="3.4" stroke-linecap="round" stroke-linejoin="round" />
<path d="M68.0 311.3 L69.2 311.6 L71.7 312.3 L75.3 313.3 L80.2 314.6 L86.3 316.2 L93.7 318.2 L102.2 320.4 L112.0 323.1 L122.1 325.9 L132.5 328.9 L143.3 332.1 L154.4 335.5 L165.8 339.1 L177.5 343.0 L189.6 347.0 L202.0 351.2 L213.5 354.9 L224.2 358.0 L234.1 360.5 L243.0 362.4 L251.1 363.8 L258.4 364.7 L264.8 364.9 L270.3 364.6 L275.8 364.5 L281.1 364.6 L286.4 364.9 L291.7 365.4 L296.8 366.1 L301.8 367.0 L306.8 368.1 L311.7 369.4 L316.3 371.0 L320.7 372.8 L324.9 374.8 L328.8 377.1 L332.4 379.6 L335.8 382.4 L338.9 385.4 L341.8 388.6 L344.4 391.5 L346.6 393.9 L348.4 395.9 L349.8 397.6 L350.9 398.8 L351.6 399.6 L352.0 400.0" fill="none" stroke="#ffffff" stroke-width="5.2" stroke-linecap="round" stroke-linejoin="round" />
<path d="M250.6 280.0 L251.6 280.5 L253.7 281.5 L256.7 282.9 L260.8 284.9 L265.9 287.3 L272.0 290.3 L279.1 293.7 L287.3 297.6 L295.2 301.6 L302.8 305.6 L310.1 309.6 L317.2 313.7 L324.0 317.8 L330.6 321.9 L336.9 326.1 L342.9 330.4 L348.4 334.3 L353.5 337.8 L358.0 341.0 L362.1 343.9 L365.7 346.4 L368.8 348.5 L371.3 350.4 L373.5 351.8 L375.3 353.1 L376.9 354.2 L378.2 355.2 L379.2 355.9 L380.0 356.4 L380.5 356.8 L380.8 357.0" fill="none" stroke="#ffffff" stroke-width="5.2" stroke-linecap="round" stroke-linejoin="round" />
<line x1="512.9" y1="398.4" x2="510.6" y2="417.6" stroke="#ffffff" stroke-width="1.6" stroke-linecap="round"/>
<line x1="550.3" y1="325.0" x2="571.4" y2="326.6" stroke="#ffffff" stroke-width="1.6" stroke-linecap="round"/>
<line x1="547.6" y1="333.7" x2="559.1" y2="333.9" stroke="#ffffff" stroke-width="1.6" stroke-linecap="round"/>
<line x1="506.7" y1="323.4" x2="518.4" y2="325.8" stroke="#ffffff" stroke-width="1.6" stroke-linecap="round"/>
<line x1="530.7" y1="338.4" x2="530.1" y2="348.1" stroke="#ffffff" stroke-width="1.6" stroke-linecap="round"/>
<line x1="450.8" y1="322.2" x2="452.3" y2="332.6" stroke="#ffffff" stroke-width="1.6" stroke-linecap="round"/>
<line x1="557.8" y1="411.9" x2="579.3" y2="412.3" stroke="#ffffff" stroke-width="1.6" stroke-linecap="round"/>
<line x1="519.7" y1="343.1" x2="516.0" y2="358.9" stroke="#ffffff" stroke-width="1.6" stroke-linecap="round"/>
<line x1="546.7" y1="352.8" x2="556.9" y2="351.0" stroke="#ffffff" stroke-width="1.6" stroke-linecap="round"/>
<line x1="443.1" y1="353.0" x2="442.4" y2="361.0" stroke="#ffffff" stroke-width="1.6" stroke-linecap="round"/>
<line x1="477.2" y1="353.9" x2="478.5" y2="367.6" stroke="#ffffff" stroke-width="1.6" stroke-linecap="round"/>
<line x1="495.2" y1="394.6" x2="516.2" y2="389.5" stroke="#ffffff" stroke-width="1.6" stroke-linecap="round"/>
<line x1="528.7" y1="409.0" x2="547.7" y2="407.8" stroke="#ffffff" stroke-width="1.6" stroke-linecap="round"/>
<line x1="507.3" y1="322.9" x2="517.6" y2="325.3" stroke="#ffffff" stroke-width="1.6" stroke-linecap="round"/>
<line x1="459.6" y1="399.8" x2="461.1" y2="419.1" stroke="#ffffff" stroke-width="1.6" stroke-linecap="round"/>
<line x1="479.3" y1="376.0" x2="478.2" y2="385.3" stroke="#ffffff" stroke-width="1.6" stroke-linecap="round"/>
<line x1="534.7" y1="410.5" x2="555.5" y2="406.2" stroke="#ffffff" stroke-width="1.6" stroke-linecap="round"/>
<line x1="477.6" y1="384.9" x2="475.0" y2="396.7" stroke="#ffffff" stroke-width="1.6" stroke-linecap="round"/>
<line x1="503.1" y1="354.2" x2="513.4" y2="352.0" stroke="#ffffff" stroke-width="1.6" stroke-linecap="round"/>
<line x1="453.6" y1="393.0" x2="455.8" y2="402.7" stroke="#ffffff" stroke-width="1.6" stroke-linecap="round"/>
<line x1="558.3" y1="377.0" x2="569.6" y2="377.5" stroke="#ffffff" stroke-width="1.6" stroke-linecap="round"/>
<line x1="538.3" y1="368.9" x2="546.9" y2="370.7" stroke="#ffffff" stroke-width="1.6" stroke-linecap="round"/>
<line x1="439.1" y1="372.8" x2="438.0" y2="382.3" stroke="#ffffff" stroke-width="1.6" stroke-linecap="round"/>
<line x1="553.7" y1="386.9" x2="554.0" y2="396.2" stroke="#ffffff" stroke-width="1.6" stroke-linecap="round"/>
<line x1="453.7" y1="409.0" x2="467.6" y2="412.6" stroke="#ffffff" stroke-width="1.6" stroke-linecap="round"/>
<line x1="541.5" y1="422.5" x2="556.3" y2="424.2" stroke="#ffffff" stroke-width="1.6" stroke-linecap="round"/>
<line x1="494.9" y1="352.0" x2="504.9" y2="351.4" stroke="#ffffff" stroke-width="1.6" stroke-linecap="round"/>
<line x1="558.5" y1="420.9" x2="559.7" y2="434.8" stroke="#ffffff" stroke-width="1.6" stroke-linecap="round"/>
<line x1="446.1" y1="350.0" x2="447.4" y2="368.4" stroke="#ffffff" stroke-width="1.6" stroke-linecap="round"/>
<line x1="533.3" y1="401.8" x2="531.2" y2="417.6" stroke="#ffffff" stroke-width="1.6" stroke-linecap="round"/>
<line x1="480.4" y1="394.6" x2="495.1" y2="396.6" stroke="#ffffff" stroke-width="1.6" stroke-linecap="round"/>
<line x1="521.4" y1="352.3" x2="520.7" y2="368.1" stroke="#ffffff" stroke-width="1.6" stroke-linecap="round"/>
<line x1="436.4" y1="378.3" x2="453.8" y2="378.0" stroke="#ffffff" stroke-width="1.6" stroke-linecap="round"/>
<line x1="537.1" y1="388.7" x2="536.2" y2="400.8" stroke="#ffffff" stroke-width="1.6" stroke-linecap="round"/>
<line x1="527.2" y1="407.3" x2="546.7" y2="410.9" stroke="#ffffff" stroke-width="1.6" stroke-linecap="round"/>
<line x1="521.0" y1="422.5" x2="520.8" y2="436.8" stroke="#ffffff" stroke-width="1.6" stroke-linecap="round"/>
<line x1="455.8" y1="408.2" x2="454.5" y2="421.8" stroke="#ffffff" stroke-width="1.6" stroke-linecap="round"/>
<line x1="525.0" y1="397.2" x2="543.9" y2="398.0" stroke="#ffffff" stroke-width="1.6" stroke-linecap="round"/>
<line x1="518.2" y1="365.3" x2="517.0" y2="382.6" stroke="#ffffff" stroke-width="1.6" stroke-linecap="round"/>
<line x1="525.1" y1="324.8" x2="539.2" y2="325.9" stroke="#ffffff" stroke-width="1.6" stroke-linecap="round"/>
<line x1="462.4" y1="392.7" x2="462.5" y2="401.2" stroke="#ffffff" stroke-width="1.6" stroke-linecap="round"/>
<line x1="463.3" y1="327.6" x2="475.6" y2="325.6" stroke="#ffffff" stroke-width="1.6" stroke-linecap="round"/>
<line x1="459.2" y1="325.7" x2="472.5" y2="326.4" stroke="#ffffff" stroke-width="1.6" stroke-linecap="round"/>
<line x1="508.8" y1="346.5" x2="509.1" y2="354.5" stroke="#ffffff" stroke-width="1.6" stroke-linecap="round"/>
<line x1="469.8" y1="364.2" x2="489.4" y2="363.0" stroke="#ffffff" stroke-width="1.6" stroke-linecap="round"/>
<line x1="439.5" y1="385.2" x2="455.1" y2="383.9" stroke="#ffffff" stroke-width="1.6" stroke-linecap="round"/>
<line x1="507.6" y1="420.7" x2="505.6" y2="433.6" stroke="#ffffff" stroke-width="1.6" stroke-linecap="round"/>
<line x1="515.3" y1="360.1" x2="531.6" y2="360.6" stroke="#ffffff" stroke-width="1.6" stroke-linecap="round"/>
<line x1="554.7" y1="421.7" x2="552.3" y2="433.7" stroke="#ffffff" stroke-width="1.6" stroke-linecap="round"/>
<line x1="435.1" y1="333.1" x2="437.9" y2="348.3" stroke="#ffffff" stroke-width="1.6" stroke-linecap="round"/>
<line x1="513.7" y1="413.8" x2="527.6" y2="411.9" stroke="#ffffff" stroke-width="1.6" stroke-linecap="round"/>
<line x1="471.4" y1="422.2" x2="492.4" y2="426.6" stroke="#ffffff" stroke-width="1.6" stroke-linecap="round"/>
<line x1="509.5" y1="348.8" x2="510.1" y2="362.7" stroke="#ffffff" stroke-width="1.6" stroke-linecap="round"/>
<line x1="474.9" y1="423.4" x2="486.9" y2="423.2" stroke="#ffffff" stroke-width="1.6" stroke-linecap="round"/>
<line x1="450.2" y1="386.0" x2="462.2" y2="387.7" stroke="#ffffff" stroke-width="1.6" stroke-linecap="round"/>
<line x1="538.4" y1="323.4" x2="535.9" y2="334.4" stroke="#ffffff" stroke-width="1.6" stroke-linecap="round"/>
<line x1="532.7" y1="347.3" x2="542.6" y2="349.8" stroke="#ffffff" stroke-width="1.6" stroke-linecap="round"/>
<line x1="471.6" y1="384.6" x2="488.7" y2="385.5" stroke="#ffffff" stroke-width="1.6" stroke-linecap="round"/>
<line x1="527.9" y1="334.2" x2="527.7" y2="345.8" stroke="#ffffff" stroke-width="1.6" stroke-linecap="round"/>
<line x1="477.0" y1="352.6" x2="478.0" y2="366.1" stroke="#ffffff" stroke-width="1.6" stroke-linecap="round"/>
<line x1="528.1" y1="382.9" x2="539.7" y2="382.6" stroke="#ffffff" stroke-width="1.6" stroke-linecap="round"/>
<line x1="549.6" y1="413.5" x2="548.4" y2="421.6" stroke="#ffffff" stroke-width="1.6" stroke-linecap="round"/>
<line x1="488.5" y1="381.3" x2="488.6" y2="396.9" stroke="#ffffff" stroke-width="1.6" stroke-linecap="round"/>
<line x1="549.0" y1="361.7" x2="568.7" y2="358.7" stroke="#ffffff" stroke-width="1.6" stroke-linecap="round"/>
<line x1="472.1" y1="407.5" x2="491.7" y2="409.4" stroke="#ffffff" stroke-width="1.6" stroke-linecap="round"/>
<line x1="489.1" y1="351.5" x2="492.5" y2="370.1" stroke="#ffffff" stroke-width="1.6" stroke-linecap="round"/>
<line x1="494.8" y1="378.6" x2="507.2" y2="376.4" stroke="#ffffff" stroke-width="1.6" stroke-linecap="round"/>
<line x1="508.2" y1="405.6" x2="519.3" y2="407.4" stroke="#ffffff" stroke-width="1.6" stroke-linecap="round"/>
<line x1="534.0" y1="390.4" x2="551.6" y2="394.6" stroke="#ffffff" stroke-width="1.6" stroke-linecap="round"/>
<line x1="559.8" y1="394.2" x2="579.4" y2="391.5" stroke="#ffffff" stroke-width="1.6" stroke-linecap="round"/>
<path d="M159.3 280.0 L160.4 281.0 L162.7 282.9 L166.1 285.9 L170.7 289.8 L175.6 293.8 L180.8 298.1 L186.3 302.5 L192.2 307.1 L199.7 311.0 L208.8 314.3 L219.6 316.9 L232.0 318.8 L243.4 320.8 L253.9 322.7 L263.3 324.7 L271.8 326.6 L279.3 328.1 L285.8 329.1 L291.3 329.6 L295.9 329.6 L300.9 330.6 L306.5 332.5 L312.5 335.4 L319.0 339.3 L325.9 343.6 L333.0 348.2 L340.5 353.1 L348.3 358.4 L355.3 363.1 L361.6 367.2 L367.1 370.7 L371.8 373.5 L376.5 376.5 L381.3 379.6 L386.0 382.8 L390.7 386.0 L394.8 389.5 L398.4 393.0 L401.3 396.6 L403.7 400.4 L405.8 404.0 L407.7 407.6 L409.3 411.0 L410.8 414.4 L412.5 417.0 L414.7 418.9 L417.1 420.1 L420.0 420.5 L422.8 420.3 L425.6 419.3 L428.5 417.7 L431.3 415.3 L434.6 413.1 L438.4 411.0 L442.7 408.9 L447.4 407.1 L451.4 405.4 L454.7 404.0 L457.3 402.8 L459.2 401.9 L460.8 401.5 L462.2 401.8 L463.4 402.6 L464.4 403.9 L465.6 405.6 L467.0 407.5 L468.7 409.6 L470.5 412.0 L472.9 414.5 L475.8 417.1 L479.1 419.8 L482.8 422.7 L486.4 424.4 L489.7 425.1 L492.8 424.8 L495.7 423.3 L498.3 421.6 L500.7 419.4 L502.8 417.0 L504.8 414.1 L507.1 411.7 L510.0 409.7 L513.3 408.1 L517.0 407.0 L520.8 406.4 L524.6 406.4 L528.4 407.0 L532.1 408.1 L535.9 409.6 L539.7 411.4 L543.5 413.4 L547.2 415.8 L550.7 417.9 L553.7 419.8 L556.4 421.4 L558.8 422.9 L561.6 424.4 L564.9 426.1 L568.7 427.8 L572.9 429.8 L576.8 432.0 L580.4 434.6 L583.6 437.6 L586.4 440.9 L589.3 444.7 L592.1 449.2 L594.9 454.3 L597.8 459.9 L600.4 465.3 L602.7 470.5 L604.8 475.5 L606.8 480.2 L608.5 484.4 L610.2 488.1 L611.7 491.3 L613.1 494.0 L614.2 496.0 L614.9 497.3 L615.2 498.0" fill="none" stroke="#5cc1ee" stroke-width="2.8" stroke-linecap="round" stroke-linejoin="round" />
<path d="M237.5 280.0 L237.6 280.3 L237.9 281.0 L238.2 282.0 L238.7 283.3 L239.4 284.9 L240.1 286.9 L241.0 289.1 L241.9 291.8 L242.8 294.3 L243.7 296.8 L244.4 299.3 L245.1 301.8 L245.6 304.2 L246.1 306.5 L246.5 308.8 L246.9 311.1 L247.2 313.1 L247.6 314.9 L248.0 316.5 L248.4 317.8 L248.8 318.9 L249.3 319.7 L249.8 320.3 L250.2 320.7 L250.7 321.0 L251.1 321.3 L251.4 321.5 L251.6 321.7 L251.8 321.9 L251.9 322.0 L252.0 322.0" fill="none" stroke="#5cc1ee" stroke-width="2.6" stroke-linecap="round" stroke-linejoin="round" />
<path d="M284.5 329.6 L285.4 330.0 L287.2 330.9 L289.9 332.3 L293.5 334.0 L298.0 336.3 L303.3 338.9 L309.6 342.0 L316.8 345.6 L323.5 349.2 L329.7 352.8 L335.5 356.5 L340.8 360.2 L345.7 363.9 L350.0 367.7 L353.9 371.6 L357.4 375.4 L360.6 379.0 L363.7 382.2 L366.5 385.1 L369.2 387.6 L371.7 389.8 L374.0 391.7 L376.1 393.2 L377.9 394.4 L379.9 395.6 L381.9 396.9 L384.0 398.2 L386.1 399.5 L388.3 400.8 L390.6 402.2 L392.9 403.6 L395.2 405.0 L397.3 406.3 L399.1 407.3 L400.5 408.2 L401.7 408.9 L402.6 409.5 L403.2 409.8 L403.5 410.0" fill="none" stroke="#5cc1ee" stroke-width="1.3" stroke-linecap="round" stroke-linejoin="round" />
<path d="M547.2 429.7 L549.6 430.4 L554.3 431.9 L557.6 436.9 L559.5 445.4 L560.4 449.6" fill="none" stroke="#5cc1ee" stroke-width="2.2" stroke-linecap="round" stroke-linejoin="round" />
<path d="M68.0 426.0 L68.3 426.2 L68.9 426.5 L69.7 427.0 L70.9 427.6 L72.3 428.5 L74.0 429.4 L76.0 430.6 L78.3 431.9 L80.7 433.3 L83.1 434.9 L85.6 436.6 L88.2 438.4 L90.9 440.3 L93.7 442.3 L96.5 444.5 L99.5 446.8 L102.1 449.0 L104.6 451.1 L106.8 453.2 L108.7 455.1 L110.5 457.0 L111.9 458.8 L113.2 460.5 L114.1 462.1 L115.1 464.0 L116.1 466.2 L117.1 468.6 L118.1 471.3 L119.1 474.3 L120.0 477.5 L121.0 481.0 L122.0 484.8 L122.8 488.1 L123.6 490.9 L124.2 493.3 L124.7 495.2 L125.0 496.6 L125.3 497.5 L125.4 498.0" fill="none" stroke="#f0c75e" stroke-width="4.0" stroke-linecap="round" stroke-linejoin="round" />
<path d="M388.3 387.2 L388.0 387.5 L387.5 388.1 L386.7 389.0 L385.6 390.2 L384.3 391.6 L382.7 393.4 L380.9 395.5 L378.7 397.8 L376.8 400.1 L374.9 402.3 L373.3 404.4 L371.7 406.4 L370.3 408.3 L369.1 410.2 L368.0 411.9 L367.1 413.6 L366.2 415.3 L365.5 417.0 L364.8 418.7 L364.2 420.5 L363.7 422.3 L363.3 424.1 L363.0 426.0 L362.7 427.9 L362.5 430.5 L362.3 433.9 L362.2 438.1 L362.1 443.0 L362.0 448.7 L361.9 455.1 L361.9 462.3 L361.9 470.2 L361.9 477.2 L361.9 483.1 L361.9 488.1 L361.9 492.0 L361.9 495.0 L361.9 497.0 L361.9 498.0" fill="none" stroke="#f0c75e" stroke-width="4.0" stroke-linecap="round" stroke-linejoin="round" />
<circle cx="361.5" cy="416.5" r="8.6" fill="none" stroke="#f0c75e" stroke-width="3"/>
<path d="M388.3 387.2 L389.5 386.4 L391.8 384.7 L395.4 382.2 L400.1 379.0 L405.0 375.4 L409.9 371.6 L415.0 367.6 L420.2 363.4 L424.5 359.1 L427.8 354.9 L430.1 350.6 L431.6 346.4 L433.0 342.2 L434.5 338.2 L436.1 334.2 L437.6 330.3 L439.7 326.4 L442.3 322.5 L445.4 318.6 L449.0 314.6 L452.9 311.2 L457.0 308.3 L461.4 306.0 L466.0 304.2 L470.9 302.9 L475.9 301.9 L481.1 301.5 L486.5 301.5 L491.4 301.9 L495.9 302.9 L500.0 304.2 L503.5 306.0 L506.6 308.2 L509.1 310.7 L511.1 313.5 L512.5 316.8 L514.0 320.2 L515.4 323.8 L516.8 327.5 L518.3 331.5 L520.0 335.0 L522.2 338.0 L524.7 340.6 L527.6 342.8 L532.0 345.1 L537.9 347.5 L545.4 350.1 L554.5 352.9 L563.6 355.8 L572.8 358.8 L582.2 362.0 L591.6 365.2 L598.7 367.7 L603.4 369.4 L605.8 370.2" fill="none" stroke="#f89a56" stroke-width="3.4" stroke-linecap="round" stroke-linejoin="round" />
<path d="M605.8 370.2 L620.9 373.0" fill="none" stroke="#f0c75e" stroke-width="3.4" stroke-linecap="round" stroke-linejoin="round" />
<path d="M451.5 280.0 L454.7 283.6 L461.2 290.8 L466.5 298.0 L470.9 305.1 L475.5 313.0 L480.5 321.7 L488.1 321.7 L498.1 313.0 L504.3 306.5 L506.4 302.2 L510.7 298.6 L517.2 295.8 L524.7 292.6 L533.3 289.0 L538.3 285.4 L539.8 281.8 L540.5 280.0" fill="none" stroke="#f0c75e" stroke-width="3.0" stroke-linecap="round" stroke-linejoin="round" />
<path d="M463.0 280.0 L466.2 283.2 L472.8 289.8 L476.7 296.9 L478.1 304.8 L479.9 313.0 L481.9 321.7 L483.0 326.0" fill="none" stroke="#f0c75e" stroke-width="2.6" stroke-linecap="round" stroke-linejoin="round" />
<path d="M549.1 280.0 L549.5 280.7 L550.2 282.2 L551.3 284.3 L552.7 287.2 L554.3 290.4 L556.1 294.0 L558.1 298.0 L560.3 302.2 L561.5 307.7 L561.9 314.4 L561.3 322.2 L559.9 331.1 L558.3 338.7 L556.7 344.8 L555.0 349.4 L553.3 352.7 L551.3 355.6 L549.2 358.3 L546.8 360.8 L544.3 362.9 L542.6 365.1 L541.7 367.3 L541.6 369.4 L542.3 371.6 L543.5 374.3 L545.1 377.5 L547.1 381.3 L549.6 385.5 L552.1 390.2 L554.4 395.3 L556.7 400.8 L559.0 406.8 L561.8 412.4 L565.3 417.7 L569.4 422.6 L574.1 427.4 L579.0 431.8 L583.9 436.1 L589.0 440.1 L594.2 443.9 L598.8 447.5 L602.8 450.8 L606.2 453.8 L609.1 456.7 L612.4 459.7 L616.1 463.0 L620.4 466.6 L625.1 470.3 L629.6 473.9 L633.9 477.2 L637.9 480.2 L641.6 483.1 L645.3 485.4 L648.7 487.3 L652.1 488.7 L655.2 489.6 L657.6 490.3 L659.2 490.8 L660.0 491.0" fill="none" stroke="#f0c75e" stroke-width="3.8" stroke-linecap="round" stroke-linejoin="round" />
<path d="M547.2 360.8 L551.9 369.8 L561.4 387.7 L568.5 401.4 L573.2 410.9 L577.0 420.3 L579.8 429.7 L581.2 434.4" fill="none" stroke="#f0c75e" stroke-width="2.6" stroke-linecap="round" stroke-linejoin="round" />
<path d="M588.8 364.6 L586.4 367.9 L581.7 374.5 L577.4 379.7 L573.7 383.4 L570.3 388.0 L567.5 393.3 L566.0 396.0" fill="none" stroke="#f0c75e" stroke-width="2.8" stroke-linecap="round" stroke-linejoin="round" />
<path d="M579.3 498.0 L584.0 494.4 L593.5 487.2 L602.0 480.8 L609.5 475.0 L614.2 469.4 L616.2 463.7 L614.3 457.1 L608.6 449.6 L605.8 445.8" fill="none" stroke="#f0c75e" stroke-width="3.0" stroke-linecap="round" stroke-linejoin="round" />
<circle cx="363.5" cy="389.5" r="5.6" fill="#ff0000"/>
<text x="208.5" y="380.6" font-family="Liberation Sans" font-size="13.5" fill="#5f6c8e" font-weight="400" textLength="57" lengthAdjust="spacing" >ARMLEY</text>
<text x="288.2" y="409.8" font-family="Liberation Sans" font-size="13.5" fill="#5f6c8e" font-weight="400" textLength="31" lengthAdjust="spacing" >NEW</text>
<text x="270" y="425" font-family="Liberation Sans" font-size="13.5" fill="#5f6c8e" font-weight="400" textLength="66" lengthAdjust="spacing" >WORTLEY</text>
<text x="234.8" y="452.9" font-family="Liberation Sans" font-size="13.5" fill="#5f6c8e" font-weight="400" textLength="66" lengthAdjust="spacing" >WORTLEY</text>
<text x="67.5" y="486.2" font-family="Liberation Sans" font-size="13.5" fill="#5f6c8e" font-weight="400" textLength="43" lengthAdjust="spacing" >RNLEY</text>
<text x="192.5" y="498.3" font-family="Liberation Sans" font-size="11" fill="#5f6c8e" font-weight="400" textLength="69" lengthAdjust="spacing" >GREEN SIDE</text>
<text x="421.2" y="428.9" font-family="Liberation Sans" font-size="13.5" fill="#5f6c8e" font-weight="400" textLength="68" lengthAdjust="spacing" >HOLBECK</text>
<text x="430.3" y="444" font-family="Liberation Sans" font-size="13.5" fill="#5f6c8e" font-weight="400" textLength="49" lengthAdjust="spacing" >URBAN</text>
<text x="425.1" y="459.6" font-family="Liberation Sans" font-size="13.5" fill="#5f6c8e" font-weight="400" textLength="60" lengthAdjust="spacing" >VILLAGE</text>
<text x="381.5" y="491.5" font-family="Liberation Sans" font-size="13.5" fill="#5f6c8e" font-weight="400" textLength="67" lengthAdjust="spacing" >HOLBECK</text>
<text x="536.5" y="419.2" font-family="Liberation Sans" font-size="11.8" fill="#5f6c8e" font-weight="400" textLength="63" lengthAdjust="spacing" >STEANDER</text>
<text x="502" y="306.2" font-family="Liberation Sans" font-size="13.5" fill="#5f6c8e" font-weight="400" textLength="54.5" lengthAdjust="spacing" >LOVELL</text>
<text x="509.8" y="321.9" font-family="Liberation Sans" font-size="13.5" fill="#5f6c8e" font-weight="400" textLength="39" lengthAdjust="spacing" >PARK</text>
<text x="584.2" y="340.2" font-family="Liberation Sans" font-size="13.5" fill="#5f6c8e" font-weight="400" textLength="39" lengthAdjust="spacing" >BURM</text>
<text x="643" y="340.2" font-family="Liberation Sans" font-size="13.5" fill="#5f6c8e" font-weight="400" textLength="17" lengthAdjust="spacing" >TO</text>
<text x="632.6" y="409.6" font-family="Liberation Sans" font-size="13.5" fill="#5f6c8e" font-weight="400" textLength="30" lengthAdjust="spacing" >EAS</text>
<text x="649.6" y="424.2" font-family="Liberation Sans" font-size="13.5" fill="#5f6c8e" font-weight="400"  >P</text>
<text x="626.4" y="455" font-family="Liberation Sans" font-size="13.5" fill="#5f6c8e" font-weight="400" textLength="40" lengthAdjust="spacing" >CROS</text>
<text x="626.4" y="470" font-family="Liberation Sans" font-size="13.5" fill="#5f6c8e" font-weight="400" textLength="40" lengthAdjust="spacing" >GREE</text>
<text x="399" y="306.2" font-family="Liberation Sans" font-size="12.5" fill="#7b6c5c" font-weight="400" textLength="52.5" lengthAdjust="spacing" >University</text>
<text x="404.2" y="319.2" font-family="Liberation Sans" font-size="12.5" fill="#7b6c5c" font-weight="400" textLength="43" lengthAdjust="spacing" >of Leeds</text>
<text x="472" y="385" font-family="Liberation Sans" font-size="18" fill="#111111" font-weight="400" textLength="50" lengthAdjust="spacing" >Leeds</text>
<text x="0" y="0" font-family="Liberation Sans" font-size="12.5" fill="#3a3a3a" font-weight="400" textLength="47" lengthAdjust="spacing" transform="translate(144.5,380) rotate(44)">Whingate</text>
<path d="M419.5 287.5 L425.3 284.6 L431 287.5 L425.3 290.4 Z M421.5 289 V292 Q425.3 294 429 292 V289" fill="#7b6c2c" stroke="#7b6c2c" stroke-width="0.8"/>
<rect x="60.5" y="300.1" width="22.599999999999994" height="11.0" rx="2.5" fill="#ffffff" stroke="#222" stroke-width="1"/>
<text x="71.8" y="308.90000000000003" text-anchor="middle" font-family="Liberation Sans" font-weight="700" font-size="9" fill="#222">47</text>
<rect x="110.2" y="416.1" width="35.499999999999986" height="11.799999999999955" rx="2.5" fill="#ffffff" stroke="#222" stroke-width="1"/>
<text x="127.94999999999999" y="425.3" text-anchor="middle" font-family="Liberation Sans" font-weight="700" font-size="9" fill="#222">B6154</text>
<rect x="309.8" y="489.2" width="23.69999999999999" height="10.800000000000011" rx="2.5" fill="#ffffff" stroke="#222" stroke-width="1"/>
<text x="321.65" y="497.90000000000003" text-anchor="middle" font-family="Liberation Sans" font-weight="700" font-size="9" fill="#222">A62</text>
<rect x="355.5" y="348.0" width="25" height="11.300000000000011" rx="2.5" fill="#ffffff" stroke="#222" stroke-width="1"/>
<text x="368.0" y="356.95" text-anchor="middle" font-family="Liberation Sans" font-weight="700" font-size="9" fill="#222">A65</text>
<rect x="402.3" y="360.1" width="42.099999999999966" height="12.0" rx="2.5" fill="#ffffff" stroke="#222" stroke-width="1"/>
<text x="423.35" y="369.40000000000003" text-anchor="middle" font-family="Liberation Sans" font-weight="700" font-size="9" fill="#222">A58(M)</text>
<rect x="526.0" y="346.2" width="41.89999999999998" height="12.0" rx="2.5" fill="#ffffff" stroke="#222" stroke-width="1"/>
<text x="546.95" y="355.5" text-anchor="middle" font-family="Liberation Sans" font-weight="700" font-size="9" fill="#222">A64(M)</text>
<rect x="555.3" y="384.9" width="30.200000000000045" height="11.800000000000011" rx="2.5" fill="#ffffff" stroke="#222" stroke-width="1"/>
<text x="570.4" y="394.09999999999997" text-anchor="middle" font-family="Liberation Sans" font-weight="700" font-size="9" fill="#222">A653</text>
<rect x="547.7" y="484.1" width="30.799999999999955" height="12.0" rx="2.5" fill="#ffffff" stroke="#222" stroke-width="1"/>
<text x="563.1" y="493.40000000000003" text-anchor="middle" font-family="Liberation Sans" font-weight="700" font-size="9" fill="#222">A639</text>
<rect x="650.7" y="372.6" width="20.799999999999955" height="11.5" rx="2.5" fill="#ffffff" stroke="#222" stroke-width="1"/>
<text x="661.1" y="381.65000000000003" text-anchor="middle" font-family="Liberation Sans" font-weight="700" font-size="9" fill="#222">A</text>
<rect x="621" y="290.5" width="29" height="87.5" rx="4" fill="#ffffff" stroke="rgba(0,0,0,0.12)" stroke-width="1"/>
<line x1="621.5" y1="320.4" x2="649.5" y2="320.4" stroke="#dddddd" stroke-width="1"/>
<line x1="621.5" y1="349.1" x2="649.5" y2="349.1" stroke="#dddddd" stroke-width="1"/>
<path d="M635.5 299.5 V311.5 M629.5 305.5 H641.5" stroke="#c8c8c8" stroke-width="2.2"/>
<path d="M629.5 334.6 H641.5" stroke="#222" stroke-width="2.4"/>
<path d="M635.5 355.5 L631.6 364.5 H639.4 Z" fill="#222"/>
<path d="M635.5 373.5 L631.6 364.8 H639.4 Z" fill="#bbbbbb"/>
</svg>
</div>

<!-- business card -->
<div class="card" style="left:67px;top:521px;width:594px;height:107px"></div>

<!-- ordering -->
<div class="card" style="left:683px;top:171px;width:286px;height:152px"></div>
<!-- delivery -->
<div class="card" style="left:991px;top:171px;width:286px;height:152px"></div>
<!-- terminals -->
<div class="abs" style="left:684px;top:346px;width:284px;height:153px;background:#fff;border:2px solid #f01020;border-radius:3px;box-shadow:0 4px 18px rgba(0,0,0,.16)"></div>
<!-- stock -->
<div class="card" style="left:991px;top:345px;width:286px;height:152px"></div>
<!-- payment -->
<div class="abs" style="left:1300px;top:172px;width:592px;height:150px;background:#ebecef;border-radius:3px"></div>

<!-- arrows -->
<svg class="abs" style="left:932px;top:193px" width="16" height="14"><path d="M1 7 H14 M8.5 1.5 L14 7 L8.5 12.5" stroke="#4b5b6a" stroke-width="1.7" fill="none" stroke-linecap="round" stroke-linejoin="round"/></svg>
<svg class="abs" style="left:1240px;top:193px" width="16" height="14"><path d="M1 7 H14 M8.5 1.5 L14 7 L8.5 12.5" stroke="#4b5b6a" stroke-width="1.7" fill="none" stroke-linecap="round" stroke-linejoin="round"/></svg>
<svg class="abs" style="left:930px;top:369px" width="16" height="14"><path d="M1 7 H14 M8.5 1.5 L14 7 L8.5 12.5" stroke="#4b5b6a" stroke-width="1.7" fill="none" stroke-linecap="round" stroke-linejoin="round"/></svg>
<svg class="abs" style="left:1240px;top:367px" width="16" height="14"><path d="M1 7 H14 M8.5 1.5 L14 7 L8.5 12.5" stroke="#4b5b6a" stroke-width="1.7" fill="none" stroke-linecap="round" stroke-linejoin="round"/></svg>

<!-- badges -->
<div class="abs" style="left:704px;top:270px;width:79px;height:30px;border-radius:15px;background:#e4e7ea"></div>
<div class="abs" style="left:1012px;top:271px;width:67px;height:30px;border-radius:15px;background:#d9ede5"></div>
<svg class="abs" style="left:1023px;top:279px" width="18" height="14"><path d="M2 7.5 L6.5 12 L16 2.5" stroke="#127a4c" stroke-width="2.2" fill="none" stroke-linecap="round" stroke-linejoin="round"/></svg>
<div class="abs" style="left:706px;top:447px;width:100px;height:30px;border-radius:15px;background:#d63034"></div>
<svg class="abs" style="left:717px;top:454px" width="18" height="16"><path d="M9 1.2 L16.8 14.8 L1.2 14.8 Z" fill="#fff" stroke="#fff" stroke-width="1.4" stroke-linejoin="round"/><rect x="8.1" y="5.5" width="1.8" height="5" fill="#d63034"/><rect x="8.1" y="11.6" width="1.8" height="1.8" fill="#d63034"/></svg>

<div class="t" style="left:114px;top:10.45px;font-size:16px;line-height:16px;color:#d3dbe2;letter-spacing:-0.3px;">Redbox</div>
<div class="t" style="left:195px;top:10.45px;font-size:16px;line-height:16px;color:#d3dbe2;letter-spacing:0.2px;">Outlets</div>
<div class="t" style="left:273px;top:10.45px;font-size:16px;line-height:16px;color:#d3dbe2;">1 Castleton Mill</div>
<div class="t" style="left:61px;top:59.15px;font-size:14px;line-height:14px;color:#ffffff;letter-spacing:0.18px;">Overview</div>
<div class="t" style="left:151px;top:59.15px;font-size:14px;line-height:14px;color:#7d8d9b;letter-spacing:0.1px;">Details</div>
<div class="t" style="left:225.5px;top:59.15px;font-size:14px;line-height:14px;color:#7d8d9b;">Financial</div>
<div class="t" style="left:312.5px;top:59.15px;font-size:14px;line-height:14px;color:#7d8d9b;letter-spacing:0.11px;">Terminals</div>
<div class="t" style="left:404.2px;top:59.15px;font-size:14px;line-height:14px;color:#7d8d9b;letter-spacing:0.17px;">Delivery</div>
<div class="t" style="left:486.5px;top:59.15px;font-size:14px;line-height:14px;color:#7d8d9b;letter-spacing:0.22px;">Ordering</div>
<div class="t" style="left:573.2px;top:59.15px;font-size:14px;line-height:14px;color:#7d8d9b;letter-spacing:-0.15px;">Reviews</div>
<div class="t" style="left:656.5px;top:59.15px;font-size:14px;line-height:14px;color:#7d8d9b;letter-spacing:0.2px;">Stock</div>
<div class="t" style="left:723.2px;top:59.15px;font-size:14px;line-height:14px;color:#7d8d9b;letter-spacing:0.11px;">Track &amp; Trace</div>
<div class="t" style="left:842.3px;top:59.15px;font-size:14px;line-height:14px;color:#7d8d9b;letter-spacing:-0.07px;">Users</div>
<div class="t" style="left:909.6px;top:59.15px;font-size:14px;line-height:14px;color:#7d8d9b;">Tables</div>
<div class="t" style="left:108.3px;top:127.85px;font-size:14px;line-height:14px;color:#1d2125;letter-spacing:0.28px;">We are currently in a peak order period, during this time it may take up to 60 minutes to reflect updates to your menu or outlet settings.</div>
<div class="t" style="left:156.5px;top:193.35px;font-size:16px;line-height:16px;font-weight:700;color:#1b1f24;">Outlet</div>
<div class="t" style="left:156.3px;top:215.22px;font-size:21px;line-height:21px;font-weight:700;color:#f0283c;letter-spacing:-0.27px;">1 Castleton Mill</div>
<div class="t" style="left:156.5px;top:242.15px;font-size:14px;line-height:14px;color:#1d2125;">1 Castleton Mill, Leeds, LS12 4TS</div>
<div class="t" style="left:615.3px;top:194.15px;font-size:14px;line-height:14px;color:#1f64a0;">Edit</div>
<div class="t" style="left:704.5px;top:193.25px;font-size:16px;line-height:16px;font-weight:700;color:#1b1f24;letter-spacing:-0.27px;">Ordering</div>
<div class="t" style="left:704.5px;top:230.37px;font-size:22px;line-height:22px;font-weight:700;color:#1b1f24;letter-spacing:-0.8px;">Closed Today</div>
<div class="t" style="left:716.3px;top:278.15px;font-size:14px;line-height:14px;color:#2b3035;letter-spacing:-0.7px;">CLOSED</div>
<div class="t" style="left:1012.3px;top:193.75px;font-size:16px;line-height:16px;font-weight:700;color:#1b1f24;letter-spacing:-0.18px;">Delivery</div>
<svg class="abs" style="left:0;top:0;overflow:visible" width="1" height="1"><path d="M1020.3 228 H1025.1 V253.7 H1020.1 V234 L1013.6 238.3 V233.2 Z" fill="#1b1f24"/></svg>
<div class="t" style="left:1034.6px;top:239.20px;font-size:15px;line-height:15px;color:#b9bdc1;letter-spacing:-0.15px;">zones</div>
<div class="t" style="left:1047px;top:279.05px;font-size:14px;line-height:14px;color:#127a4c;letter-spacing:-1.2px;">OK</div>
<div class="t" style="left:706.3px;top:369.55px;font-size:16px;line-height:16px;font-weight:700;color:#1b1f24;letter-spacing:-0.22px;">Terminals</div>
<svg class="abs" style="left:0;top:0;overflow:visible" width="1" height="1"><path d="M714.3 404.1 H719.1 V429.7 H714.1 V410 L707.7 414.2 V409 Z" fill="#1b1f24"/></svg>
<div class="t" style="left:741.2px;top:455.45px;font-size:14px;line-height:14px;font-weight:700;color:#ffffff;letter-spacing:-0.44px;">1 Offline</div>
<div class="t" style="left:1012.1px;top:368.45px;font-size:16px;line-height:16px;font-weight:700;color:#1b1f24;letter-spacing:-0.17px;">Stock</div>
<div class="t" style="left:1012px;top:398.12px;font-size:36px;line-height:36px;font-weight:700;color:#1b1f24;">9</div>
<div class="t" style="left:1040.3px;top:413.80px;font-size:15px;line-height:15px;color:#b9bdc1;">items</div>
<div class="t" style="left:1323.5px;top:196.96px;font-size:18px;line-height:18px;font-weight:700;color:#1b1f24;letter-spacing:-0.3px;">Payment Processing</div>
<div class="t" style="left:1324px;top:225.05px;font-size:14px;line-height:14px;color:#1d2125;letter-spacing:0.27px">Find out more about direct payments in this outlets <span style="color:#1f64a0">Financial Settings</span>.</div>
<div class="t" style="left:88px;top:544.45px;font-size:16px;line-height:16px;font-weight:700;color:#1b1f24;letter-spacing:-0.55px;">Business</div>
<div class="t" style="left:88px;top:573.65px;font-size:14px;line-height:14px;font-weight:700;color:#1f64a0;letter-spacing:-0.33px;">Redbox</div>
<div class="t" style="left:87.5px;top:591.85px;font-size:14px;line-height:14px;color:#1d2125;letter-spacing:-0.02px;">Leeds, LS12 4TS</div>
<div class="t" style="left:364px;top:544.45px;font-size:16px;line-height:16px;font-weight:700;color:#1b1f24;">Marketplace</div>
<div class="t" style="left:364px;top:573.65px;font-size:14px;line-height:14px;font-weight:700;color:#1f64a0;letter-spacing:-0.33px;">Redbox</div>
<div class="t" style="left:363.5px;top:591.85px;font-size:14px;line-height:14px;color:#1d2125;letter-spacing:-0.08px;">Leeds, LS12 2DS</div>

<div class="abs" style="left:150px;top:855px;width:1610px;height:60px;border-radius:30px;box-shadow:0 0 45px 12px rgba(0,0,0,0.09)"></div>
</body></html>
